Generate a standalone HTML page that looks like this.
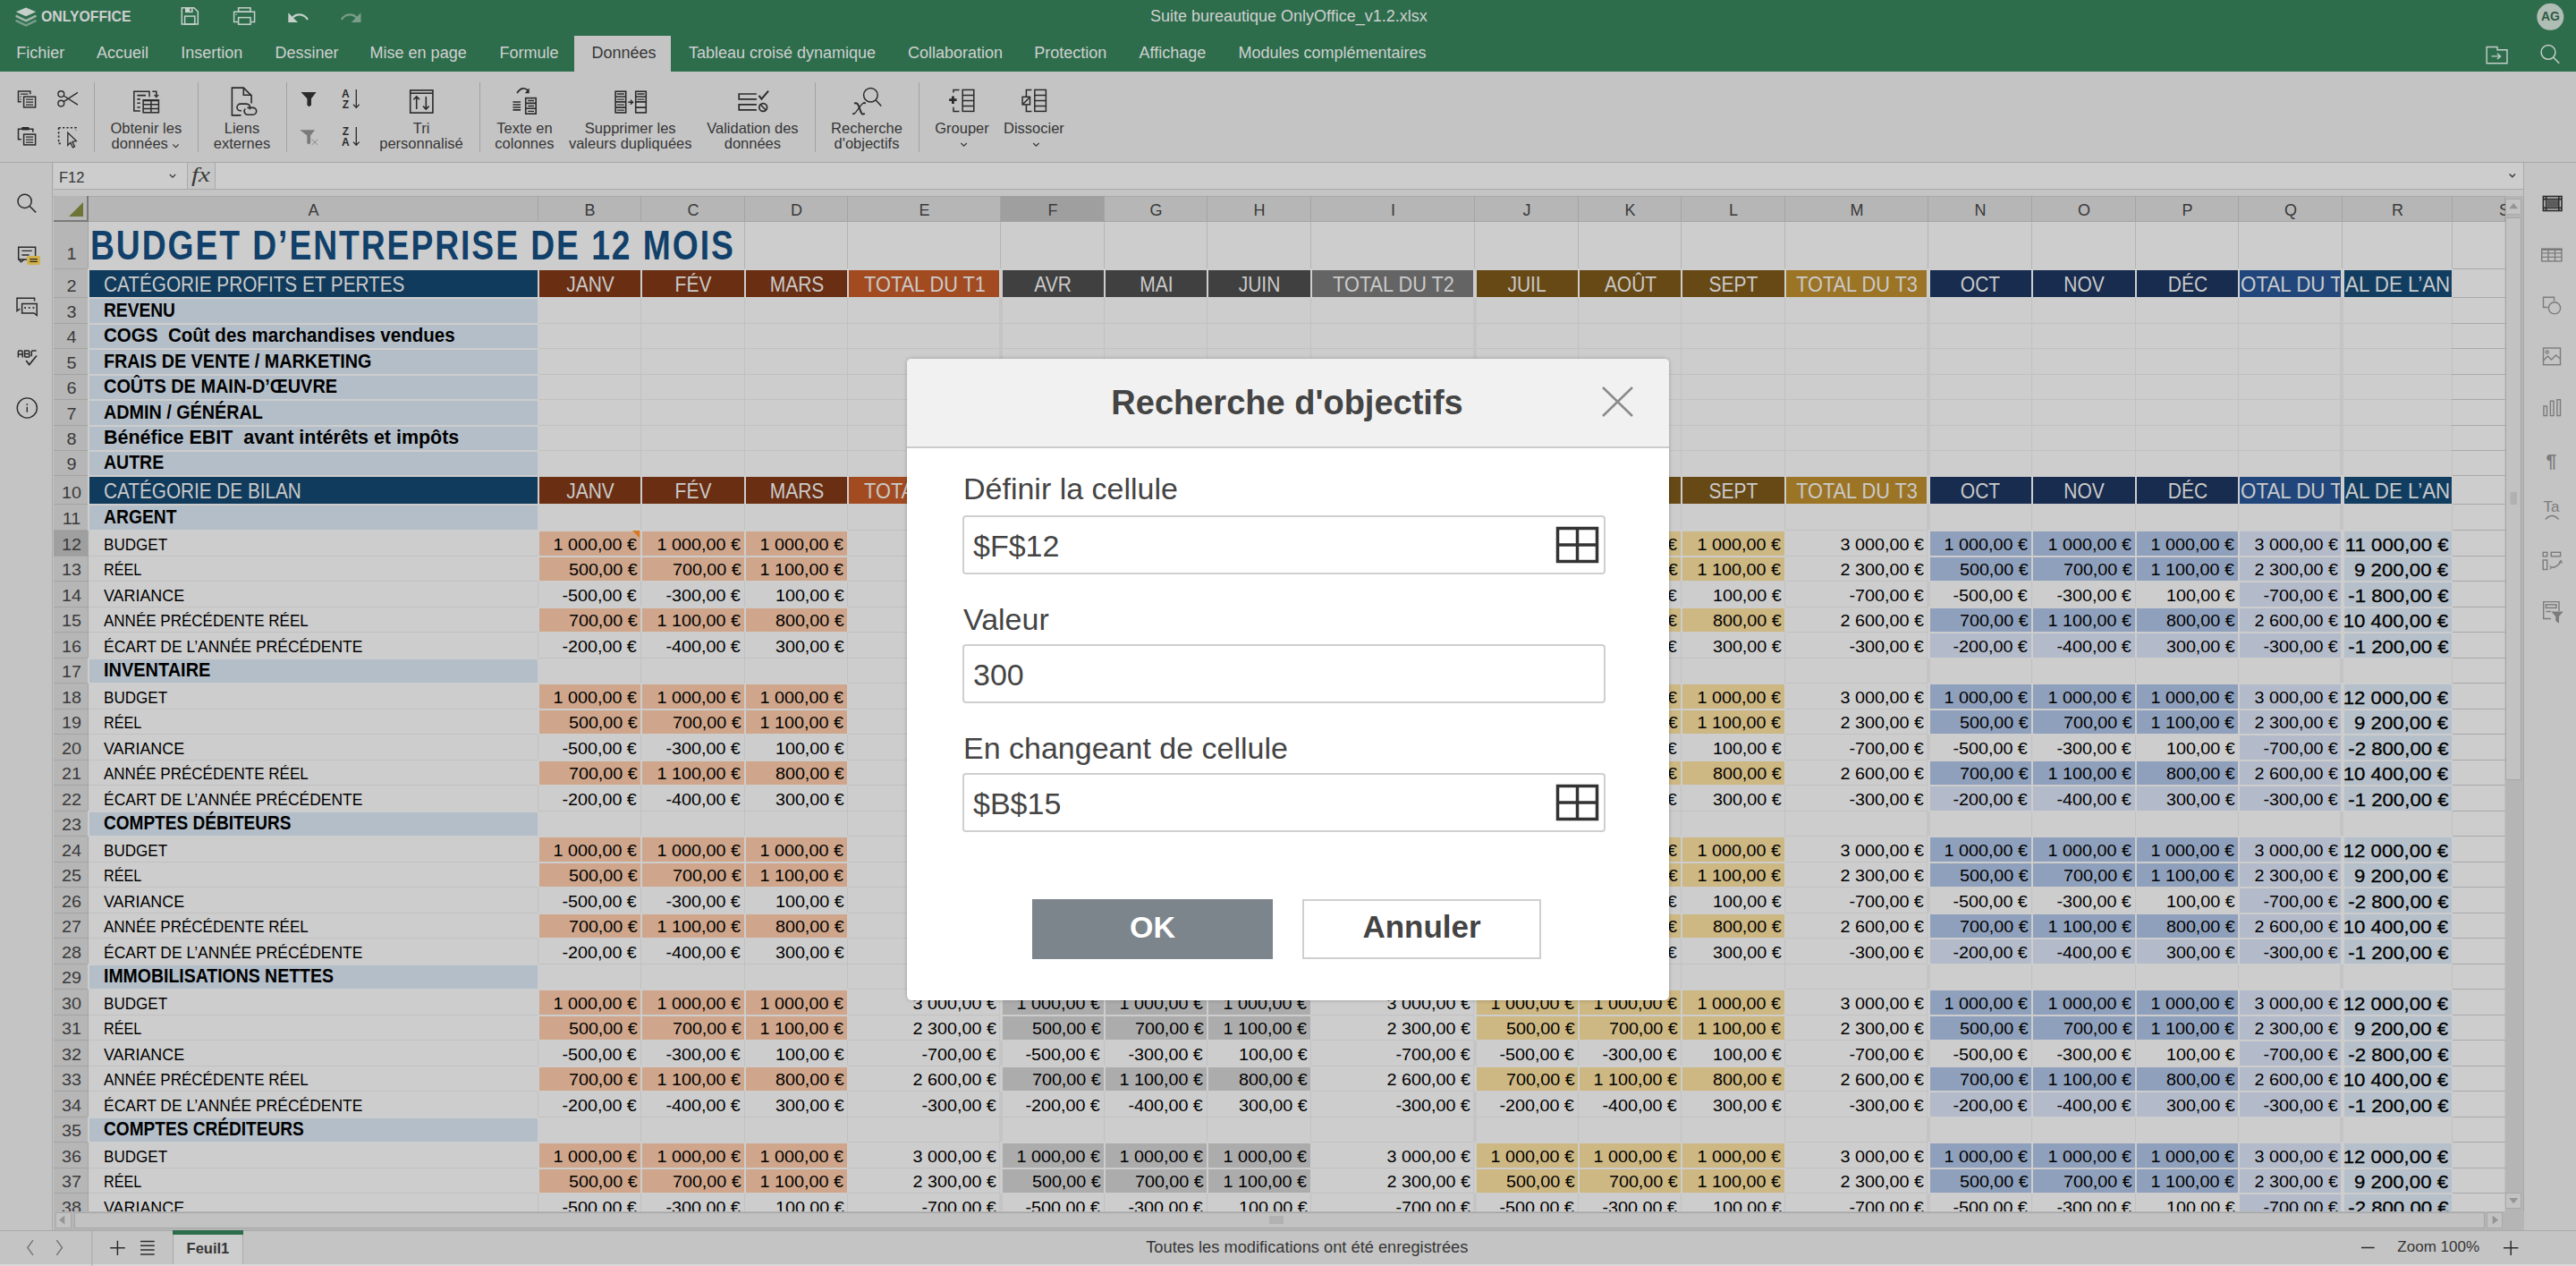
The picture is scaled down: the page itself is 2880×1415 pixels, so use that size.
<!DOCTYPE html><html><head><meta charset="utf-8"><style>
html,body{margin:0;padding:0;}
body{width:2880px;height:1415px;overflow:hidden;position:relative;background:#c4c4c4;font-family:'Liberation Sans', sans-serif;}
.t{position:absolute;line-height:0;white-space:pre;}
.r{position:absolute;}
svg{position:absolute;overflow:visible;}
</style></head><body>
<div class="r" style="left:0px;top:0px;width:2880px;height:80px;background:#2d6d4c;"></div>
<div class="t" style="left:46px;top:19.25px;font-size:17px;font-weight:700;color:#d0d0d0;transform:scaleX(0.93);transform-origin:0 0;">ONLYOFFICE</div>
<div class="t" style="left:1286px;top:18.10px;font-size:18px;font-weight:400;color:#d0d0d0;">Suite bureautique OnlyOffice_v1.2.xlsx</div>
<div class="r" style="left:642px;top:40px;width:108px;height:40px;background:#c4c4c4;"></div>
<div class="t" style="left:18.3px;top:58.60px;font-size:18px;font-weight:400;color:#d0d0d0;">Fichier</div>
<div class="t" style="left:108px;top:58.60px;font-size:18px;font-weight:400;color:#d0d0d0;">Accueil</div>
<div class="t" style="left:202.2px;top:58.60px;font-size:18px;font-weight:400;color:#d0d0d0;">Insertion</div>
<div class="t" style="left:307.4px;top:58.60px;font-size:18px;font-weight:400;color:#d0d0d0;">Dessiner</div>
<div class="t" style="left:413.6px;top:58.60px;font-size:18px;font-weight:400;color:#d0d0d0;">Mise en page</div>
<div class="t" style="left:558.4px;top:58.60px;font-size:18px;font-weight:400;color:#d0d0d0;">Formule</div>
<div class="t" style="left:661.5px;top:58.60px;font-size:18px;font-weight:400;color:#363636;">Données</div>
<div class="t" style="left:770px;top:58.60px;font-size:18px;font-weight:400;color:#d0d0d0;">Tableau croisé dynamique</div>
<div class="t" style="left:1015px;top:58.60px;font-size:18px;font-weight:400;color:#d0d0d0;">Collaboration</div>
<div class="t" style="left:1156.2px;top:58.60px;font-size:18px;font-weight:400;color:#d0d0d0;">Protection</div>
<div class="t" style="left:1273.6px;top:58.60px;font-size:18px;font-weight:400;color:#d0d0d0;">Affichage</div>
<div class="t" style="left:1384.5px;top:58.60px;font-size:18px;font-weight:400;color:#d0d0d0;">Modules complémentaires</div>
<div class="r" style="left:0px;top:181px;width:2880px;height:1px;background:#a9a9a9;"></div>
<div class="t" style="left:163.3px;top:142.53px;font-size:16.5px;font-weight:400;color:#363636;transform:translateX(-50%);">Obtenir les</div>
<div class="t" style="left:163.3px;top:159.72px;font-size:16.5px;font-weight:400;color:#363636;transform:translateX(-50%);"></div>
<div class="t" style="left:270.5px;top:142.53px;font-size:16.5px;font-weight:400;color:#363636;transform:translateX(-50%);">Liens</div>
<div class="t" style="left:270.5px;top:159.72px;font-size:16.5px;font-weight:400;color:#363636;transform:translateX(-50%);">externes</div>
<div class="t" style="left:471px;top:142.53px;font-size:16.5px;font-weight:400;color:#363636;transform:translateX(-50%);">Tri</div>
<div class="t" style="left:471px;top:159.72px;font-size:16.5px;font-weight:400;color:#363636;transform:translateX(-50%);">personnalisé</div>
<div class="t" style="left:586.4px;top:142.53px;font-size:16.5px;font-weight:400;color:#363636;transform:translateX(-50%);">Texte en</div>
<div class="t" style="left:586.4px;top:159.72px;font-size:16.5px;font-weight:400;color:#363636;transform:translateX(-50%);">colonnes</div>
<div class="t" style="left:704.7px;top:142.53px;font-size:16.5px;font-weight:400;color:#363636;transform:translateX(-50%);">Supprimer les</div>
<div class="t" style="left:704.7px;top:159.72px;font-size:16.5px;font-weight:400;color:#363636;transform:translateX(-50%);">valeurs dupliquées</div>
<div class="t" style="left:841.4px;top:142.53px;font-size:16.5px;font-weight:400;color:#363636;transform:translateX(-50%);">Validation des</div>
<div class="t" style="left:841.4px;top:159.72px;font-size:16.5px;font-weight:400;color:#363636;transform:translateX(-50%);">données</div>
<div class="t" style="left:969px;top:142.53px;font-size:16.5px;font-weight:400;color:#363636;transform:translateX(-50%);">Recherche</div>
<div class="t" style="left:969px;top:159.72px;font-size:16.5px;font-weight:400;color:#363636;transform:translateX(-50%);">d'objectifs</div>
<div class="t" style="left:1075.5px;top:142.53px;font-size:16.5px;font-weight:400;color:#363636;transform:translateX(-50%);">Grouper</div>
<div class="t" style="left:1155.9px;top:142.53px;font-size:16.5px;font-weight:400;color:#363636;transform:translateX(-50%);">Dissocier</div>
<div class="t" style="left:156.2px;top:159.72px;font-size:16.5px;font-weight:400;color:#363636;transform:translateX(-50%);">données</div>
<div class="r" style="left:105px;top:92px;width:1px;height:78px;background:#a2a2a2;"></div>
<div class="r" style="left:221px;top:92px;width:1px;height:78px;background:#a2a2a2;"></div>
<div class="r" style="left:320px;top:92px;width:1px;height:78px;background:#a2a2a2;"></div>
<div class="r" style="left:536px;top:92px;width:1px;height:78px;background:#a2a2a2;"></div>
<div class="r" style="left:911px;top:92px;width:1px;height:78px;background:#a2a2a2;"></div>
<div class="r" style="left:1027px;top:92px;width:1px;height:78px;background:#a2a2a2;"></div>
<div class="r" style="left:60px;top:182px;width:2762px;height:29px;background:#cdcdcd;"></div>
<div class="r" style="left:209px;top:182px;width:1px;height:29px;background:#a9a9a9;"></div>
<div class="r" style="left:210px;top:182px;width:31px;height:29px;background:#c6c6c6;"></div>
<div class="r" style="left:240px;top:182px;width:1px;height:29px;background:#a9a9a9;"></div>
<div class="r" style="left:60px;top:211px;width:2762px;height:1px;background:#a9a9a9;"></div>
<div class="r" style="left:59px;top:218.5px;width:2763px;height:1.0px;background:#a9a9a9;"></div>
<div class="t" style="left:66px;top:198.22px;font-size:16.5px;font-weight:400;color:#363636;">F12</div>
<div class="t" style="left:2763px;top:-0.35px;font-size:1px;font-weight:400;color:#000;"></div>
<div class="r" style="left:58px;top:182px;width:1px;height:1193px;background:#a9a9a9;"></div>
<div class="r" style="left:2821px;top:182px;width:1px;height:1193px;background:#a9a9a9;"></div>
<div class="r" style="left:99px;top:248px;width:2702px;height:1106px;background:#cdcdcd;"></div>
<div class="r" style="left:601px;top:248px;width:1px;height:1106px;background:#c1c1c1;"></div>
<div class="r" style="left:716px;top:248px;width:1px;height:1106px;background:#c1c1c1;"></div>
<div class="r" style="left:832px;top:248px;width:1px;height:1106px;background:#c1c1c1;"></div>
<div class="r" style="left:947px;top:248px;width:1px;height:1106px;background:#c1c1c1;"></div>
<div class="r" style="left:1118px;top:248px;width:1px;height:1106px;background:#c1c1c1;"></div>
<div class="r" style="left:1234px;top:248px;width:1px;height:1106px;background:#c1c1c1;"></div>
<div class="r" style="left:1349px;top:248px;width:1px;height:1106px;background:#c1c1c1;"></div>
<div class="r" style="left:1465px;top:248px;width:1px;height:1106px;background:#c1c1c1;"></div>
<div class="r" style="left:1648px;top:248px;width:1px;height:1106px;background:#c1c1c1;"></div>
<div class="r" style="left:1764px;top:248px;width:1px;height:1106px;background:#c1c1c1;"></div>
<div class="r" style="left:1879px;top:248px;width:1px;height:1106px;background:#c1c1c1;"></div>
<div class="r" style="left:1995px;top:248px;width:1px;height:1106px;background:#c1c1c1;"></div>
<div class="r" style="left:2155px;top:248px;width:1px;height:1106px;background:#c1c1c1;"></div>
<div class="r" style="left:2271px;top:248px;width:1px;height:1106px;background:#c1c1c1;"></div>
<div class="r" style="left:2387px;top:248px;width:1px;height:1106px;background:#c1c1c1;"></div>
<div class="r" style="left:2502px;top:248px;width:1px;height:1106px;background:#c1c1c1;"></div>
<div class="r" style="left:2618px;top:248px;width:1px;height:1106px;background:#c1c1c1;"></div>
<div class="r" style="left:2741px;top:248px;width:1px;height:1106px;background:#c1c1c1;"></div>
<div class="r" style="left:2800px;top:248px;width:1px;height:1106px;background:#c1c1c1;"></div>
<div class="r" style="left:99px;top:300px;width:2702px;height:1px;background:#c1c1c1;"></div>
<div class="r" style="left:99px;top:332px;width:2702px;height:1px;background:#c1c1c1;"></div>
<div class="r" style="left:99px;top:361px;width:2702px;height:1px;background:#c1c1c1;"></div>
<div class="r" style="left:99px;top:389px;width:2702px;height:1px;background:#c1c1c1;"></div>
<div class="r" style="left:99px;top:418px;width:2702px;height:1px;background:#c1c1c1;"></div>
<div class="r" style="left:99px;top:446px;width:2702px;height:1px;background:#c1c1c1;"></div>
<div class="r" style="left:99px;top:475px;width:2702px;height:1px;background:#c1c1c1;"></div>
<div class="r" style="left:99px;top:503px;width:2702px;height:1px;background:#c1c1c1;"></div>
<div class="r" style="left:99px;top:531px;width:2702px;height:1px;background:#c1c1c1;"></div>
<div class="r" style="left:99px;top:563px;width:2702px;height:1px;background:#c1c1c1;"></div>
<div class="r" style="left:99px;top:592px;width:2702px;height:1px;background:#c1c1c1;"></div>
<div class="r" style="left:99px;top:621px;width:2702px;height:1px;background:#c1c1c1;"></div>
<div class="r" style="left:99px;top:649px;width:2702px;height:1px;background:#c1c1c1;"></div>
<div class="r" style="left:99px;top:678px;width:2702px;height:1px;background:#c1c1c1;"></div>
<div class="r" style="left:99px;top:706px;width:2702px;height:1px;background:#c1c1c1;"></div>
<div class="r" style="left:99px;top:735px;width:2702px;height:1px;background:#c1c1c1;"></div>
<div class="r" style="left:99px;top:763px;width:2702px;height:1px;background:#c1c1c1;"></div>
<div class="r" style="left:99px;top:792px;width:2702px;height:1px;background:#c1c1c1;"></div>
<div class="r" style="left:99px;top:820px;width:2702px;height:1px;background:#c1c1c1;"></div>
<div class="r" style="left:99px;top:849px;width:2702px;height:1px;background:#c1c1c1;"></div>
<div class="r" style="left:99px;top:877px;width:2702px;height:1px;background:#c1c1c1;"></div>
<div class="r" style="left:99px;top:906px;width:2702px;height:1px;background:#c1c1c1;"></div>
<div class="r" style="left:99px;top:934px;width:2702px;height:1px;background:#c1c1c1;"></div>
<div class="r" style="left:99px;top:963px;width:2702px;height:1px;background:#c1c1c1;"></div>
<div class="r" style="left:99px;top:991px;width:2702px;height:1px;background:#c1c1c1;"></div>
<div class="r" style="left:99px;top:1020px;width:2702px;height:1px;background:#c1c1c1;"></div>
<div class="r" style="left:99px;top:1048px;width:2702px;height:1px;background:#c1c1c1;"></div>
<div class="r" style="left:99px;top:1077px;width:2702px;height:1px;background:#c1c1c1;"></div>
<div class="r" style="left:99px;top:1105px;width:2702px;height:1px;background:#c1c1c1;"></div>
<div class="r" style="left:99px;top:1134px;width:2702px;height:1px;background:#c1c1c1;"></div>
<div class="r" style="left:99px;top:1162px;width:2702px;height:1px;background:#c1c1c1;"></div>
<div class="r" style="left:99px;top:1191px;width:2702px;height:1px;background:#c1c1c1;"></div>
<div class="r" style="left:99px;top:1219px;width:2702px;height:1px;background:#c1c1c1;"></div>
<div class="r" style="left:99px;top:1248px;width:2702px;height:1px;background:#c1c1c1;"></div>
<div class="r" style="left:99px;top:1276px;width:2702px;height:1px;background:#c1c1c1;"></div>
<div class="r" style="left:99px;top:1305px;width:2702px;height:1px;background:#c1c1c1;"></div>
<div class="r" style="left:99px;top:1333px;width:2702px;height:1px;background:#c1c1c1;"></div>
<div class="r" style="left:99px;top:1362px;width:2702px;height:1px;background:#c1c1c1;"></div>
<div class="r" style="left:601px;top:248px;width:1px;height:53px;background:#b4b4b4;"></div>
<div class="r" style="left:716px;top:248px;width:1px;height:53px;background:#b4b4b4;"></div>
<div class="r" style="left:832px;top:248px;width:1px;height:53px;background:#b4b4b4;"></div>
<div class="r" style="left:947px;top:248px;width:1px;height:53px;background:#b4b4b4;"></div>
<div class="r" style="left:1118px;top:248px;width:1px;height:53px;background:#b4b4b4;"></div>
<div class="r" style="left:1234px;top:248px;width:1px;height:53px;background:#b4b4b4;"></div>
<div class="r" style="left:1349px;top:248px;width:1px;height:53px;background:#b4b4b4;"></div>
<div class="r" style="left:1465px;top:248px;width:1px;height:53px;background:#b4b4b4;"></div>
<div class="r" style="left:1648px;top:248px;width:1px;height:53px;background:#b4b4b4;"></div>
<div class="r" style="left:1764px;top:248px;width:1px;height:53px;background:#b4b4b4;"></div>
<div class="r" style="left:1879px;top:248px;width:1px;height:53px;background:#b4b4b4;"></div>
<div class="r" style="left:1995px;top:248px;width:1px;height:53px;background:#b4b4b4;"></div>
<div class="r" style="left:2155px;top:248px;width:1px;height:53px;background:#b4b4b4;"></div>
<div class="r" style="left:2271px;top:248px;width:1px;height:53px;background:#b4b4b4;"></div>
<div class="r" style="left:2387px;top:248px;width:1px;height:53px;background:#b4b4b4;"></div>
<div class="r" style="left:2502px;top:248px;width:1px;height:53px;background:#b4b4b4;"></div>
<div class="r" style="left:2618px;top:248px;width:1px;height:53px;background:#b4b4b4;"></div>
<div class="r" style="left:2741px;top:248px;width:1px;height:53px;background:#b4b4b4;"></div>
<div class="r" style="left:1117px;top:301px;width:4px;height:1053px;background:#c4c4c4;"></div>
<div class="r" style="left:1647px;top:301px;width:4px;height:1053px;background:#c4c4c4;"></div>
<div class="r" style="left:2154px;top:301px;width:4px;height:1053px;background:#c4c4c4;"></div>
<div class="r" style="left:2616px;top:301px;width:4px;height:1053px;background:#c4c4c4;"></div>
<div class="r" style="left:2741px;top:300px;width:60px;height:1px;background:#a9a9a9;"></div>
<div class="r" style="left:2741px;top:332px;width:60px;height:1px;background:#a9a9a9;"></div>
<div class="r" style="left:2741px;top:361px;width:60px;height:1px;background:#a9a9a9;"></div>
<div class="r" style="left:2741px;top:389px;width:60px;height:1px;background:#a9a9a9;"></div>
<div class="r" style="left:2741px;top:418px;width:60px;height:1px;background:#a9a9a9;"></div>
<div class="r" style="left:2741px;top:446px;width:60px;height:1px;background:#a9a9a9;"></div>
<div class="r" style="left:2741px;top:475px;width:60px;height:1px;background:#a9a9a9;"></div>
<div class="r" style="left:2741px;top:503px;width:60px;height:1px;background:#a9a9a9;"></div>
<div class="r" style="left:2741px;top:531px;width:60px;height:1px;background:#a9a9a9;"></div>
<div class="r" style="left:2741px;top:563px;width:60px;height:1px;background:#a9a9a9;"></div>
<div class="r" style="left:2741px;top:592px;width:60px;height:1px;background:#a9a9a9;"></div>
<div class="r" style="left:2741px;top:621px;width:60px;height:1px;background:#a9a9a9;"></div>
<div class="r" style="left:2741px;top:649px;width:60px;height:1px;background:#a9a9a9;"></div>
<div class="r" style="left:2741px;top:678px;width:60px;height:1px;background:#a9a9a9;"></div>
<div class="r" style="left:2741px;top:706px;width:60px;height:1px;background:#a9a9a9;"></div>
<div class="r" style="left:2741px;top:735px;width:60px;height:1px;background:#a9a9a9;"></div>
<div class="r" style="left:2741px;top:763px;width:60px;height:1px;background:#a9a9a9;"></div>
<div class="r" style="left:2741px;top:792px;width:60px;height:1px;background:#a9a9a9;"></div>
<div class="r" style="left:2741px;top:820px;width:60px;height:1px;background:#a9a9a9;"></div>
<div class="r" style="left:2741px;top:849px;width:60px;height:1px;background:#a9a9a9;"></div>
<div class="r" style="left:2741px;top:877px;width:60px;height:1px;background:#a9a9a9;"></div>
<div class="r" style="left:2741px;top:906px;width:60px;height:1px;background:#a9a9a9;"></div>
<div class="r" style="left:2741px;top:934px;width:60px;height:1px;background:#a9a9a9;"></div>
<div class="r" style="left:2741px;top:963px;width:60px;height:1px;background:#a9a9a9;"></div>
<div class="r" style="left:2741px;top:991px;width:60px;height:1px;background:#a9a9a9;"></div>
<div class="r" style="left:2741px;top:1020px;width:60px;height:1px;background:#a9a9a9;"></div>
<div class="r" style="left:2741px;top:1048px;width:60px;height:1px;background:#a9a9a9;"></div>
<div class="r" style="left:2741px;top:1077px;width:60px;height:1px;background:#a9a9a9;"></div>
<div class="r" style="left:2741px;top:1105px;width:60px;height:1px;background:#a9a9a9;"></div>
<div class="r" style="left:2741px;top:1134px;width:60px;height:1px;background:#a9a9a9;"></div>
<div class="r" style="left:2741px;top:1162px;width:60px;height:1px;background:#a9a9a9;"></div>
<div class="r" style="left:2741px;top:1191px;width:60px;height:1px;background:#a9a9a9;"></div>
<div class="r" style="left:2741px;top:1219px;width:60px;height:1px;background:#a9a9a9;"></div>
<div class="r" style="left:2741px;top:1248px;width:60px;height:1px;background:#a9a9a9;"></div>
<div class="r" style="left:2741px;top:1276px;width:60px;height:1px;background:#a9a9a9;"></div>
<div class="r" style="left:2741px;top:1305px;width:60px;height:1px;background:#a9a9a9;"></div>
<div class="r" style="left:2741px;top:1333px;width:60px;height:1px;background:#a9a9a9;"></div>
<div class="r" style="left:2741px;top:1362px;width:60px;height:1px;background:#a9a9a9;"></div>
<div class="r" style="left:60px;top:219.5px;width:2741px;height:28.5px;background:#b6b6b6;"></div>
<div class="r" style="left:60px;top:247px;width:2741px;height:1px;background:#a4a4a4;"></div>
<div class="r" style="left:601px;top:219px;width:1px;height:28px;background:#a4a4a4;"></div>
<div class="t" style="left:350.5px;top:235.20px;font-size:18px;font-weight:400;color:#3a3a3a;transform:translateX(-50%);">A</div>
<div class="r" style="left:716px;top:219px;width:1px;height:28px;background:#a4a4a4;"></div>
<div class="t" style="left:659.5px;top:235.20px;font-size:18px;font-weight:400;color:#3a3a3a;transform:translateX(-50%);">B</div>
<div class="r" style="left:832px;top:219px;width:1px;height:28px;background:#a4a4a4;"></div>
<div class="t" style="left:775.0px;top:235.20px;font-size:18px;font-weight:400;color:#3a3a3a;transform:translateX(-50%);">C</div>
<div class="r" style="left:947px;top:219px;width:1px;height:28px;background:#a4a4a4;"></div>
<div class="t" style="left:890.5px;top:235.20px;font-size:18px;font-weight:400;color:#3a3a3a;transform:translateX(-50%);">D</div>
<div class="r" style="left:1118px;top:219px;width:1px;height:28px;background:#a4a4a4;"></div>
<div class="t" style="left:1033.5px;top:235.20px;font-size:18px;font-weight:400;color:#3a3a3a;transform:translateX(-50%);">E</div>
<div class="r" style="left:1119px;top:219px;width:116px;height:29px;background:#9f9f9f;"></div>
<div class="r" style="left:1234px;top:219px;width:1px;height:28px;background:#a4a4a4;"></div>
<div class="t" style="left:1177.0px;top:235.20px;font-size:18px;font-weight:400;color:#3a3a3a;transform:translateX(-50%);">F</div>
<div class="r" style="left:1349px;top:219px;width:1px;height:28px;background:#a4a4a4;"></div>
<div class="t" style="left:1292.5px;top:235.20px;font-size:18px;font-weight:400;color:#3a3a3a;transform:translateX(-50%);">G</div>
<div class="r" style="left:1465px;top:219px;width:1px;height:28px;background:#a4a4a4;"></div>
<div class="t" style="left:1408.0px;top:235.20px;font-size:18px;font-weight:400;color:#3a3a3a;transform:translateX(-50%);">H</div>
<div class="r" style="left:1648px;top:219px;width:1px;height:28px;background:#a4a4a4;"></div>
<div class="t" style="left:1557.5px;top:235.20px;font-size:18px;font-weight:400;color:#3a3a3a;transform:translateX(-50%);">I</div>
<div class="r" style="left:1764px;top:219px;width:1px;height:28px;background:#a4a4a4;"></div>
<div class="t" style="left:1707.0px;top:235.20px;font-size:18px;font-weight:400;color:#3a3a3a;transform:translateX(-50%);">J</div>
<div class="r" style="left:1879px;top:219px;width:1px;height:28px;background:#a4a4a4;"></div>
<div class="t" style="left:1822.5px;top:235.20px;font-size:18px;font-weight:400;color:#3a3a3a;transform:translateX(-50%);">K</div>
<div class="r" style="left:1995px;top:219px;width:1px;height:28px;background:#a4a4a4;"></div>
<div class="t" style="left:1938.0px;top:235.20px;font-size:18px;font-weight:400;color:#3a3a3a;transform:translateX(-50%);">L</div>
<div class="r" style="left:2155px;top:219px;width:1px;height:28px;background:#a4a4a4;"></div>
<div class="t" style="left:2076.0px;top:235.20px;font-size:18px;font-weight:400;color:#3a3a3a;transform:translateX(-50%);">M</div>
<div class="r" style="left:2271px;top:219px;width:1px;height:28px;background:#a4a4a4;"></div>
<div class="t" style="left:2214.0px;top:235.20px;font-size:18px;font-weight:400;color:#3a3a3a;transform:translateX(-50%);">N</div>
<div class="r" style="left:2387px;top:219px;width:1px;height:28px;background:#a4a4a4;"></div>
<div class="t" style="left:2330.0px;top:235.20px;font-size:18px;font-weight:400;color:#3a3a3a;transform:translateX(-50%);">O</div>
<div class="r" style="left:2502px;top:219px;width:1px;height:28px;background:#a4a4a4;"></div>
<div class="t" style="left:2445.5px;top:235.20px;font-size:18px;font-weight:400;color:#3a3a3a;transform:translateX(-50%);">P</div>
<div class="r" style="left:2618px;top:219px;width:1px;height:28px;background:#a4a4a4;"></div>
<div class="t" style="left:2561.0px;top:235.20px;font-size:18px;font-weight:400;color:#3a3a3a;transform:translateX(-50%);">Q</div>
<div class="r" style="left:2741px;top:219px;width:1px;height:28px;background:#a4a4a4;"></div>
<div class="t" style="left:2680.5px;top:235.20px;font-size:18px;font-weight:400;color:#3a3a3a;transform:translateX(-50%);">R</div>
<div class="r" style="left:2800px;top:219px;width:1px;height:28px;background:#a4a4a4;"></div>
<div class="t" style="left:2800px;top:235.20px;font-size:18px;font-weight:400;color:#3a3a3a;transform:translateX(-50%);">S</div>
<div class="r" style="left:60px;top:248px;width:39px;height:1106px;background:#b6b6b6;"></div>
<div class="r" style="left:98px;top:248px;width:1px;height:1106px;background:#a4a4a4;"></div>
<div class="r" style="left:60px;top:300px;width:38px;height:1px;background:#a4a4a4;"></div>
<div class="t" style="left:79.5px;top:284.30px;font-size:18px;font-weight:400;color:#3a3a3a;transform:translateX(-50%) scaleX(1.1);">1</div>
<div class="r" style="left:60px;top:332px;width:38px;height:1px;background:#a4a4a4;"></div>
<div class="t" style="left:79.5px;top:319.70px;font-size:18px;font-weight:400;color:#3a3a3a;transform:translateX(-50%) scaleX(1.1);">2</div>
<div class="r" style="left:60px;top:361px;width:38px;height:1px;background:#a4a4a4;"></div>
<div class="t" style="left:79.5px;top:348.70px;font-size:18px;font-weight:400;color:#3a3a3a;transform:translateX(-50%) scaleX(1.1);">3</div>
<div class="r" style="left:60px;top:389px;width:38px;height:1px;background:#a4a4a4;"></div>
<div class="t" style="left:79.5px;top:376.70px;font-size:18px;font-weight:400;color:#3a3a3a;transform:translateX(-50%) scaleX(1.1);">4</div>
<div class="r" style="left:60px;top:418px;width:38px;height:1px;background:#a4a4a4;"></div>
<div class="t" style="left:79.5px;top:405.70px;font-size:18px;font-weight:400;color:#3a3a3a;transform:translateX(-50%) scaleX(1.1);">5</div>
<div class="r" style="left:60px;top:446px;width:38px;height:1px;background:#a4a4a4;"></div>
<div class="t" style="left:79.5px;top:433.70px;font-size:18px;font-weight:400;color:#3a3a3a;transform:translateX(-50%) scaleX(1.1);">6</div>
<div class="r" style="left:60px;top:475px;width:38px;height:1px;background:#a4a4a4;"></div>
<div class="t" style="left:79.5px;top:462.70px;font-size:18px;font-weight:400;color:#3a3a3a;transform:translateX(-50%) scaleX(1.1);">7</div>
<div class="r" style="left:60px;top:503px;width:38px;height:1px;background:#a4a4a4;"></div>
<div class="t" style="left:79.5px;top:490.70px;font-size:18px;font-weight:400;color:#3a3a3a;transform:translateX(-50%) scaleX(1.1);">8</div>
<div class="r" style="left:60px;top:531px;width:38px;height:1px;background:#a4a4a4;"></div>
<div class="t" style="left:79.5px;top:518.70px;font-size:18px;font-weight:400;color:#3a3a3a;transform:translateX(-50%) scaleX(1.1);">9</div>
<div class="r" style="left:60px;top:563px;width:38px;height:1px;background:#a4a4a4;"></div>
<div class="t" style="left:79.5px;top:550.70px;font-size:18px;font-weight:400;color:#3a3a3a;transform:translateX(-50%) scaleX(1.1);">10</div>
<div class="r" style="left:60px;top:592px;width:38px;height:1px;background:#a4a4a4;"></div>
<div class="t" style="left:79.5px;top:579.70px;font-size:18px;font-weight:400;color:#3a3a3a;transform:translateX(-50%) scaleX(1.1);">11</div>
<div class="r" style="left:60px;top:593px;width:38px;height:28px;background:#9f9f9f;"></div>
<div class="r" style="left:60px;top:621px;width:38px;height:1px;background:#a4a4a4;"></div>
<div class="t" style="left:79.5px;top:608.70px;font-size:18px;font-weight:400;color:#3a3a3a;transform:translateX(-50%) scaleX(1.1);">12</div>
<div class="r" style="left:60px;top:649px;width:38px;height:1px;background:#a4a4a4;"></div>
<div class="t" style="left:79.5px;top:636.70px;font-size:18px;font-weight:400;color:#3a3a3a;transform:translateX(-50%) scaleX(1.1);">13</div>
<div class="r" style="left:60px;top:678px;width:38px;height:1px;background:#a4a4a4;"></div>
<div class="t" style="left:79.5px;top:665.70px;font-size:18px;font-weight:400;color:#3a3a3a;transform:translateX(-50%) scaleX(1.1);">14</div>
<div class="r" style="left:60px;top:706px;width:38px;height:1px;background:#a4a4a4;"></div>
<div class="t" style="left:79.5px;top:693.70px;font-size:18px;font-weight:400;color:#3a3a3a;transform:translateX(-50%) scaleX(1.1);">15</div>
<div class="r" style="left:60px;top:735px;width:38px;height:1px;background:#a4a4a4;"></div>
<div class="t" style="left:79.5px;top:722.70px;font-size:18px;font-weight:400;color:#3a3a3a;transform:translateX(-50%) scaleX(1.1);">16</div>
<div class="r" style="left:60px;top:763px;width:38px;height:1px;background:#a4a4a4;"></div>
<div class="t" style="left:79.5px;top:750.70px;font-size:18px;font-weight:400;color:#3a3a3a;transform:translateX(-50%) scaleX(1.1);">17</div>
<div class="r" style="left:60px;top:792px;width:38px;height:1px;background:#a4a4a4;"></div>
<div class="t" style="left:79.5px;top:779.70px;font-size:18px;font-weight:400;color:#3a3a3a;transform:translateX(-50%) scaleX(1.1);">18</div>
<div class="r" style="left:60px;top:820px;width:38px;height:1px;background:#a4a4a4;"></div>
<div class="t" style="left:79.5px;top:807.70px;font-size:18px;font-weight:400;color:#3a3a3a;transform:translateX(-50%) scaleX(1.1);">19</div>
<div class="r" style="left:60px;top:849px;width:38px;height:1px;background:#a4a4a4;"></div>
<div class="t" style="left:79.5px;top:836.70px;font-size:18px;font-weight:400;color:#3a3a3a;transform:translateX(-50%) scaleX(1.1);">20</div>
<div class="r" style="left:60px;top:877px;width:38px;height:1px;background:#a4a4a4;"></div>
<div class="t" style="left:79.5px;top:864.70px;font-size:18px;font-weight:400;color:#3a3a3a;transform:translateX(-50%) scaleX(1.1);">21</div>
<div class="r" style="left:60px;top:906px;width:38px;height:1px;background:#a4a4a4;"></div>
<div class="t" style="left:79.5px;top:893.70px;font-size:18px;font-weight:400;color:#3a3a3a;transform:translateX(-50%) scaleX(1.1);">22</div>
<div class="r" style="left:60px;top:934px;width:38px;height:1px;background:#a4a4a4;"></div>
<div class="t" style="left:79.5px;top:921.70px;font-size:18px;font-weight:400;color:#3a3a3a;transform:translateX(-50%) scaleX(1.1);">23</div>
<div class="r" style="left:60px;top:963px;width:38px;height:1px;background:#a4a4a4;"></div>
<div class="t" style="left:79.5px;top:950.70px;font-size:18px;font-weight:400;color:#3a3a3a;transform:translateX(-50%) scaleX(1.1);">24</div>
<div class="r" style="left:60px;top:991px;width:38px;height:1px;background:#a4a4a4;"></div>
<div class="t" style="left:79.5px;top:978.70px;font-size:18px;font-weight:400;color:#3a3a3a;transform:translateX(-50%) scaleX(1.1);">25</div>
<div class="r" style="left:60px;top:1020px;width:38px;height:1px;background:#a4a4a4;"></div>
<div class="t" style="left:79.5px;top:1007.70px;font-size:18px;font-weight:400;color:#3a3a3a;transform:translateX(-50%) scaleX(1.1);">26</div>
<div class="r" style="left:60px;top:1048px;width:38px;height:1px;background:#a4a4a4;"></div>
<div class="t" style="left:79.5px;top:1035.70px;font-size:18px;font-weight:400;color:#3a3a3a;transform:translateX(-50%) scaleX(1.1);">27</div>
<div class="r" style="left:60px;top:1077px;width:38px;height:1px;background:#a4a4a4;"></div>
<div class="t" style="left:79.5px;top:1064.70px;font-size:18px;font-weight:400;color:#3a3a3a;transform:translateX(-50%) scaleX(1.1);">28</div>
<div class="r" style="left:60px;top:1105px;width:38px;height:1px;background:#a4a4a4;"></div>
<div class="t" style="left:79.5px;top:1092.70px;font-size:18px;font-weight:400;color:#3a3a3a;transform:translateX(-50%) scaleX(1.1);">29</div>
<div class="r" style="left:60px;top:1134px;width:38px;height:1px;background:#a4a4a4;"></div>
<div class="t" style="left:79.5px;top:1121.70px;font-size:18px;font-weight:400;color:#3a3a3a;transform:translateX(-50%) scaleX(1.1);">30</div>
<div class="r" style="left:60px;top:1162px;width:38px;height:1px;background:#a4a4a4;"></div>
<div class="t" style="left:79.5px;top:1149.70px;font-size:18px;font-weight:400;color:#3a3a3a;transform:translateX(-50%) scaleX(1.1);">31</div>
<div class="r" style="left:60px;top:1191px;width:38px;height:1px;background:#a4a4a4;"></div>
<div class="t" style="left:79.5px;top:1178.70px;font-size:18px;font-weight:400;color:#3a3a3a;transform:translateX(-50%) scaleX(1.1);">32</div>
<div class="r" style="left:60px;top:1219px;width:38px;height:1px;background:#a4a4a4;"></div>
<div class="t" style="left:79.5px;top:1206.70px;font-size:18px;font-weight:400;color:#3a3a3a;transform:translateX(-50%) scaleX(1.1);">33</div>
<div class="r" style="left:60px;top:1248px;width:38px;height:1px;background:#a4a4a4;"></div>
<div class="t" style="left:79.5px;top:1235.70px;font-size:18px;font-weight:400;color:#3a3a3a;transform:translateX(-50%) scaleX(1.1);">34</div>
<div class="r" style="left:60px;top:1276px;width:38px;height:1px;background:#a4a4a4;"></div>
<div class="t" style="left:79.5px;top:1263.70px;font-size:18px;font-weight:400;color:#3a3a3a;transform:translateX(-50%) scaleX(1.1);">35</div>
<div class="r" style="left:60px;top:1305px;width:38px;height:1px;background:#a4a4a4;"></div>
<div class="t" style="left:79.5px;top:1292.70px;font-size:18px;font-weight:400;color:#3a3a3a;transform:translateX(-50%) scaleX(1.1);">36</div>
<div class="r" style="left:60px;top:1333px;width:38px;height:1px;background:#a4a4a4;"></div>
<div class="t" style="left:79.5px;top:1320.70px;font-size:18px;font-weight:400;color:#3a3a3a;transform:translateX(-50%) scaleX(1.1);">37</div>
<div class="r" style="left:60px;top:1362px;width:38px;height:1px;background:#a4a4a4;"></div>
<div class="t" style="left:79.5px;top:1349.70px;font-size:18px;font-weight:400;color:#3a3a3a;transform:translateX(-50%) scaleX(1.1);">38</div>
<div class="r" style="left:60px;top:219px;width:39px;height:29px;background:#b6b6b6;"></div>
<div class="r" style="left:97px;top:219px;width:2px;height:29px;background:#7a7a7a;"></div>
<div class="r" style="left:60px;top:246px;width:39px;height:2px;background:#7a7a7a;"></div>
<svg style="left:0;top:0" width="1" height="1"><polygon points="77,242 93,242 93,226" fill="#6e7435"/></svg>
<div class="r" style="left:601px;top:248px;width:1px;height:52px;background:#cdcdcd;"></div>
<div class="r" style="left:716px;top:248px;width:1px;height:52px;background:#cdcdcd;"></div>
<div class="t" style="left:100.9px;top:274.61px;font-size:45.4px;font-weight:700;color:#11406a;transform:scaleX(0.82);transform-origin:0 0;letter-spacing:2.4px;">BUDGET D’ENTREPRISE DE 12 MOIS</div>
<div class="r" style="left:98px;top:300px;width:504px;height:33px;background:#cdcdcd;"></div>
<div class="r" style="left:100px;top:302px;width:501px;height:30px;background:#113b5c;"></div>
<div class="r" style="left:601px;top:300px;width:116px;height:33px;background:#cdcdcd;"></div>
<div class="r" style="left:603px;top:302px;width:113px;height:30px;background:#6a2e12;"></div>
<div class="r" style="left:716px;top:300px;width:117px;height:33px;background:#cdcdcd;"></div>
<div class="r" style="left:718px;top:302px;width:114px;height:30px;background:#6a2e12;"></div>
<div class="r" style="left:832px;top:300px;width:116px;height:33px;background:#cdcdcd;"></div>
<div class="r" style="left:834px;top:302px;width:113px;height:30px;background:#6a2e12;"></div>
<div class="r" style="left:947px;top:300px;width:172px;height:33px;background:#cdcdcd;"></div>
<div class="r" style="left:949px;top:302px;width:168px;height:30px;background:#a34b20;"></div>
<div class="r" style="left:1118px;top:300px;width:117px;height:33px;background:#cdcdcd;"></div>
<div class="r" style="left:1121px;top:302px;width:113px;height:30px;background:#404040;"></div>
<div class="r" style="left:1234px;top:300px;width:116px;height:33px;background:#cdcdcd;"></div>
<div class="r" style="left:1236px;top:302px;width:113px;height:30px;background:#404040;"></div>
<div class="r" style="left:1349px;top:300px;width:117px;height:33px;background:#cdcdcd;"></div>
<div class="r" style="left:1351px;top:302px;width:114px;height:30px;background:#404040;"></div>
<div class="r" style="left:1465px;top:300px;width:184px;height:33px;background:#cdcdcd;"></div>
<div class="r" style="left:1467px;top:302px;width:180px;height:30px;background:#646464;"></div>
<div class="r" style="left:1648px;top:300px;width:117px;height:33px;background:#cdcdcd;"></div>
<div class="r" style="left:1651px;top:302px;width:113px;height:30px;background:#674915;"></div>
<div class="r" style="left:1764px;top:300px;width:116px;height:33px;background:#cdcdcd;"></div>
<div class="r" style="left:1766px;top:302px;width:113px;height:30px;background:#674915;"></div>
<div class="r" style="left:1879px;top:300px;width:117px;height:33px;background:#cdcdcd;"></div>
<div class="r" style="left:1881px;top:302px;width:114px;height:30px;background:#674915;"></div>
<div class="r" style="left:1995px;top:300px;width:161px;height:33px;background:#cdcdcd;"></div>
<div class="r" style="left:1997px;top:302px;width:157px;height:30px;background:#9c7426;"></div>
<div class="r" style="left:2155px;top:300px;width:117px;height:33px;background:#cdcdcd;"></div>
<div class="r" style="left:2158px;top:302px;width:113px;height:30px;background:#172c4e;"></div>
<div class="r" style="left:2271px;top:300px;width:117px;height:33px;background:#cdcdcd;"></div>
<div class="r" style="left:2273px;top:302px;width:114px;height:30px;background:#172c4e;"></div>
<div class="r" style="left:2387px;top:300px;width:116px;height:33px;background:#cdcdcd;"></div>
<div class="r" style="left:2389px;top:302px;width:113px;height:30px;background:#172c4e;"></div>
<div class="r" style="left:2502px;top:300px;width:117px;height:33px;background:#cdcdcd;"></div>
<div class="r" style="left:2504px;top:302px;width:113px;height:30px;background:#21467b;"></div>
<div class="r" style="left:2618px;top:300px;width:124px;height:33px;background:#cdcdcd;"></div>
<div class="r" style="left:2621px;top:302px;width:120px;height:30px;background:#113d60;"></div>
<div class="t" style="left:116px;top:318.25px;font-size:23.3px;font-weight:400;color:#cacaca;transform:scaleX(0.89);transform-origin:0 0;">CATÉGORIE PROFITS ET PERTES</div>
<div class="r" style="left:602px;top:301px;width:115px;height:32px;overflow:hidden"><div class="t" style="left:57.5px;top:17.24px;font-size:23.3px;font-weight:400;color:#cacaca;transform:translateX(-50%) scaleX(0.9);">JANV</div></div>
<div class="r" style="left:717px;top:301px;width:116px;height:32px;overflow:hidden"><div class="t" style="left:58.0px;top:17.24px;font-size:23.3px;font-weight:400;color:#cacaca;transform:translateX(-50%) scaleX(0.9);">FÉV</div></div>
<div class="r" style="left:833px;top:301px;width:115px;height:32px;overflow:hidden"><div class="t" style="left:57.5px;top:17.24px;font-size:23.3px;font-weight:400;color:#cacaca;transform:translateX(-50%) scaleX(0.9);">MARS</div></div>
<div class="r" style="left:948px;top:301px;width:171px;height:32px;overflow:hidden"><div class="t" style="left:85.5px;top:17.24px;font-size:23.3px;font-weight:400;color:#cacaca;transform:translateX(-50%) scaleX(0.934);">TOTAL DU T1</div></div>
<div class="r" style="left:1119px;top:301px;width:116px;height:32px;overflow:hidden"><div class="t" style="left:58.0px;top:17.24px;font-size:23.3px;font-weight:400;color:#cacaca;transform:translateX(-50%) scaleX(0.9);">AVR</div></div>
<div class="r" style="left:1235px;top:301px;width:115px;height:32px;overflow:hidden"><div class="t" style="left:57.5px;top:17.24px;font-size:23.3px;font-weight:400;color:#cacaca;transform:translateX(-50%) scaleX(0.9);">MAI</div></div>
<div class="r" style="left:1350px;top:301px;width:116px;height:32px;overflow:hidden"><div class="t" style="left:58.0px;top:17.24px;font-size:23.3px;font-weight:400;color:#cacaca;transform:translateX(-50%) scaleX(0.9);">JUIN</div></div>
<div class="r" style="left:1466px;top:301px;width:183px;height:32px;overflow:hidden"><div class="t" style="left:91.5px;top:17.24px;font-size:23.3px;font-weight:400;color:#cacaca;transform:translateX(-50%) scaleX(0.934);">TOTAL DU T2</div></div>
<div class="r" style="left:1649px;top:301px;width:116px;height:32px;overflow:hidden"><div class="t" style="left:58.0px;top:17.24px;font-size:23.3px;font-weight:400;color:#cacaca;transform:translateX(-50%) scaleX(0.9);">JUIL</div></div>
<div class="r" style="left:1765px;top:301px;width:115px;height:32px;overflow:hidden"><div class="t" style="left:57.5px;top:17.24px;font-size:23.3px;font-weight:400;color:#cacaca;transform:translateX(-50%) scaleX(0.9);">AOÛT</div></div>
<div class="r" style="left:1880px;top:301px;width:116px;height:32px;overflow:hidden"><div class="t" style="left:58.0px;top:17.24px;font-size:23.3px;font-weight:400;color:#cacaca;transform:translateX(-50%) scaleX(0.9);">SEPT</div></div>
<div class="r" style="left:1996px;top:301px;width:160px;height:32px;overflow:hidden"><div class="t" style="left:80.0px;top:17.24px;font-size:23.3px;font-weight:400;color:#cacaca;transform:translateX(-50%) scaleX(0.934);">TOTAL DU T3</div></div>
<div class="r" style="left:2156px;top:301px;width:116px;height:32px;overflow:hidden"><div class="t" style="left:58.0px;top:17.24px;font-size:23.3px;font-weight:400;color:#cacaca;transform:translateX(-50%) scaleX(0.9);">OCT</div></div>
<div class="r" style="left:2272px;top:301px;width:116px;height:32px;overflow:hidden"><div class="t" style="left:58.0px;top:17.24px;font-size:23.3px;font-weight:400;color:#cacaca;transform:translateX(-50%) scaleX(0.9);">NOV</div></div>
<div class="r" style="left:2388px;top:301px;width:115px;height:32px;overflow:hidden"><div class="t" style="left:57.5px;top:17.24px;font-size:23.3px;font-weight:400;color:#cacaca;transform:translateX(-50%) scaleX(0.9);">DÉC</div></div>
<div class="r" style="left:2503px;top:301px;width:113px;height:32px;overflow:hidden"><div class="t" style="left:2.199999999999818px;top:17.24px;font-size:23.3px;font-weight:400;color:#cacaca;transform:scaleX(0.96);transform-origin:0 0;">OTAL DU T4</div></div>
<div class="r" style="left:2619px;top:301px;width:121.5px;height:32px;overflow:hidden"><div class="t" style="left:2.699999999999818px;top:17.24px;font-size:23.3px;font-weight:400;color:#cacaca;transform:scaleX(0.96);transform-origin:0 0;">AL DE L’ANNÉE</div></div>
<div class="r" style="left:98px;top:531px;width:504px;height:33px;background:#cdcdcd;"></div>
<div class="r" style="left:100px;top:533px;width:501px;height:30px;background:#113b5c;"></div>
<div class="r" style="left:601px;top:531px;width:116px;height:33px;background:#cdcdcd;"></div>
<div class="r" style="left:603px;top:533px;width:113px;height:30px;background:#6a2e12;"></div>
<div class="r" style="left:716px;top:531px;width:117px;height:33px;background:#cdcdcd;"></div>
<div class="r" style="left:718px;top:533px;width:114px;height:30px;background:#6a2e12;"></div>
<div class="r" style="left:832px;top:531px;width:116px;height:33px;background:#cdcdcd;"></div>
<div class="r" style="left:834px;top:533px;width:113px;height:30px;background:#6a2e12;"></div>
<div class="r" style="left:947px;top:531px;width:172px;height:33px;background:#cdcdcd;"></div>
<div class="r" style="left:949px;top:533px;width:168px;height:30px;background:#a34b20;"></div>
<div class="r" style="left:1118px;top:531px;width:117px;height:33px;background:#cdcdcd;"></div>
<div class="r" style="left:1121px;top:533px;width:113px;height:30px;background:#404040;"></div>
<div class="r" style="left:1234px;top:531px;width:116px;height:33px;background:#cdcdcd;"></div>
<div class="r" style="left:1236px;top:533px;width:113px;height:30px;background:#404040;"></div>
<div class="r" style="left:1349px;top:531px;width:117px;height:33px;background:#cdcdcd;"></div>
<div class="r" style="left:1351px;top:533px;width:114px;height:30px;background:#404040;"></div>
<div class="r" style="left:1465px;top:531px;width:184px;height:33px;background:#cdcdcd;"></div>
<div class="r" style="left:1467px;top:533px;width:180px;height:30px;background:#646464;"></div>
<div class="r" style="left:1648px;top:531px;width:117px;height:33px;background:#cdcdcd;"></div>
<div class="r" style="left:1651px;top:533px;width:113px;height:30px;background:#674915;"></div>
<div class="r" style="left:1764px;top:531px;width:116px;height:33px;background:#cdcdcd;"></div>
<div class="r" style="left:1766px;top:533px;width:113px;height:30px;background:#674915;"></div>
<div class="r" style="left:1879px;top:531px;width:117px;height:33px;background:#cdcdcd;"></div>
<div class="r" style="left:1881px;top:533px;width:114px;height:30px;background:#674915;"></div>
<div class="r" style="left:1995px;top:531px;width:161px;height:33px;background:#cdcdcd;"></div>
<div class="r" style="left:1997px;top:533px;width:157px;height:30px;background:#9c7426;"></div>
<div class="r" style="left:2155px;top:531px;width:117px;height:33px;background:#cdcdcd;"></div>
<div class="r" style="left:2158px;top:533px;width:113px;height:30px;background:#172c4e;"></div>
<div class="r" style="left:2271px;top:531px;width:117px;height:33px;background:#cdcdcd;"></div>
<div class="r" style="left:2273px;top:533px;width:114px;height:30px;background:#172c4e;"></div>
<div class="r" style="left:2387px;top:531px;width:116px;height:33px;background:#cdcdcd;"></div>
<div class="r" style="left:2389px;top:533px;width:113px;height:30px;background:#172c4e;"></div>
<div class="r" style="left:2502px;top:531px;width:117px;height:33px;background:#cdcdcd;"></div>
<div class="r" style="left:2504px;top:533px;width:113px;height:30px;background:#21467b;"></div>
<div class="r" style="left:2618px;top:531px;width:124px;height:33px;background:#cdcdcd;"></div>
<div class="r" style="left:2621px;top:533px;width:120px;height:30px;background:#113d60;"></div>
<div class="t" style="left:116px;top:549.25px;font-size:23.3px;font-weight:400;color:#cacaca;transform:scaleX(0.89);transform-origin:0 0;">CATÉGORIE DE BILAN</div>
<div class="r" style="left:602px;top:532px;width:115px;height:32px;overflow:hidden"><div class="t" style="left:57.5px;top:17.24px;font-size:23.3px;font-weight:400;color:#cacaca;transform:translateX(-50%) scaleX(0.9);">JANV</div></div>
<div class="r" style="left:717px;top:532px;width:116px;height:32px;overflow:hidden"><div class="t" style="left:58.0px;top:17.24px;font-size:23.3px;font-weight:400;color:#cacaca;transform:translateX(-50%) scaleX(0.9);">FÉV</div></div>
<div class="r" style="left:833px;top:532px;width:115px;height:32px;overflow:hidden"><div class="t" style="left:57.5px;top:17.24px;font-size:23.3px;font-weight:400;color:#cacaca;transform:translateX(-50%) scaleX(0.9);">MARS</div></div>
<div class="r" style="left:948px;top:532px;width:171px;height:32px;overflow:hidden"><div class="t" style="left:85.5px;top:17.24px;font-size:23.3px;font-weight:400;color:#cacaca;transform:translateX(-50%) scaleX(0.934);">TOTAL DU T1</div></div>
<div class="r" style="left:1119px;top:532px;width:116px;height:32px;overflow:hidden"><div class="t" style="left:58.0px;top:17.24px;font-size:23.3px;font-weight:400;color:#cacaca;transform:translateX(-50%) scaleX(0.9);">AVR</div></div>
<div class="r" style="left:1235px;top:532px;width:115px;height:32px;overflow:hidden"><div class="t" style="left:57.5px;top:17.24px;font-size:23.3px;font-weight:400;color:#cacaca;transform:translateX(-50%) scaleX(0.9);">MAI</div></div>
<div class="r" style="left:1350px;top:532px;width:116px;height:32px;overflow:hidden"><div class="t" style="left:58.0px;top:17.24px;font-size:23.3px;font-weight:400;color:#cacaca;transform:translateX(-50%) scaleX(0.9);">JUIN</div></div>
<div class="r" style="left:1466px;top:532px;width:183px;height:32px;overflow:hidden"><div class="t" style="left:91.5px;top:17.24px;font-size:23.3px;font-weight:400;color:#cacaca;transform:translateX(-50%) scaleX(0.934);">TOTAL DU T2</div></div>
<div class="r" style="left:1649px;top:532px;width:116px;height:32px;overflow:hidden"><div class="t" style="left:58.0px;top:17.24px;font-size:23.3px;font-weight:400;color:#cacaca;transform:translateX(-50%) scaleX(0.9);">JUIL</div></div>
<div class="r" style="left:1765px;top:532px;width:115px;height:32px;overflow:hidden"><div class="t" style="left:57.5px;top:17.24px;font-size:23.3px;font-weight:400;color:#cacaca;transform:translateX(-50%) scaleX(0.9);">AOÛT</div></div>
<div class="r" style="left:1880px;top:532px;width:116px;height:32px;overflow:hidden"><div class="t" style="left:58.0px;top:17.24px;font-size:23.3px;font-weight:400;color:#cacaca;transform:translateX(-50%) scaleX(0.9);">SEPT</div></div>
<div class="r" style="left:1996px;top:532px;width:160px;height:32px;overflow:hidden"><div class="t" style="left:80.0px;top:17.24px;font-size:23.3px;font-weight:400;color:#cacaca;transform:translateX(-50%) scaleX(0.934);">TOTAL DU T3</div></div>
<div class="r" style="left:2156px;top:532px;width:116px;height:32px;overflow:hidden"><div class="t" style="left:58.0px;top:17.24px;font-size:23.3px;font-weight:400;color:#cacaca;transform:translateX(-50%) scaleX(0.9);">OCT</div></div>
<div class="r" style="left:2272px;top:532px;width:116px;height:32px;overflow:hidden"><div class="t" style="left:58.0px;top:17.24px;font-size:23.3px;font-weight:400;color:#cacaca;transform:translateX(-50%) scaleX(0.9);">NOV</div></div>
<div class="r" style="left:2388px;top:532px;width:115px;height:32px;overflow:hidden"><div class="t" style="left:57.5px;top:17.24px;font-size:23.3px;font-weight:400;color:#cacaca;transform:translateX(-50%) scaleX(0.9);">DÉC</div></div>
<div class="r" style="left:2503px;top:532px;width:113px;height:32px;overflow:hidden"><div class="t" style="left:2.199999999999818px;top:17.24px;font-size:23.3px;font-weight:400;color:#cacaca;transform:scaleX(0.96);transform-origin:0 0;">OTAL DU T4</div></div>
<div class="r" style="left:2619px;top:532px;width:121.5px;height:32px;overflow:hidden"><div class="t" style="left:2.699999999999818px;top:17.24px;font-size:23.3px;font-weight:400;color:#cacaca;transform:scaleX(0.96);transform-origin:0 0;">AL DE L’ANNÉE</div></div>
<div class="r" style="left:98px;top:332px;width:504px;height:30px;background:#cdcdcd;"></div>
<div class="r" style="left:100px;top:334px;width:501px;height:27px;background:#b4bec8;"></div>
<div class="t" style="left:116px;top:347.40px;font-size:21.7px;font-weight:700;color:#000;transform:scaleX(0.884);transform-origin:0 0;">REVENU</div>
<div class="r" style="left:98px;top:361px;width:504px;height:29px;background:#cdcdcd;"></div>
<div class="r" style="left:100px;top:363px;width:501px;height:26px;background:#b4bec8;"></div>
<div class="t" style="left:116px;top:375.40px;font-size:21.7px;font-weight:700;color:#000;transform:scaleX(0.947);transform-origin:0 0;">COGS  Coût des marchandises vendues</div>
<div class="r" style="left:98px;top:389px;width:504px;height:30px;background:#cdcdcd;"></div>
<div class="r" style="left:100px;top:391px;width:501px;height:27px;background:#b4bec8;"></div>
<div class="t" style="left:116px;top:404.40px;font-size:21.7px;font-weight:700;color:#000;transform:scaleX(0.91);transform-origin:0 0;">FRAIS DE VENTE / MARKETING</div>
<div class="r" style="left:98px;top:418px;width:504px;height:29px;background:#cdcdcd;"></div>
<div class="r" style="left:100px;top:420px;width:501px;height:26px;background:#b4bec8;"></div>
<div class="t" style="left:116px;top:432.40px;font-size:21.7px;font-weight:700;color:#000;transform:scaleX(0.918);transform-origin:0 0;">COÛTS DE MAIN-D’ŒUVRE</div>
<div class="r" style="left:98px;top:446px;width:504px;height:30px;background:#cdcdcd;"></div>
<div class="r" style="left:100px;top:448px;width:501px;height:27px;background:#b4bec8;"></div>
<div class="t" style="left:116px;top:461.40px;font-size:21.7px;font-weight:700;color:#000;transform:scaleX(0.911);transform-origin:0 0;">ADMIN / GÉNÉRAL</div>
<div class="r" style="left:98px;top:475px;width:504px;height:29px;background:#cdcdcd;"></div>
<div class="r" style="left:100px;top:477px;width:501px;height:26px;background:#b4bec8;"></div>
<div class="t" style="left:116px;top:489.40px;font-size:21.7px;font-weight:700;color:#000;transform:scaleX(0.99);transform-origin:0 0;">Bénéfice EBIT  avant intérêts et impôts</div>
<div class="r" style="left:98px;top:503px;width:504px;height:29px;background:#cdcdcd;"></div>
<div class="r" style="left:100px;top:505px;width:501px;height:26px;background:#b4bec8;"></div>
<div class="t" style="left:116px;top:517.40px;font-size:21.7px;font-weight:700;color:#000;transform:scaleX(0.9);transform-origin:0 0;">AUTRE</div>
<div class="r" style="left:98px;top:563px;width:504px;height:30px;background:#cdcdcd;"></div>
<div class="r" style="left:100px;top:565px;width:501px;height:27px;background:#b4bec8;"></div>
<div class="t" style="left:116px;top:578.40px;font-size:21.7px;font-weight:700;color:#000;transform:scaleX(0.89);transform-origin:0 0;">ARGENT</div>
<div class="t" style="left:116px;top:608.96px;font-size:18.7px;font-weight:400;color:#000;transform:scaleX(0.913);transform-origin:0 0;">BUDGET</div>
<div class="r" style="left:601px;top:592px;width:116px;height:30px;background:#cdcdcd;"></div>
<div class="r" style="left:603px;top:594px;width:113px;height:27px;background:#cfa68b;"></div>
<div class="t" style="right:2167.7px;top:608.63px;font-size:18.2px;font-weight:400;color:#000;transform:scaleX(1.086);transform-origin:100% 0;">1 000,00 €</div>
<div class="r" style="left:716px;top:592px;width:117px;height:30px;background:#cdcdcd;"></div>
<div class="r" style="left:718px;top:594px;width:114px;height:27px;background:#cfa68b;"></div>
<div class="t" style="right:2051.7px;top:608.63px;font-size:18.2px;font-weight:400;color:#000;transform:scaleX(1.086);transform-origin:100% 0;">1 000,00 €</div>
<div class="r" style="left:832px;top:592px;width:116px;height:30px;background:#cdcdcd;"></div>
<div class="r" style="left:834px;top:594px;width:113px;height:27px;background:#cfa68b;"></div>
<div class="t" style="right:1936.7px;top:608.63px;font-size:18.2px;font-weight:400;color:#000;transform:scaleX(1.086);transform-origin:100% 0;">1 000,00 €</div>
<div class="t" style="right:1765.7px;top:608.63px;font-size:18.2px;font-weight:400;color:#000;transform:scaleX(1.086);transform-origin:100% 0;">3 000,00 €</div>
<div class="r" style="left:1118px;top:592px;width:117px;height:30px;background:#cdcdcd;"></div>
<div class="r" style="left:1121px;top:594px;width:113px;height:27px;background:#acacac;"></div>
<div class="t" style="right:1649.7px;top:608.63px;font-size:18.2px;font-weight:400;color:#000;transform:scaleX(1.086);transform-origin:100% 0;">1 000,00 €</div>
<div class="r" style="left:1234px;top:592px;width:116px;height:30px;background:#cdcdcd;"></div>
<div class="r" style="left:1236px;top:594px;width:113px;height:27px;background:#acacac;"></div>
<div class="t" style="right:1534.7px;top:608.63px;font-size:18.2px;font-weight:400;color:#000;transform:scaleX(1.086);transform-origin:100% 0;">1 000,00 €</div>
<div class="r" style="left:1349px;top:592px;width:117px;height:30px;background:#cdcdcd;"></div>
<div class="r" style="left:1351px;top:594px;width:114px;height:27px;background:#acacac;"></div>
<div class="t" style="right:1418.7px;top:608.63px;font-size:18.2px;font-weight:400;color:#000;transform:scaleX(1.086);transform-origin:100% 0;">1 000,00 €</div>
<div class="t" style="right:1235.7px;top:608.63px;font-size:18.2px;font-weight:400;color:#000;transform:scaleX(1.086);transform-origin:100% 0;">3 000,00 €</div>
<div class="r" style="left:1648px;top:592px;width:117px;height:30px;background:#cdcdcd;"></div>
<div class="r" style="left:1651px;top:594px;width:113px;height:27px;background:#cdb782;"></div>
<div class="t" style="right:1119.7px;top:608.63px;font-size:18.2px;font-weight:400;color:#000;transform:scaleX(1.086);transform-origin:100% 0;">1 000,00 €</div>
<div class="r" style="left:1764px;top:592px;width:116px;height:30px;background:#cdcdcd;"></div>
<div class="r" style="left:1766px;top:594px;width:113px;height:27px;background:#cdb782;"></div>
<div class="t" style="right:1004.7px;top:608.63px;font-size:18.2px;font-weight:400;color:#000;transform:scaleX(1.086);transform-origin:100% 0;">1 000,00 €</div>
<div class="r" style="left:1879px;top:592px;width:117px;height:30px;background:#cdcdcd;"></div>
<div class="r" style="left:1881px;top:594px;width:114px;height:27px;background:#cdb782;"></div>
<div class="t" style="right:888.7px;top:608.63px;font-size:18.2px;font-weight:400;color:#000;transform:scaleX(1.086);transform-origin:100% 0;">1 000,00 €</div>
<div class="t" style="right:728.6999999999998px;top:608.63px;font-size:18.2px;font-weight:400;color:#000;transform:scaleX(1.086);transform-origin:100% 0;">3 000,00 €</div>
<div class="r" style="left:2155px;top:592px;width:117px;height:30px;background:#cdcdcd;"></div>
<div class="r" style="left:2158px;top:594px;width:113px;height:27px;background:#8fa0bc;"></div>
<div class="t" style="right:612.6999999999998px;top:608.63px;font-size:18.2px;font-weight:400;color:#000;transform:scaleX(1.086);transform-origin:100% 0;">1 000,00 €</div>
<div class="r" style="left:2271px;top:592px;width:117px;height:30px;background:#cdcdcd;"></div>
<div class="r" style="left:2273px;top:594px;width:114px;height:27px;background:#8fa0bc;"></div>
<div class="t" style="right:496.6999999999998px;top:608.63px;font-size:18.2px;font-weight:400;color:#000;transform:scaleX(1.086);transform-origin:100% 0;">1 000,00 €</div>
<div class="r" style="left:2387px;top:592px;width:116px;height:30px;background:#cdcdcd;"></div>
<div class="r" style="left:2389px;top:594px;width:113px;height:27px;background:#8fa0bc;"></div>
<div class="t" style="right:381.6999999999998px;top:608.63px;font-size:18.2px;font-weight:400;color:#000;transform:scaleX(1.086);transform-origin:100% 0;">1 000,00 €</div>
<div class="t" style="right:265.6999999999998px;top:608.63px;font-size:18.2px;font-weight:400;color:#000;transform:scaleX(1.086);transform-origin:100% 0;">3 000,00 €</div>
<div class="r" style="left:2502px;top:592px;width:117px;height:30px;background:#cdcdcd;"></div>
<div class="r" style="left:2504px;top:594px;width:113px;height:27px;background:#b3bac9;"></div>
<div class="t" style="right:265.6999999999998px;top:608.63px;font-size:18.2px;font-weight:400;color:#000;transform:scaleX(1.086);transform-origin:100% 0;">3 000,00 €</div>
<div class="r" style="left:2618px;top:592px;width:124px;height:30px;background:#cdcdcd;"></div>
<div class="r" style="left:2621px;top:594px;width:120px;height:27px;background:#b6c0ca;"></div>
<div class="t" style="right:142.69999999999982px;top:608.61px;font-size:19.7px;font-weight:400;color:#000;transform:scaleX(1.128);transform-origin:100% 0;-webkit-text-stroke:0.3px #000;">11 000,00 €</div>
<div class="t" style="left:116px;top:636.96px;font-size:18.7px;font-weight:400;color:#000;transform:scaleX(0.867);transform-origin:0 0;">RÉEL</div>
<div class="r" style="left:601px;top:621px;width:116px;height:29px;background:#cdcdcd;"></div>
<div class="r" style="left:603px;top:623px;width:113px;height:26px;background:#cfa68b;"></div>
<div class="t" style="right:2167.7px;top:636.63px;font-size:18.2px;font-weight:400;color:#000;transform:scaleX(1.086);transform-origin:100% 0;">500,00 €</div>
<div class="r" style="left:716px;top:621px;width:117px;height:29px;background:#cdcdcd;"></div>
<div class="r" style="left:718px;top:623px;width:114px;height:26px;background:#cfa68b;"></div>
<div class="t" style="right:2051.7px;top:636.63px;font-size:18.2px;font-weight:400;color:#000;transform:scaleX(1.086);transform-origin:100% 0;">700,00 €</div>
<div class="r" style="left:832px;top:621px;width:116px;height:29px;background:#cdcdcd;"></div>
<div class="r" style="left:834px;top:623px;width:113px;height:26px;background:#cfa68b;"></div>
<div class="t" style="right:1936.7px;top:636.63px;font-size:18.2px;font-weight:400;color:#000;transform:scaleX(1.086);transform-origin:100% 0;">1 100,00 €</div>
<div class="t" style="right:1765.7px;top:636.63px;font-size:18.2px;font-weight:400;color:#000;transform:scaleX(1.086);transform-origin:100% 0;">2 300,00 €</div>
<div class="r" style="left:1118px;top:621px;width:117px;height:29px;background:#cdcdcd;"></div>
<div class="r" style="left:1121px;top:623px;width:113px;height:26px;background:#acacac;"></div>
<div class="t" style="right:1649.7px;top:636.63px;font-size:18.2px;font-weight:400;color:#000;transform:scaleX(1.086);transform-origin:100% 0;">500,00 €</div>
<div class="r" style="left:1234px;top:621px;width:116px;height:29px;background:#cdcdcd;"></div>
<div class="r" style="left:1236px;top:623px;width:113px;height:26px;background:#acacac;"></div>
<div class="t" style="right:1534.7px;top:636.63px;font-size:18.2px;font-weight:400;color:#000;transform:scaleX(1.086);transform-origin:100% 0;">700,00 €</div>
<div class="r" style="left:1349px;top:621px;width:117px;height:29px;background:#cdcdcd;"></div>
<div class="r" style="left:1351px;top:623px;width:114px;height:26px;background:#acacac;"></div>
<div class="t" style="right:1418.7px;top:636.63px;font-size:18.2px;font-weight:400;color:#000;transform:scaleX(1.086);transform-origin:100% 0;">1 100,00 €</div>
<div class="t" style="right:1235.7px;top:636.63px;font-size:18.2px;font-weight:400;color:#000;transform:scaleX(1.086);transform-origin:100% 0;">2 300,00 €</div>
<div class="r" style="left:1648px;top:621px;width:117px;height:29px;background:#cdcdcd;"></div>
<div class="r" style="left:1651px;top:623px;width:113px;height:26px;background:#cdb782;"></div>
<div class="t" style="right:1119.7px;top:636.63px;font-size:18.2px;font-weight:400;color:#000;transform:scaleX(1.086);transform-origin:100% 0;">500,00 €</div>
<div class="r" style="left:1764px;top:621px;width:116px;height:29px;background:#cdcdcd;"></div>
<div class="r" style="left:1766px;top:623px;width:113px;height:26px;background:#cdb782;"></div>
<div class="t" style="right:1004.7px;top:636.63px;font-size:18.2px;font-weight:400;color:#000;transform:scaleX(1.086);transform-origin:100% 0;">700,00 €</div>
<div class="r" style="left:1879px;top:621px;width:117px;height:29px;background:#cdcdcd;"></div>
<div class="r" style="left:1881px;top:623px;width:114px;height:26px;background:#cdb782;"></div>
<div class="t" style="right:888.7px;top:636.63px;font-size:18.2px;font-weight:400;color:#000;transform:scaleX(1.086);transform-origin:100% 0;">1 100,00 €</div>
<div class="t" style="right:728.6999999999998px;top:636.63px;font-size:18.2px;font-weight:400;color:#000;transform:scaleX(1.086);transform-origin:100% 0;">2 300,00 €</div>
<div class="r" style="left:2155px;top:621px;width:117px;height:29px;background:#cdcdcd;"></div>
<div class="r" style="left:2158px;top:623px;width:113px;height:26px;background:#8fa0bc;"></div>
<div class="t" style="right:612.6999999999998px;top:636.63px;font-size:18.2px;font-weight:400;color:#000;transform:scaleX(1.086);transform-origin:100% 0;">500,00 €</div>
<div class="r" style="left:2271px;top:621px;width:117px;height:29px;background:#cdcdcd;"></div>
<div class="r" style="left:2273px;top:623px;width:114px;height:26px;background:#8fa0bc;"></div>
<div class="t" style="right:496.6999999999998px;top:636.63px;font-size:18.2px;font-weight:400;color:#000;transform:scaleX(1.086);transform-origin:100% 0;">700,00 €</div>
<div class="r" style="left:2387px;top:621px;width:116px;height:29px;background:#cdcdcd;"></div>
<div class="r" style="left:2389px;top:623px;width:113px;height:26px;background:#8fa0bc;"></div>
<div class="t" style="right:381.6999999999998px;top:636.63px;font-size:18.2px;font-weight:400;color:#000;transform:scaleX(1.086);transform-origin:100% 0;">1 100,00 €</div>
<div class="t" style="right:265.6999999999998px;top:636.63px;font-size:18.2px;font-weight:400;color:#000;transform:scaleX(1.086);transform-origin:100% 0;">2 300,00 €</div>
<div class="r" style="left:2502px;top:621px;width:117px;height:29px;background:#cdcdcd;"></div>
<div class="r" style="left:2504px;top:623px;width:113px;height:26px;background:#b3bac9;"></div>
<div class="t" style="right:265.6999999999998px;top:636.63px;font-size:18.2px;font-weight:400;color:#000;transform:scaleX(1.086);transform-origin:100% 0;">2 300,00 €</div>
<div class="r" style="left:2618px;top:621px;width:124px;height:29px;background:#cdcdcd;"></div>
<div class="r" style="left:2621px;top:623px;width:120px;height:26px;background:#b6c0ca;"></div>
<div class="t" style="right:142.69999999999982px;top:636.61px;font-size:19.7px;font-weight:400;color:#000;transform:scaleX(1.128);transform-origin:100% 0;-webkit-text-stroke:0.3px #000;">9 200,00 €</div>
<div class="t" style="left:116px;top:665.96px;font-size:18.7px;font-weight:400;color:#000;transform:scaleX(0.957);transform-origin:0 0;">VARIANCE</div>
<div class="t" style="right:2167.7px;top:665.63px;font-size:18.2px;font-weight:400;color:#000;transform:scaleX(1.086);transform-origin:100% 0;">-500,00 €</div>
<div class="t" style="right:2051.7px;top:665.63px;font-size:18.2px;font-weight:400;color:#000;transform:scaleX(1.086);transform-origin:100% 0;">-300,00 €</div>
<div class="t" style="right:1936.7px;top:665.63px;font-size:18.2px;font-weight:400;color:#000;transform:scaleX(1.086);transform-origin:100% 0;">100,00 €</div>
<div class="t" style="right:1765.7px;top:665.63px;font-size:18.2px;font-weight:400;color:#000;transform:scaleX(1.086);transform-origin:100% 0;">-700,00 €</div>
<div class="t" style="right:1649.7px;top:665.63px;font-size:18.2px;font-weight:400;color:#000;transform:scaleX(1.086);transform-origin:100% 0;">-500,00 €</div>
<div class="t" style="right:1534.7px;top:665.63px;font-size:18.2px;font-weight:400;color:#000;transform:scaleX(1.086);transform-origin:100% 0;">-300,00 €</div>
<div class="t" style="right:1418.7px;top:665.63px;font-size:18.2px;font-weight:400;color:#000;transform:scaleX(1.086);transform-origin:100% 0;">100,00 €</div>
<div class="t" style="right:1235.7px;top:665.63px;font-size:18.2px;font-weight:400;color:#000;transform:scaleX(1.086);transform-origin:100% 0;">-700,00 €</div>
<div class="t" style="right:1119.7px;top:665.63px;font-size:18.2px;font-weight:400;color:#000;transform:scaleX(1.086);transform-origin:100% 0;">-500,00 €</div>
<div class="t" style="right:1004.7px;top:665.63px;font-size:18.2px;font-weight:400;color:#000;transform:scaleX(1.086);transform-origin:100% 0;">-300,00 €</div>
<div class="t" style="right:888.7px;top:665.63px;font-size:18.2px;font-weight:400;color:#000;transform:scaleX(1.086);transform-origin:100% 0;">100,00 €</div>
<div class="t" style="right:728.6999999999998px;top:665.63px;font-size:18.2px;font-weight:400;color:#000;transform:scaleX(1.086);transform-origin:100% 0;">-700,00 €</div>
<div class="t" style="right:612.6999999999998px;top:665.63px;font-size:18.2px;font-weight:400;color:#000;transform:scaleX(1.086);transform-origin:100% 0;">-500,00 €</div>
<div class="t" style="right:496.6999999999998px;top:665.63px;font-size:18.2px;font-weight:400;color:#000;transform:scaleX(1.086);transform-origin:100% 0;">-300,00 €</div>
<div class="t" style="right:381.6999999999998px;top:665.63px;font-size:18.2px;font-weight:400;color:#000;transform:scaleX(1.086);transform-origin:100% 0;">100,00 €</div>
<div class="t" style="right:265.6999999999998px;top:665.63px;font-size:18.2px;font-weight:400;color:#000;transform:scaleX(1.086);transform-origin:100% 0;">-700,00 €</div>
<div class="r" style="left:2502px;top:649px;width:117px;height:30px;background:#cdcdcd;"></div>
<div class="r" style="left:2504px;top:651px;width:113px;height:27px;background:#b3bac9;"></div>
<div class="t" style="right:265.6999999999998px;top:665.63px;font-size:18.2px;font-weight:400;color:#000;transform:scaleX(1.086);transform-origin:100% 0;">-700,00 €</div>
<div class="r" style="left:2618px;top:649px;width:124px;height:30px;background:#cdcdcd;"></div>
<div class="r" style="left:2621px;top:651px;width:120px;height:27px;background:#b6c0ca;"></div>
<div class="t" style="right:142.69999999999982px;top:665.61px;font-size:19.7px;font-weight:400;color:#000;transform:scaleX(1.128);transform-origin:100% 0;-webkit-text-stroke:0.3px #000;">-1 800,00 €</div>
<div class="t" style="left:116px;top:693.96px;font-size:18.7px;font-weight:400;color:#000;transform:scaleX(0.91);transform-origin:0 0;">ANNÉE PRÉCÉDENTE RÉEL</div>
<div class="r" style="left:601px;top:678px;width:116px;height:29px;background:#cdcdcd;"></div>
<div class="r" style="left:603px;top:680px;width:113px;height:26px;background:#cfa68b;"></div>
<div class="t" style="right:2167.7px;top:693.63px;font-size:18.2px;font-weight:400;color:#000;transform:scaleX(1.086);transform-origin:100% 0;">700,00 €</div>
<div class="r" style="left:716px;top:678px;width:117px;height:29px;background:#cdcdcd;"></div>
<div class="r" style="left:718px;top:680px;width:114px;height:26px;background:#cfa68b;"></div>
<div class="t" style="right:2051.7px;top:693.63px;font-size:18.2px;font-weight:400;color:#000;transform:scaleX(1.086);transform-origin:100% 0;">1 100,00 €</div>
<div class="r" style="left:832px;top:678px;width:116px;height:29px;background:#cdcdcd;"></div>
<div class="r" style="left:834px;top:680px;width:113px;height:26px;background:#cfa68b;"></div>
<div class="t" style="right:1936.7px;top:693.63px;font-size:18.2px;font-weight:400;color:#000;transform:scaleX(1.086);transform-origin:100% 0;">800,00 €</div>
<div class="t" style="right:1765.7px;top:693.63px;font-size:18.2px;font-weight:400;color:#000;transform:scaleX(1.086);transform-origin:100% 0;">2 600,00 €</div>
<div class="r" style="left:1118px;top:678px;width:117px;height:29px;background:#cdcdcd;"></div>
<div class="r" style="left:1121px;top:680px;width:113px;height:26px;background:#acacac;"></div>
<div class="t" style="right:1649.7px;top:693.63px;font-size:18.2px;font-weight:400;color:#000;transform:scaleX(1.086);transform-origin:100% 0;">700,00 €</div>
<div class="r" style="left:1234px;top:678px;width:116px;height:29px;background:#cdcdcd;"></div>
<div class="r" style="left:1236px;top:680px;width:113px;height:26px;background:#acacac;"></div>
<div class="t" style="right:1534.7px;top:693.63px;font-size:18.2px;font-weight:400;color:#000;transform:scaleX(1.086);transform-origin:100% 0;">1 100,00 €</div>
<div class="r" style="left:1349px;top:678px;width:117px;height:29px;background:#cdcdcd;"></div>
<div class="r" style="left:1351px;top:680px;width:114px;height:26px;background:#acacac;"></div>
<div class="t" style="right:1418.7px;top:693.63px;font-size:18.2px;font-weight:400;color:#000;transform:scaleX(1.086);transform-origin:100% 0;">800,00 €</div>
<div class="t" style="right:1235.7px;top:693.63px;font-size:18.2px;font-weight:400;color:#000;transform:scaleX(1.086);transform-origin:100% 0;">2 600,00 €</div>
<div class="r" style="left:1648px;top:678px;width:117px;height:29px;background:#cdcdcd;"></div>
<div class="r" style="left:1651px;top:680px;width:113px;height:26px;background:#cdb782;"></div>
<div class="t" style="right:1119.7px;top:693.63px;font-size:18.2px;font-weight:400;color:#000;transform:scaleX(1.086);transform-origin:100% 0;">700,00 €</div>
<div class="r" style="left:1764px;top:678px;width:116px;height:29px;background:#cdcdcd;"></div>
<div class="r" style="left:1766px;top:680px;width:113px;height:26px;background:#cdb782;"></div>
<div class="t" style="right:1004.7px;top:693.63px;font-size:18.2px;font-weight:400;color:#000;transform:scaleX(1.086);transform-origin:100% 0;">1 100,00 €</div>
<div class="r" style="left:1879px;top:678px;width:117px;height:29px;background:#cdcdcd;"></div>
<div class="r" style="left:1881px;top:680px;width:114px;height:26px;background:#cdb782;"></div>
<div class="t" style="right:888.7px;top:693.63px;font-size:18.2px;font-weight:400;color:#000;transform:scaleX(1.086);transform-origin:100% 0;">800,00 €</div>
<div class="t" style="right:728.6999999999998px;top:693.63px;font-size:18.2px;font-weight:400;color:#000;transform:scaleX(1.086);transform-origin:100% 0;">2 600,00 €</div>
<div class="r" style="left:2155px;top:678px;width:117px;height:29px;background:#cdcdcd;"></div>
<div class="r" style="left:2158px;top:680px;width:113px;height:26px;background:#8fa0bc;"></div>
<div class="t" style="right:612.6999999999998px;top:693.63px;font-size:18.2px;font-weight:400;color:#000;transform:scaleX(1.086);transform-origin:100% 0;">700,00 €</div>
<div class="r" style="left:2271px;top:678px;width:117px;height:29px;background:#cdcdcd;"></div>
<div class="r" style="left:2273px;top:680px;width:114px;height:26px;background:#8fa0bc;"></div>
<div class="t" style="right:496.6999999999998px;top:693.63px;font-size:18.2px;font-weight:400;color:#000;transform:scaleX(1.086);transform-origin:100% 0;">1 100,00 €</div>
<div class="r" style="left:2387px;top:678px;width:116px;height:29px;background:#cdcdcd;"></div>
<div class="r" style="left:2389px;top:680px;width:113px;height:26px;background:#8fa0bc;"></div>
<div class="t" style="right:381.6999999999998px;top:693.63px;font-size:18.2px;font-weight:400;color:#000;transform:scaleX(1.086);transform-origin:100% 0;">800,00 €</div>
<div class="t" style="right:265.6999999999998px;top:693.63px;font-size:18.2px;font-weight:400;color:#000;transform:scaleX(1.086);transform-origin:100% 0;">2 600,00 €</div>
<div class="r" style="left:2502px;top:678px;width:117px;height:29px;background:#cdcdcd;"></div>
<div class="r" style="left:2504px;top:680px;width:113px;height:26px;background:#b3bac9;"></div>
<div class="t" style="right:265.6999999999998px;top:693.63px;font-size:18.2px;font-weight:400;color:#000;transform:scaleX(1.086);transform-origin:100% 0;">2 600,00 €</div>
<div class="r" style="left:2618px;top:678px;width:124px;height:29px;background:#cdcdcd;"></div>
<div class="r" style="left:2621px;top:680px;width:120px;height:26px;background:#b6c0ca;"></div>
<div class="t" style="right:142.69999999999982px;top:693.61px;font-size:19.7px;font-weight:400;color:#000;transform:scaleX(1.128);transform-origin:100% 0;-webkit-text-stroke:0.3px #000;">10 400,00 €</div>
<div class="t" style="left:116px;top:722.96px;font-size:18.7px;font-weight:400;color:#000;transform:scaleX(0.934);transform-origin:0 0;">ÉCART DE L’ANNÉE PRÉCÉDENTE</div>
<div class="t" style="right:2167.7px;top:722.63px;font-size:18.2px;font-weight:400;color:#000;transform:scaleX(1.086);transform-origin:100% 0;">-200,00 €</div>
<div class="t" style="right:2051.7px;top:722.63px;font-size:18.2px;font-weight:400;color:#000;transform:scaleX(1.086);transform-origin:100% 0;">-400,00 €</div>
<div class="t" style="right:1936.7px;top:722.63px;font-size:18.2px;font-weight:400;color:#000;transform:scaleX(1.086);transform-origin:100% 0;">300,00 €</div>
<div class="t" style="right:1765.7px;top:722.63px;font-size:18.2px;font-weight:400;color:#000;transform:scaleX(1.086);transform-origin:100% 0;">-300,00 €</div>
<div class="t" style="right:1649.7px;top:722.63px;font-size:18.2px;font-weight:400;color:#000;transform:scaleX(1.086);transform-origin:100% 0;">-200,00 €</div>
<div class="t" style="right:1534.7px;top:722.63px;font-size:18.2px;font-weight:400;color:#000;transform:scaleX(1.086);transform-origin:100% 0;">-400,00 €</div>
<div class="t" style="right:1418.7px;top:722.63px;font-size:18.2px;font-weight:400;color:#000;transform:scaleX(1.086);transform-origin:100% 0;">300,00 €</div>
<div class="t" style="right:1235.7px;top:722.63px;font-size:18.2px;font-weight:400;color:#000;transform:scaleX(1.086);transform-origin:100% 0;">-300,00 €</div>
<div class="t" style="right:1119.7px;top:722.63px;font-size:18.2px;font-weight:400;color:#000;transform:scaleX(1.086);transform-origin:100% 0;">-200,00 €</div>
<div class="t" style="right:1004.7px;top:722.63px;font-size:18.2px;font-weight:400;color:#000;transform:scaleX(1.086);transform-origin:100% 0;">-400,00 €</div>
<div class="t" style="right:888.7px;top:722.63px;font-size:18.2px;font-weight:400;color:#000;transform:scaleX(1.086);transform-origin:100% 0;">300,00 €</div>
<div class="t" style="right:728.6999999999998px;top:722.63px;font-size:18.2px;font-weight:400;color:#000;transform:scaleX(1.086);transform-origin:100% 0;">-300,00 €</div>
<div class="r" style="left:2155px;top:706px;width:117px;height:30px;background:#cdcdcd;"></div>
<div class="r" style="left:2158px;top:708px;width:113px;height:27px;background:#b3bac9;"></div>
<div class="t" style="right:612.6999999999998px;top:722.63px;font-size:18.2px;font-weight:400;color:#000;transform:scaleX(1.086);transform-origin:100% 0;">-200,00 €</div>
<div class="r" style="left:2271px;top:706px;width:117px;height:30px;background:#cdcdcd;"></div>
<div class="r" style="left:2273px;top:708px;width:114px;height:27px;background:#b3bac9;"></div>
<div class="t" style="right:496.6999999999998px;top:722.63px;font-size:18.2px;font-weight:400;color:#000;transform:scaleX(1.086);transform-origin:100% 0;">-400,00 €</div>
<div class="r" style="left:2387px;top:706px;width:116px;height:30px;background:#cdcdcd;"></div>
<div class="r" style="left:2389px;top:708px;width:113px;height:27px;background:#b3bac9;"></div>
<div class="t" style="right:381.6999999999998px;top:722.63px;font-size:18.2px;font-weight:400;color:#000;transform:scaleX(1.086);transform-origin:100% 0;">300,00 €</div>
<div class="t" style="right:265.6999999999998px;top:722.63px;font-size:18.2px;font-weight:400;color:#000;transform:scaleX(1.086);transform-origin:100% 0;">-300,00 €</div>
<div class="r" style="left:2502px;top:706px;width:117px;height:30px;background:#cdcdcd;"></div>
<div class="r" style="left:2504px;top:708px;width:113px;height:27px;background:#b3bac9;"></div>
<div class="t" style="right:265.6999999999998px;top:722.63px;font-size:18.2px;font-weight:400;color:#000;transform:scaleX(1.086);transform-origin:100% 0;">-300,00 €</div>
<div class="r" style="left:2618px;top:706px;width:124px;height:30px;background:#cdcdcd;"></div>
<div class="r" style="left:2621px;top:708px;width:120px;height:27px;background:#b6c0ca;"></div>
<div class="t" style="right:142.69999999999982px;top:722.61px;font-size:19.7px;font-weight:400;color:#000;transform:scaleX(1.128);transform-origin:100% 0;-webkit-text-stroke:0.3px #000;">-1 200,00 €</div>
<div class="r" style="left:98px;top:735px;width:504px;height:29px;background:#cdcdcd;"></div>
<div class="r" style="left:100px;top:737px;width:501px;height:26px;background:#b4bec8;"></div>
<div class="t" style="left:116px;top:749.40px;font-size:21.7px;font-weight:700;color:#000;transform:scaleX(0.92);transform-origin:0 0;">INVENTAIRE</div>
<div class="t" style="left:116px;top:779.96px;font-size:18.7px;font-weight:400;color:#000;transform:scaleX(0.913);transform-origin:0 0;">BUDGET</div>
<div class="r" style="left:601px;top:763px;width:116px;height:30px;background:#cdcdcd;"></div>
<div class="r" style="left:603px;top:765px;width:113px;height:27px;background:#cfa68b;"></div>
<div class="t" style="right:2167.7px;top:779.63px;font-size:18.2px;font-weight:400;color:#000;transform:scaleX(1.086);transform-origin:100% 0;">1 000,00 €</div>
<div class="r" style="left:716px;top:763px;width:117px;height:30px;background:#cdcdcd;"></div>
<div class="r" style="left:718px;top:765px;width:114px;height:27px;background:#cfa68b;"></div>
<div class="t" style="right:2051.7px;top:779.63px;font-size:18.2px;font-weight:400;color:#000;transform:scaleX(1.086);transform-origin:100% 0;">1 000,00 €</div>
<div class="r" style="left:832px;top:763px;width:116px;height:30px;background:#cdcdcd;"></div>
<div class="r" style="left:834px;top:765px;width:113px;height:27px;background:#cfa68b;"></div>
<div class="t" style="right:1936.7px;top:779.63px;font-size:18.2px;font-weight:400;color:#000;transform:scaleX(1.086);transform-origin:100% 0;">1 000,00 €</div>
<div class="t" style="right:1765.7px;top:779.63px;font-size:18.2px;font-weight:400;color:#000;transform:scaleX(1.086);transform-origin:100% 0;">3 000,00 €</div>
<div class="r" style="left:1118px;top:763px;width:117px;height:30px;background:#cdcdcd;"></div>
<div class="r" style="left:1121px;top:765px;width:113px;height:27px;background:#acacac;"></div>
<div class="t" style="right:1649.7px;top:779.63px;font-size:18.2px;font-weight:400;color:#000;transform:scaleX(1.086);transform-origin:100% 0;">1 000,00 €</div>
<div class="r" style="left:1234px;top:763px;width:116px;height:30px;background:#cdcdcd;"></div>
<div class="r" style="left:1236px;top:765px;width:113px;height:27px;background:#acacac;"></div>
<div class="t" style="right:1534.7px;top:779.63px;font-size:18.2px;font-weight:400;color:#000;transform:scaleX(1.086);transform-origin:100% 0;">1 000,00 €</div>
<div class="r" style="left:1349px;top:763px;width:117px;height:30px;background:#cdcdcd;"></div>
<div class="r" style="left:1351px;top:765px;width:114px;height:27px;background:#acacac;"></div>
<div class="t" style="right:1418.7px;top:779.63px;font-size:18.2px;font-weight:400;color:#000;transform:scaleX(1.086);transform-origin:100% 0;">1 000,00 €</div>
<div class="t" style="right:1235.7px;top:779.63px;font-size:18.2px;font-weight:400;color:#000;transform:scaleX(1.086);transform-origin:100% 0;">3 000,00 €</div>
<div class="r" style="left:1648px;top:763px;width:117px;height:30px;background:#cdcdcd;"></div>
<div class="r" style="left:1651px;top:765px;width:113px;height:27px;background:#cdb782;"></div>
<div class="t" style="right:1119.7px;top:779.63px;font-size:18.2px;font-weight:400;color:#000;transform:scaleX(1.086);transform-origin:100% 0;">1 000,00 €</div>
<div class="r" style="left:1764px;top:763px;width:116px;height:30px;background:#cdcdcd;"></div>
<div class="r" style="left:1766px;top:765px;width:113px;height:27px;background:#cdb782;"></div>
<div class="t" style="right:1004.7px;top:779.63px;font-size:18.2px;font-weight:400;color:#000;transform:scaleX(1.086);transform-origin:100% 0;">1 000,00 €</div>
<div class="r" style="left:1879px;top:763px;width:117px;height:30px;background:#cdcdcd;"></div>
<div class="r" style="left:1881px;top:765px;width:114px;height:27px;background:#cdb782;"></div>
<div class="t" style="right:888.7px;top:779.63px;font-size:18.2px;font-weight:400;color:#000;transform:scaleX(1.086);transform-origin:100% 0;">1 000,00 €</div>
<div class="t" style="right:728.6999999999998px;top:779.63px;font-size:18.2px;font-weight:400;color:#000;transform:scaleX(1.086);transform-origin:100% 0;">3 000,00 €</div>
<div class="r" style="left:2155px;top:763px;width:117px;height:30px;background:#cdcdcd;"></div>
<div class="r" style="left:2158px;top:765px;width:113px;height:27px;background:#8fa0bc;"></div>
<div class="t" style="right:612.6999999999998px;top:779.63px;font-size:18.2px;font-weight:400;color:#000;transform:scaleX(1.086);transform-origin:100% 0;">1 000,00 €</div>
<div class="r" style="left:2271px;top:763px;width:117px;height:30px;background:#cdcdcd;"></div>
<div class="r" style="left:2273px;top:765px;width:114px;height:27px;background:#8fa0bc;"></div>
<div class="t" style="right:496.6999999999998px;top:779.63px;font-size:18.2px;font-weight:400;color:#000;transform:scaleX(1.086);transform-origin:100% 0;">1 000,00 €</div>
<div class="r" style="left:2387px;top:763px;width:116px;height:30px;background:#cdcdcd;"></div>
<div class="r" style="left:2389px;top:765px;width:113px;height:27px;background:#8fa0bc;"></div>
<div class="t" style="right:381.6999999999998px;top:779.63px;font-size:18.2px;font-weight:400;color:#000;transform:scaleX(1.086);transform-origin:100% 0;">1 000,00 €</div>
<div class="t" style="right:265.6999999999998px;top:779.63px;font-size:18.2px;font-weight:400;color:#000;transform:scaleX(1.086);transform-origin:100% 0;">3 000,00 €</div>
<div class="r" style="left:2502px;top:763px;width:117px;height:30px;background:#cdcdcd;"></div>
<div class="r" style="left:2504px;top:765px;width:113px;height:27px;background:#b3bac9;"></div>
<div class="t" style="right:265.6999999999998px;top:779.63px;font-size:18.2px;font-weight:400;color:#000;transform:scaleX(1.086);transform-origin:100% 0;">3 000,00 €</div>
<div class="r" style="left:2618px;top:763px;width:124px;height:30px;background:#cdcdcd;"></div>
<div class="r" style="left:2621px;top:765px;width:120px;height:27px;background:#b6c0ca;"></div>
<div class="t" style="right:142.69999999999982px;top:779.61px;font-size:19.7px;font-weight:400;color:#000;transform:scaleX(1.128);transform-origin:100% 0;-webkit-text-stroke:0.3px #000;">12 000,00 €</div>
<div class="t" style="left:116px;top:807.96px;font-size:18.7px;font-weight:400;color:#000;transform:scaleX(0.867);transform-origin:0 0;">RÉEL</div>
<div class="r" style="left:601px;top:792px;width:116px;height:29px;background:#cdcdcd;"></div>
<div class="r" style="left:603px;top:794px;width:113px;height:26px;background:#cfa68b;"></div>
<div class="t" style="right:2167.7px;top:807.63px;font-size:18.2px;font-weight:400;color:#000;transform:scaleX(1.086);transform-origin:100% 0;">500,00 €</div>
<div class="r" style="left:716px;top:792px;width:117px;height:29px;background:#cdcdcd;"></div>
<div class="r" style="left:718px;top:794px;width:114px;height:26px;background:#cfa68b;"></div>
<div class="t" style="right:2051.7px;top:807.63px;font-size:18.2px;font-weight:400;color:#000;transform:scaleX(1.086);transform-origin:100% 0;">700,00 €</div>
<div class="r" style="left:832px;top:792px;width:116px;height:29px;background:#cdcdcd;"></div>
<div class="r" style="left:834px;top:794px;width:113px;height:26px;background:#cfa68b;"></div>
<div class="t" style="right:1936.7px;top:807.63px;font-size:18.2px;font-weight:400;color:#000;transform:scaleX(1.086);transform-origin:100% 0;">1 100,00 €</div>
<div class="t" style="right:1765.7px;top:807.63px;font-size:18.2px;font-weight:400;color:#000;transform:scaleX(1.086);transform-origin:100% 0;">2 300,00 €</div>
<div class="r" style="left:1118px;top:792px;width:117px;height:29px;background:#cdcdcd;"></div>
<div class="r" style="left:1121px;top:794px;width:113px;height:26px;background:#acacac;"></div>
<div class="t" style="right:1649.7px;top:807.63px;font-size:18.2px;font-weight:400;color:#000;transform:scaleX(1.086);transform-origin:100% 0;">500,00 €</div>
<div class="r" style="left:1234px;top:792px;width:116px;height:29px;background:#cdcdcd;"></div>
<div class="r" style="left:1236px;top:794px;width:113px;height:26px;background:#acacac;"></div>
<div class="t" style="right:1534.7px;top:807.63px;font-size:18.2px;font-weight:400;color:#000;transform:scaleX(1.086);transform-origin:100% 0;">700,00 €</div>
<div class="r" style="left:1349px;top:792px;width:117px;height:29px;background:#cdcdcd;"></div>
<div class="r" style="left:1351px;top:794px;width:114px;height:26px;background:#acacac;"></div>
<div class="t" style="right:1418.7px;top:807.63px;font-size:18.2px;font-weight:400;color:#000;transform:scaleX(1.086);transform-origin:100% 0;">1 100,00 €</div>
<div class="t" style="right:1235.7px;top:807.63px;font-size:18.2px;font-weight:400;color:#000;transform:scaleX(1.086);transform-origin:100% 0;">2 300,00 €</div>
<div class="r" style="left:1648px;top:792px;width:117px;height:29px;background:#cdcdcd;"></div>
<div class="r" style="left:1651px;top:794px;width:113px;height:26px;background:#cdb782;"></div>
<div class="t" style="right:1119.7px;top:807.63px;font-size:18.2px;font-weight:400;color:#000;transform:scaleX(1.086);transform-origin:100% 0;">500,00 €</div>
<div class="r" style="left:1764px;top:792px;width:116px;height:29px;background:#cdcdcd;"></div>
<div class="r" style="left:1766px;top:794px;width:113px;height:26px;background:#cdb782;"></div>
<div class="t" style="right:1004.7px;top:807.63px;font-size:18.2px;font-weight:400;color:#000;transform:scaleX(1.086);transform-origin:100% 0;">700,00 €</div>
<div class="r" style="left:1879px;top:792px;width:117px;height:29px;background:#cdcdcd;"></div>
<div class="r" style="left:1881px;top:794px;width:114px;height:26px;background:#cdb782;"></div>
<div class="t" style="right:888.7px;top:807.63px;font-size:18.2px;font-weight:400;color:#000;transform:scaleX(1.086);transform-origin:100% 0;">1 100,00 €</div>
<div class="t" style="right:728.6999999999998px;top:807.63px;font-size:18.2px;font-weight:400;color:#000;transform:scaleX(1.086);transform-origin:100% 0;">2 300,00 €</div>
<div class="r" style="left:2155px;top:792px;width:117px;height:29px;background:#cdcdcd;"></div>
<div class="r" style="left:2158px;top:794px;width:113px;height:26px;background:#8fa0bc;"></div>
<div class="t" style="right:612.6999999999998px;top:807.63px;font-size:18.2px;font-weight:400;color:#000;transform:scaleX(1.086);transform-origin:100% 0;">500,00 €</div>
<div class="r" style="left:2271px;top:792px;width:117px;height:29px;background:#cdcdcd;"></div>
<div class="r" style="left:2273px;top:794px;width:114px;height:26px;background:#8fa0bc;"></div>
<div class="t" style="right:496.6999999999998px;top:807.63px;font-size:18.2px;font-weight:400;color:#000;transform:scaleX(1.086);transform-origin:100% 0;">700,00 €</div>
<div class="r" style="left:2387px;top:792px;width:116px;height:29px;background:#cdcdcd;"></div>
<div class="r" style="left:2389px;top:794px;width:113px;height:26px;background:#8fa0bc;"></div>
<div class="t" style="right:381.6999999999998px;top:807.63px;font-size:18.2px;font-weight:400;color:#000;transform:scaleX(1.086);transform-origin:100% 0;">1 100,00 €</div>
<div class="t" style="right:265.6999999999998px;top:807.63px;font-size:18.2px;font-weight:400;color:#000;transform:scaleX(1.086);transform-origin:100% 0;">2 300,00 €</div>
<div class="r" style="left:2502px;top:792px;width:117px;height:29px;background:#cdcdcd;"></div>
<div class="r" style="left:2504px;top:794px;width:113px;height:26px;background:#b3bac9;"></div>
<div class="t" style="right:265.6999999999998px;top:807.63px;font-size:18.2px;font-weight:400;color:#000;transform:scaleX(1.086);transform-origin:100% 0;">2 300,00 €</div>
<div class="r" style="left:2618px;top:792px;width:124px;height:29px;background:#cdcdcd;"></div>
<div class="r" style="left:2621px;top:794px;width:120px;height:26px;background:#b6c0ca;"></div>
<div class="t" style="right:142.69999999999982px;top:807.61px;font-size:19.7px;font-weight:400;color:#000;transform:scaleX(1.128);transform-origin:100% 0;-webkit-text-stroke:0.3px #000;">9 200,00 €</div>
<div class="t" style="left:116px;top:836.96px;font-size:18.7px;font-weight:400;color:#000;transform:scaleX(0.957);transform-origin:0 0;">VARIANCE</div>
<div class="t" style="right:2167.7px;top:836.63px;font-size:18.2px;font-weight:400;color:#000;transform:scaleX(1.086);transform-origin:100% 0;">-500,00 €</div>
<div class="t" style="right:2051.7px;top:836.63px;font-size:18.2px;font-weight:400;color:#000;transform:scaleX(1.086);transform-origin:100% 0;">-300,00 €</div>
<div class="t" style="right:1936.7px;top:836.63px;font-size:18.2px;font-weight:400;color:#000;transform:scaleX(1.086);transform-origin:100% 0;">100,00 €</div>
<div class="t" style="right:1765.7px;top:836.63px;font-size:18.2px;font-weight:400;color:#000;transform:scaleX(1.086);transform-origin:100% 0;">-700,00 €</div>
<div class="t" style="right:1649.7px;top:836.63px;font-size:18.2px;font-weight:400;color:#000;transform:scaleX(1.086);transform-origin:100% 0;">-500,00 €</div>
<div class="t" style="right:1534.7px;top:836.63px;font-size:18.2px;font-weight:400;color:#000;transform:scaleX(1.086);transform-origin:100% 0;">-300,00 €</div>
<div class="t" style="right:1418.7px;top:836.63px;font-size:18.2px;font-weight:400;color:#000;transform:scaleX(1.086);transform-origin:100% 0;">100,00 €</div>
<div class="t" style="right:1235.7px;top:836.63px;font-size:18.2px;font-weight:400;color:#000;transform:scaleX(1.086);transform-origin:100% 0;">-700,00 €</div>
<div class="t" style="right:1119.7px;top:836.63px;font-size:18.2px;font-weight:400;color:#000;transform:scaleX(1.086);transform-origin:100% 0;">-500,00 €</div>
<div class="t" style="right:1004.7px;top:836.63px;font-size:18.2px;font-weight:400;color:#000;transform:scaleX(1.086);transform-origin:100% 0;">-300,00 €</div>
<div class="t" style="right:888.7px;top:836.63px;font-size:18.2px;font-weight:400;color:#000;transform:scaleX(1.086);transform-origin:100% 0;">100,00 €</div>
<div class="t" style="right:728.6999999999998px;top:836.63px;font-size:18.2px;font-weight:400;color:#000;transform:scaleX(1.086);transform-origin:100% 0;">-700,00 €</div>
<div class="t" style="right:612.6999999999998px;top:836.63px;font-size:18.2px;font-weight:400;color:#000;transform:scaleX(1.086);transform-origin:100% 0;">-500,00 €</div>
<div class="t" style="right:496.6999999999998px;top:836.63px;font-size:18.2px;font-weight:400;color:#000;transform:scaleX(1.086);transform-origin:100% 0;">-300,00 €</div>
<div class="t" style="right:381.6999999999998px;top:836.63px;font-size:18.2px;font-weight:400;color:#000;transform:scaleX(1.086);transform-origin:100% 0;">100,00 €</div>
<div class="t" style="right:265.6999999999998px;top:836.63px;font-size:18.2px;font-weight:400;color:#000;transform:scaleX(1.086);transform-origin:100% 0;">-700,00 €</div>
<div class="r" style="left:2502px;top:820px;width:117px;height:30px;background:#cdcdcd;"></div>
<div class="r" style="left:2504px;top:822px;width:113px;height:27px;background:#b3bac9;"></div>
<div class="t" style="right:265.6999999999998px;top:836.63px;font-size:18.2px;font-weight:400;color:#000;transform:scaleX(1.086);transform-origin:100% 0;">-700,00 €</div>
<div class="r" style="left:2618px;top:820px;width:124px;height:30px;background:#cdcdcd;"></div>
<div class="r" style="left:2621px;top:822px;width:120px;height:27px;background:#b6c0ca;"></div>
<div class="t" style="right:142.69999999999982px;top:836.61px;font-size:19.7px;font-weight:400;color:#000;transform:scaleX(1.128);transform-origin:100% 0;-webkit-text-stroke:0.3px #000;">-2 800,00 €</div>
<div class="t" style="left:116px;top:864.96px;font-size:18.7px;font-weight:400;color:#000;transform:scaleX(0.91);transform-origin:0 0;">ANNÉE PRÉCÉDENTE RÉEL</div>
<div class="r" style="left:601px;top:849px;width:116px;height:29px;background:#cdcdcd;"></div>
<div class="r" style="left:603px;top:851px;width:113px;height:26px;background:#cfa68b;"></div>
<div class="t" style="right:2167.7px;top:864.63px;font-size:18.2px;font-weight:400;color:#000;transform:scaleX(1.086);transform-origin:100% 0;">700,00 €</div>
<div class="r" style="left:716px;top:849px;width:117px;height:29px;background:#cdcdcd;"></div>
<div class="r" style="left:718px;top:851px;width:114px;height:26px;background:#cfa68b;"></div>
<div class="t" style="right:2051.7px;top:864.63px;font-size:18.2px;font-weight:400;color:#000;transform:scaleX(1.086);transform-origin:100% 0;">1 100,00 €</div>
<div class="r" style="left:832px;top:849px;width:116px;height:29px;background:#cdcdcd;"></div>
<div class="r" style="left:834px;top:851px;width:113px;height:26px;background:#cfa68b;"></div>
<div class="t" style="right:1936.7px;top:864.63px;font-size:18.2px;font-weight:400;color:#000;transform:scaleX(1.086);transform-origin:100% 0;">800,00 €</div>
<div class="t" style="right:1765.7px;top:864.63px;font-size:18.2px;font-weight:400;color:#000;transform:scaleX(1.086);transform-origin:100% 0;">2 600,00 €</div>
<div class="r" style="left:1118px;top:849px;width:117px;height:29px;background:#cdcdcd;"></div>
<div class="r" style="left:1121px;top:851px;width:113px;height:26px;background:#acacac;"></div>
<div class="t" style="right:1649.7px;top:864.63px;font-size:18.2px;font-weight:400;color:#000;transform:scaleX(1.086);transform-origin:100% 0;">700,00 €</div>
<div class="r" style="left:1234px;top:849px;width:116px;height:29px;background:#cdcdcd;"></div>
<div class="r" style="left:1236px;top:851px;width:113px;height:26px;background:#acacac;"></div>
<div class="t" style="right:1534.7px;top:864.63px;font-size:18.2px;font-weight:400;color:#000;transform:scaleX(1.086);transform-origin:100% 0;">1 100,00 €</div>
<div class="r" style="left:1349px;top:849px;width:117px;height:29px;background:#cdcdcd;"></div>
<div class="r" style="left:1351px;top:851px;width:114px;height:26px;background:#acacac;"></div>
<div class="t" style="right:1418.7px;top:864.63px;font-size:18.2px;font-weight:400;color:#000;transform:scaleX(1.086);transform-origin:100% 0;">800,00 €</div>
<div class="t" style="right:1235.7px;top:864.63px;font-size:18.2px;font-weight:400;color:#000;transform:scaleX(1.086);transform-origin:100% 0;">2 600,00 €</div>
<div class="r" style="left:1648px;top:849px;width:117px;height:29px;background:#cdcdcd;"></div>
<div class="r" style="left:1651px;top:851px;width:113px;height:26px;background:#cdb782;"></div>
<div class="t" style="right:1119.7px;top:864.63px;font-size:18.2px;font-weight:400;color:#000;transform:scaleX(1.086);transform-origin:100% 0;">700,00 €</div>
<div class="r" style="left:1764px;top:849px;width:116px;height:29px;background:#cdcdcd;"></div>
<div class="r" style="left:1766px;top:851px;width:113px;height:26px;background:#cdb782;"></div>
<div class="t" style="right:1004.7px;top:864.63px;font-size:18.2px;font-weight:400;color:#000;transform:scaleX(1.086);transform-origin:100% 0;">1 100,00 €</div>
<div class="r" style="left:1879px;top:849px;width:117px;height:29px;background:#cdcdcd;"></div>
<div class="r" style="left:1881px;top:851px;width:114px;height:26px;background:#cdb782;"></div>
<div class="t" style="right:888.7px;top:864.63px;font-size:18.2px;font-weight:400;color:#000;transform:scaleX(1.086);transform-origin:100% 0;">800,00 €</div>
<div class="t" style="right:728.6999999999998px;top:864.63px;font-size:18.2px;font-weight:400;color:#000;transform:scaleX(1.086);transform-origin:100% 0;">2 600,00 €</div>
<div class="r" style="left:2155px;top:849px;width:117px;height:29px;background:#cdcdcd;"></div>
<div class="r" style="left:2158px;top:851px;width:113px;height:26px;background:#8fa0bc;"></div>
<div class="t" style="right:612.6999999999998px;top:864.63px;font-size:18.2px;font-weight:400;color:#000;transform:scaleX(1.086);transform-origin:100% 0;">700,00 €</div>
<div class="r" style="left:2271px;top:849px;width:117px;height:29px;background:#cdcdcd;"></div>
<div class="r" style="left:2273px;top:851px;width:114px;height:26px;background:#8fa0bc;"></div>
<div class="t" style="right:496.6999999999998px;top:864.63px;font-size:18.2px;font-weight:400;color:#000;transform:scaleX(1.086);transform-origin:100% 0;">1 100,00 €</div>
<div class="r" style="left:2387px;top:849px;width:116px;height:29px;background:#cdcdcd;"></div>
<div class="r" style="left:2389px;top:851px;width:113px;height:26px;background:#8fa0bc;"></div>
<div class="t" style="right:381.6999999999998px;top:864.63px;font-size:18.2px;font-weight:400;color:#000;transform:scaleX(1.086);transform-origin:100% 0;">800,00 €</div>
<div class="t" style="right:265.6999999999998px;top:864.63px;font-size:18.2px;font-weight:400;color:#000;transform:scaleX(1.086);transform-origin:100% 0;">2 600,00 €</div>
<div class="r" style="left:2502px;top:849px;width:117px;height:29px;background:#cdcdcd;"></div>
<div class="r" style="left:2504px;top:851px;width:113px;height:26px;background:#b3bac9;"></div>
<div class="t" style="right:265.6999999999998px;top:864.63px;font-size:18.2px;font-weight:400;color:#000;transform:scaleX(1.086);transform-origin:100% 0;">2 600,00 €</div>
<div class="r" style="left:2618px;top:849px;width:124px;height:29px;background:#cdcdcd;"></div>
<div class="r" style="left:2621px;top:851px;width:120px;height:26px;background:#b6c0ca;"></div>
<div class="t" style="right:142.69999999999982px;top:864.61px;font-size:19.7px;font-weight:400;color:#000;transform:scaleX(1.128);transform-origin:100% 0;-webkit-text-stroke:0.3px #000;">10 400,00 €</div>
<div class="t" style="left:116px;top:893.96px;font-size:18.7px;font-weight:400;color:#000;transform:scaleX(0.934);transform-origin:0 0;">ÉCART DE L’ANNÉE PRÉCÉDENTE</div>
<div class="t" style="right:2167.7px;top:893.63px;font-size:18.2px;font-weight:400;color:#000;transform:scaleX(1.086);transform-origin:100% 0;">-200,00 €</div>
<div class="t" style="right:2051.7px;top:893.63px;font-size:18.2px;font-weight:400;color:#000;transform:scaleX(1.086);transform-origin:100% 0;">-400,00 €</div>
<div class="t" style="right:1936.7px;top:893.63px;font-size:18.2px;font-weight:400;color:#000;transform:scaleX(1.086);transform-origin:100% 0;">300,00 €</div>
<div class="t" style="right:1765.7px;top:893.63px;font-size:18.2px;font-weight:400;color:#000;transform:scaleX(1.086);transform-origin:100% 0;">-300,00 €</div>
<div class="t" style="right:1649.7px;top:893.63px;font-size:18.2px;font-weight:400;color:#000;transform:scaleX(1.086);transform-origin:100% 0;">-200,00 €</div>
<div class="t" style="right:1534.7px;top:893.63px;font-size:18.2px;font-weight:400;color:#000;transform:scaleX(1.086);transform-origin:100% 0;">-400,00 €</div>
<div class="t" style="right:1418.7px;top:893.63px;font-size:18.2px;font-weight:400;color:#000;transform:scaleX(1.086);transform-origin:100% 0;">300,00 €</div>
<div class="t" style="right:1235.7px;top:893.63px;font-size:18.2px;font-weight:400;color:#000;transform:scaleX(1.086);transform-origin:100% 0;">-300,00 €</div>
<div class="t" style="right:1119.7px;top:893.63px;font-size:18.2px;font-weight:400;color:#000;transform:scaleX(1.086);transform-origin:100% 0;">-200,00 €</div>
<div class="t" style="right:1004.7px;top:893.63px;font-size:18.2px;font-weight:400;color:#000;transform:scaleX(1.086);transform-origin:100% 0;">-400,00 €</div>
<div class="t" style="right:888.7px;top:893.63px;font-size:18.2px;font-weight:400;color:#000;transform:scaleX(1.086);transform-origin:100% 0;">300,00 €</div>
<div class="t" style="right:728.6999999999998px;top:893.63px;font-size:18.2px;font-weight:400;color:#000;transform:scaleX(1.086);transform-origin:100% 0;">-300,00 €</div>
<div class="r" style="left:2155px;top:877px;width:117px;height:30px;background:#cdcdcd;"></div>
<div class="r" style="left:2158px;top:879px;width:113px;height:27px;background:#b3bac9;"></div>
<div class="t" style="right:612.6999999999998px;top:893.63px;font-size:18.2px;font-weight:400;color:#000;transform:scaleX(1.086);transform-origin:100% 0;">-200,00 €</div>
<div class="r" style="left:2271px;top:877px;width:117px;height:30px;background:#cdcdcd;"></div>
<div class="r" style="left:2273px;top:879px;width:114px;height:27px;background:#b3bac9;"></div>
<div class="t" style="right:496.6999999999998px;top:893.63px;font-size:18.2px;font-weight:400;color:#000;transform:scaleX(1.086);transform-origin:100% 0;">-400,00 €</div>
<div class="r" style="left:2387px;top:877px;width:116px;height:30px;background:#cdcdcd;"></div>
<div class="r" style="left:2389px;top:879px;width:113px;height:27px;background:#b3bac9;"></div>
<div class="t" style="right:381.6999999999998px;top:893.63px;font-size:18.2px;font-weight:400;color:#000;transform:scaleX(1.086);transform-origin:100% 0;">300,00 €</div>
<div class="t" style="right:265.6999999999998px;top:893.63px;font-size:18.2px;font-weight:400;color:#000;transform:scaleX(1.086);transform-origin:100% 0;">-300,00 €</div>
<div class="r" style="left:2502px;top:877px;width:117px;height:30px;background:#cdcdcd;"></div>
<div class="r" style="left:2504px;top:879px;width:113px;height:27px;background:#b3bac9;"></div>
<div class="t" style="right:265.6999999999998px;top:893.63px;font-size:18.2px;font-weight:400;color:#000;transform:scaleX(1.086);transform-origin:100% 0;">-300,00 €</div>
<div class="r" style="left:2618px;top:877px;width:124px;height:30px;background:#cdcdcd;"></div>
<div class="r" style="left:2621px;top:879px;width:120px;height:27px;background:#b6c0ca;"></div>
<div class="t" style="right:142.69999999999982px;top:893.61px;font-size:19.7px;font-weight:400;color:#000;transform:scaleX(1.128);transform-origin:100% 0;-webkit-text-stroke:0.3px #000;">-1 200,00 €</div>
<div class="r" style="left:98px;top:906px;width:504px;height:29px;background:#cdcdcd;"></div>
<div class="r" style="left:100px;top:908px;width:501px;height:26px;background:#b4bec8;"></div>
<div class="t" style="left:116px;top:920.40px;font-size:21.7px;font-weight:700;color:#000;transform:scaleX(0.878);transform-origin:0 0;">COMPTES DÉBITEURS</div>
<div class="t" style="left:116px;top:950.96px;font-size:18.7px;font-weight:400;color:#000;transform:scaleX(0.913);transform-origin:0 0;">BUDGET</div>
<div class="r" style="left:601px;top:934px;width:116px;height:30px;background:#cdcdcd;"></div>
<div class="r" style="left:603px;top:936px;width:113px;height:27px;background:#cfa68b;"></div>
<div class="t" style="right:2167.7px;top:950.63px;font-size:18.2px;font-weight:400;color:#000;transform:scaleX(1.086);transform-origin:100% 0;">1 000,00 €</div>
<div class="r" style="left:716px;top:934px;width:117px;height:30px;background:#cdcdcd;"></div>
<div class="r" style="left:718px;top:936px;width:114px;height:27px;background:#cfa68b;"></div>
<div class="t" style="right:2051.7px;top:950.63px;font-size:18.2px;font-weight:400;color:#000;transform:scaleX(1.086);transform-origin:100% 0;">1 000,00 €</div>
<div class="r" style="left:832px;top:934px;width:116px;height:30px;background:#cdcdcd;"></div>
<div class="r" style="left:834px;top:936px;width:113px;height:27px;background:#cfa68b;"></div>
<div class="t" style="right:1936.7px;top:950.63px;font-size:18.2px;font-weight:400;color:#000;transform:scaleX(1.086);transform-origin:100% 0;">1 000,00 €</div>
<div class="t" style="right:1765.7px;top:950.63px;font-size:18.2px;font-weight:400;color:#000;transform:scaleX(1.086);transform-origin:100% 0;">3 000,00 €</div>
<div class="r" style="left:1118px;top:934px;width:117px;height:30px;background:#cdcdcd;"></div>
<div class="r" style="left:1121px;top:936px;width:113px;height:27px;background:#acacac;"></div>
<div class="t" style="right:1649.7px;top:950.63px;font-size:18.2px;font-weight:400;color:#000;transform:scaleX(1.086);transform-origin:100% 0;">1 000,00 €</div>
<div class="r" style="left:1234px;top:934px;width:116px;height:30px;background:#cdcdcd;"></div>
<div class="r" style="left:1236px;top:936px;width:113px;height:27px;background:#acacac;"></div>
<div class="t" style="right:1534.7px;top:950.63px;font-size:18.2px;font-weight:400;color:#000;transform:scaleX(1.086);transform-origin:100% 0;">1 000,00 €</div>
<div class="r" style="left:1349px;top:934px;width:117px;height:30px;background:#cdcdcd;"></div>
<div class="r" style="left:1351px;top:936px;width:114px;height:27px;background:#acacac;"></div>
<div class="t" style="right:1418.7px;top:950.63px;font-size:18.2px;font-weight:400;color:#000;transform:scaleX(1.086);transform-origin:100% 0;">1 000,00 €</div>
<div class="t" style="right:1235.7px;top:950.63px;font-size:18.2px;font-weight:400;color:#000;transform:scaleX(1.086);transform-origin:100% 0;">3 000,00 €</div>
<div class="r" style="left:1648px;top:934px;width:117px;height:30px;background:#cdcdcd;"></div>
<div class="r" style="left:1651px;top:936px;width:113px;height:27px;background:#cdb782;"></div>
<div class="t" style="right:1119.7px;top:950.63px;font-size:18.2px;font-weight:400;color:#000;transform:scaleX(1.086);transform-origin:100% 0;">1 000,00 €</div>
<div class="r" style="left:1764px;top:934px;width:116px;height:30px;background:#cdcdcd;"></div>
<div class="r" style="left:1766px;top:936px;width:113px;height:27px;background:#cdb782;"></div>
<div class="t" style="right:1004.7px;top:950.63px;font-size:18.2px;font-weight:400;color:#000;transform:scaleX(1.086);transform-origin:100% 0;">1 000,00 €</div>
<div class="r" style="left:1879px;top:934px;width:117px;height:30px;background:#cdcdcd;"></div>
<div class="r" style="left:1881px;top:936px;width:114px;height:27px;background:#cdb782;"></div>
<div class="t" style="right:888.7px;top:950.63px;font-size:18.2px;font-weight:400;color:#000;transform:scaleX(1.086);transform-origin:100% 0;">1 000,00 €</div>
<div class="t" style="right:728.6999999999998px;top:950.63px;font-size:18.2px;font-weight:400;color:#000;transform:scaleX(1.086);transform-origin:100% 0;">3 000,00 €</div>
<div class="r" style="left:2155px;top:934px;width:117px;height:30px;background:#cdcdcd;"></div>
<div class="r" style="left:2158px;top:936px;width:113px;height:27px;background:#8fa0bc;"></div>
<div class="t" style="right:612.6999999999998px;top:950.63px;font-size:18.2px;font-weight:400;color:#000;transform:scaleX(1.086);transform-origin:100% 0;">1 000,00 €</div>
<div class="r" style="left:2271px;top:934px;width:117px;height:30px;background:#cdcdcd;"></div>
<div class="r" style="left:2273px;top:936px;width:114px;height:27px;background:#8fa0bc;"></div>
<div class="t" style="right:496.6999999999998px;top:950.63px;font-size:18.2px;font-weight:400;color:#000;transform:scaleX(1.086);transform-origin:100% 0;">1 000,00 €</div>
<div class="r" style="left:2387px;top:934px;width:116px;height:30px;background:#cdcdcd;"></div>
<div class="r" style="left:2389px;top:936px;width:113px;height:27px;background:#8fa0bc;"></div>
<div class="t" style="right:381.6999999999998px;top:950.63px;font-size:18.2px;font-weight:400;color:#000;transform:scaleX(1.086);transform-origin:100% 0;">1 000,00 €</div>
<div class="t" style="right:265.6999999999998px;top:950.63px;font-size:18.2px;font-weight:400;color:#000;transform:scaleX(1.086);transform-origin:100% 0;">3 000,00 €</div>
<div class="r" style="left:2502px;top:934px;width:117px;height:30px;background:#cdcdcd;"></div>
<div class="r" style="left:2504px;top:936px;width:113px;height:27px;background:#b3bac9;"></div>
<div class="t" style="right:265.6999999999998px;top:950.63px;font-size:18.2px;font-weight:400;color:#000;transform:scaleX(1.086);transform-origin:100% 0;">3 000,00 €</div>
<div class="r" style="left:2618px;top:934px;width:124px;height:30px;background:#cdcdcd;"></div>
<div class="r" style="left:2621px;top:936px;width:120px;height:27px;background:#b6c0ca;"></div>
<div class="t" style="right:142.69999999999982px;top:950.61px;font-size:19.7px;font-weight:400;color:#000;transform:scaleX(1.128);transform-origin:100% 0;-webkit-text-stroke:0.3px #000;">12 000,00 €</div>
<div class="t" style="left:116px;top:978.96px;font-size:18.7px;font-weight:400;color:#000;transform:scaleX(0.867);transform-origin:0 0;">RÉEL</div>
<div class="r" style="left:601px;top:963px;width:116px;height:29px;background:#cdcdcd;"></div>
<div class="r" style="left:603px;top:965px;width:113px;height:26px;background:#cfa68b;"></div>
<div class="t" style="right:2167.7px;top:978.63px;font-size:18.2px;font-weight:400;color:#000;transform:scaleX(1.086);transform-origin:100% 0;">500,00 €</div>
<div class="r" style="left:716px;top:963px;width:117px;height:29px;background:#cdcdcd;"></div>
<div class="r" style="left:718px;top:965px;width:114px;height:26px;background:#cfa68b;"></div>
<div class="t" style="right:2051.7px;top:978.63px;font-size:18.2px;font-weight:400;color:#000;transform:scaleX(1.086);transform-origin:100% 0;">700,00 €</div>
<div class="r" style="left:832px;top:963px;width:116px;height:29px;background:#cdcdcd;"></div>
<div class="r" style="left:834px;top:965px;width:113px;height:26px;background:#cfa68b;"></div>
<div class="t" style="right:1936.7px;top:978.63px;font-size:18.2px;font-weight:400;color:#000;transform:scaleX(1.086);transform-origin:100% 0;">1 100,00 €</div>
<div class="t" style="right:1765.7px;top:978.63px;font-size:18.2px;font-weight:400;color:#000;transform:scaleX(1.086);transform-origin:100% 0;">2 300,00 €</div>
<div class="r" style="left:1118px;top:963px;width:117px;height:29px;background:#cdcdcd;"></div>
<div class="r" style="left:1121px;top:965px;width:113px;height:26px;background:#acacac;"></div>
<div class="t" style="right:1649.7px;top:978.63px;font-size:18.2px;font-weight:400;color:#000;transform:scaleX(1.086);transform-origin:100% 0;">500,00 €</div>
<div class="r" style="left:1234px;top:963px;width:116px;height:29px;background:#cdcdcd;"></div>
<div class="r" style="left:1236px;top:965px;width:113px;height:26px;background:#acacac;"></div>
<div class="t" style="right:1534.7px;top:978.63px;font-size:18.2px;font-weight:400;color:#000;transform:scaleX(1.086);transform-origin:100% 0;">700,00 €</div>
<div class="r" style="left:1349px;top:963px;width:117px;height:29px;background:#cdcdcd;"></div>
<div class="r" style="left:1351px;top:965px;width:114px;height:26px;background:#acacac;"></div>
<div class="t" style="right:1418.7px;top:978.63px;font-size:18.2px;font-weight:400;color:#000;transform:scaleX(1.086);transform-origin:100% 0;">1 100,00 €</div>
<div class="t" style="right:1235.7px;top:978.63px;font-size:18.2px;font-weight:400;color:#000;transform:scaleX(1.086);transform-origin:100% 0;">2 300,00 €</div>
<div class="r" style="left:1648px;top:963px;width:117px;height:29px;background:#cdcdcd;"></div>
<div class="r" style="left:1651px;top:965px;width:113px;height:26px;background:#cdb782;"></div>
<div class="t" style="right:1119.7px;top:978.63px;font-size:18.2px;font-weight:400;color:#000;transform:scaleX(1.086);transform-origin:100% 0;">500,00 €</div>
<div class="r" style="left:1764px;top:963px;width:116px;height:29px;background:#cdcdcd;"></div>
<div class="r" style="left:1766px;top:965px;width:113px;height:26px;background:#cdb782;"></div>
<div class="t" style="right:1004.7px;top:978.63px;font-size:18.2px;font-weight:400;color:#000;transform:scaleX(1.086);transform-origin:100% 0;">700,00 €</div>
<div class="r" style="left:1879px;top:963px;width:117px;height:29px;background:#cdcdcd;"></div>
<div class="r" style="left:1881px;top:965px;width:114px;height:26px;background:#cdb782;"></div>
<div class="t" style="right:888.7px;top:978.63px;font-size:18.2px;font-weight:400;color:#000;transform:scaleX(1.086);transform-origin:100% 0;">1 100,00 €</div>
<div class="t" style="right:728.6999999999998px;top:978.63px;font-size:18.2px;font-weight:400;color:#000;transform:scaleX(1.086);transform-origin:100% 0;">2 300,00 €</div>
<div class="r" style="left:2155px;top:963px;width:117px;height:29px;background:#cdcdcd;"></div>
<div class="r" style="left:2158px;top:965px;width:113px;height:26px;background:#8fa0bc;"></div>
<div class="t" style="right:612.6999999999998px;top:978.63px;font-size:18.2px;font-weight:400;color:#000;transform:scaleX(1.086);transform-origin:100% 0;">500,00 €</div>
<div class="r" style="left:2271px;top:963px;width:117px;height:29px;background:#cdcdcd;"></div>
<div class="r" style="left:2273px;top:965px;width:114px;height:26px;background:#8fa0bc;"></div>
<div class="t" style="right:496.6999999999998px;top:978.63px;font-size:18.2px;font-weight:400;color:#000;transform:scaleX(1.086);transform-origin:100% 0;">700,00 €</div>
<div class="r" style="left:2387px;top:963px;width:116px;height:29px;background:#cdcdcd;"></div>
<div class="r" style="left:2389px;top:965px;width:113px;height:26px;background:#8fa0bc;"></div>
<div class="t" style="right:381.6999999999998px;top:978.63px;font-size:18.2px;font-weight:400;color:#000;transform:scaleX(1.086);transform-origin:100% 0;">1 100,00 €</div>
<div class="t" style="right:265.6999999999998px;top:978.63px;font-size:18.2px;font-weight:400;color:#000;transform:scaleX(1.086);transform-origin:100% 0;">2 300,00 €</div>
<div class="r" style="left:2502px;top:963px;width:117px;height:29px;background:#cdcdcd;"></div>
<div class="r" style="left:2504px;top:965px;width:113px;height:26px;background:#b3bac9;"></div>
<div class="t" style="right:265.6999999999998px;top:978.63px;font-size:18.2px;font-weight:400;color:#000;transform:scaleX(1.086);transform-origin:100% 0;">2 300,00 €</div>
<div class="r" style="left:2618px;top:963px;width:124px;height:29px;background:#cdcdcd;"></div>
<div class="r" style="left:2621px;top:965px;width:120px;height:26px;background:#b6c0ca;"></div>
<div class="t" style="right:142.69999999999982px;top:978.61px;font-size:19.7px;font-weight:400;color:#000;transform:scaleX(1.128);transform-origin:100% 0;-webkit-text-stroke:0.3px #000;">9 200,00 €</div>
<div class="t" style="left:116px;top:1007.96px;font-size:18.7px;font-weight:400;color:#000;transform:scaleX(0.957);transform-origin:0 0;">VARIANCE</div>
<div class="t" style="right:2167.7px;top:1007.63px;font-size:18.2px;font-weight:400;color:#000;transform:scaleX(1.086);transform-origin:100% 0;">-500,00 €</div>
<div class="t" style="right:2051.7px;top:1007.63px;font-size:18.2px;font-weight:400;color:#000;transform:scaleX(1.086);transform-origin:100% 0;">-300,00 €</div>
<div class="t" style="right:1936.7px;top:1007.63px;font-size:18.2px;font-weight:400;color:#000;transform:scaleX(1.086);transform-origin:100% 0;">100,00 €</div>
<div class="t" style="right:1765.7px;top:1007.63px;font-size:18.2px;font-weight:400;color:#000;transform:scaleX(1.086);transform-origin:100% 0;">-700,00 €</div>
<div class="t" style="right:1649.7px;top:1007.63px;font-size:18.2px;font-weight:400;color:#000;transform:scaleX(1.086);transform-origin:100% 0;">-500,00 €</div>
<div class="t" style="right:1534.7px;top:1007.63px;font-size:18.2px;font-weight:400;color:#000;transform:scaleX(1.086);transform-origin:100% 0;">-300,00 €</div>
<div class="t" style="right:1418.7px;top:1007.63px;font-size:18.2px;font-weight:400;color:#000;transform:scaleX(1.086);transform-origin:100% 0;">100,00 €</div>
<div class="t" style="right:1235.7px;top:1007.63px;font-size:18.2px;font-weight:400;color:#000;transform:scaleX(1.086);transform-origin:100% 0;">-700,00 €</div>
<div class="t" style="right:1119.7px;top:1007.63px;font-size:18.2px;font-weight:400;color:#000;transform:scaleX(1.086);transform-origin:100% 0;">-500,00 €</div>
<div class="t" style="right:1004.7px;top:1007.63px;font-size:18.2px;font-weight:400;color:#000;transform:scaleX(1.086);transform-origin:100% 0;">-300,00 €</div>
<div class="t" style="right:888.7px;top:1007.63px;font-size:18.2px;font-weight:400;color:#000;transform:scaleX(1.086);transform-origin:100% 0;">100,00 €</div>
<div class="t" style="right:728.6999999999998px;top:1007.63px;font-size:18.2px;font-weight:400;color:#000;transform:scaleX(1.086);transform-origin:100% 0;">-700,00 €</div>
<div class="t" style="right:612.6999999999998px;top:1007.63px;font-size:18.2px;font-weight:400;color:#000;transform:scaleX(1.086);transform-origin:100% 0;">-500,00 €</div>
<div class="t" style="right:496.6999999999998px;top:1007.63px;font-size:18.2px;font-weight:400;color:#000;transform:scaleX(1.086);transform-origin:100% 0;">-300,00 €</div>
<div class="t" style="right:381.6999999999998px;top:1007.63px;font-size:18.2px;font-weight:400;color:#000;transform:scaleX(1.086);transform-origin:100% 0;">100,00 €</div>
<div class="t" style="right:265.6999999999998px;top:1007.63px;font-size:18.2px;font-weight:400;color:#000;transform:scaleX(1.086);transform-origin:100% 0;">-700,00 €</div>
<div class="r" style="left:2502px;top:991px;width:117px;height:30px;background:#cdcdcd;"></div>
<div class="r" style="left:2504px;top:993px;width:113px;height:27px;background:#b3bac9;"></div>
<div class="t" style="right:265.6999999999998px;top:1007.63px;font-size:18.2px;font-weight:400;color:#000;transform:scaleX(1.086);transform-origin:100% 0;">-700,00 €</div>
<div class="r" style="left:2618px;top:991px;width:124px;height:30px;background:#cdcdcd;"></div>
<div class="r" style="left:2621px;top:993px;width:120px;height:27px;background:#b6c0ca;"></div>
<div class="t" style="right:142.69999999999982px;top:1007.61px;font-size:19.7px;font-weight:400;color:#000;transform:scaleX(1.128);transform-origin:100% 0;-webkit-text-stroke:0.3px #000;">-2 800,00 €</div>
<div class="t" style="left:116px;top:1035.95px;font-size:18.7px;font-weight:400;color:#000;transform:scaleX(0.91);transform-origin:0 0;">ANNÉE PRÉCÉDENTE RÉEL</div>
<div class="r" style="left:601px;top:1020px;width:116px;height:29px;background:#cdcdcd;"></div>
<div class="r" style="left:603px;top:1022px;width:113px;height:26px;background:#cfa68b;"></div>
<div class="t" style="right:2167.7px;top:1035.63px;font-size:18.2px;font-weight:400;color:#000;transform:scaleX(1.086);transform-origin:100% 0;">700,00 €</div>
<div class="r" style="left:716px;top:1020px;width:117px;height:29px;background:#cdcdcd;"></div>
<div class="r" style="left:718px;top:1022px;width:114px;height:26px;background:#cfa68b;"></div>
<div class="t" style="right:2051.7px;top:1035.63px;font-size:18.2px;font-weight:400;color:#000;transform:scaleX(1.086);transform-origin:100% 0;">1 100,00 €</div>
<div class="r" style="left:832px;top:1020px;width:116px;height:29px;background:#cdcdcd;"></div>
<div class="r" style="left:834px;top:1022px;width:113px;height:26px;background:#cfa68b;"></div>
<div class="t" style="right:1936.7px;top:1035.63px;font-size:18.2px;font-weight:400;color:#000;transform:scaleX(1.086);transform-origin:100% 0;">800,00 €</div>
<div class="t" style="right:1765.7px;top:1035.63px;font-size:18.2px;font-weight:400;color:#000;transform:scaleX(1.086);transform-origin:100% 0;">2 600,00 €</div>
<div class="r" style="left:1118px;top:1020px;width:117px;height:29px;background:#cdcdcd;"></div>
<div class="r" style="left:1121px;top:1022px;width:113px;height:26px;background:#acacac;"></div>
<div class="t" style="right:1649.7px;top:1035.63px;font-size:18.2px;font-weight:400;color:#000;transform:scaleX(1.086);transform-origin:100% 0;">700,00 €</div>
<div class="r" style="left:1234px;top:1020px;width:116px;height:29px;background:#cdcdcd;"></div>
<div class="r" style="left:1236px;top:1022px;width:113px;height:26px;background:#acacac;"></div>
<div class="t" style="right:1534.7px;top:1035.63px;font-size:18.2px;font-weight:400;color:#000;transform:scaleX(1.086);transform-origin:100% 0;">1 100,00 €</div>
<div class="r" style="left:1349px;top:1020px;width:117px;height:29px;background:#cdcdcd;"></div>
<div class="r" style="left:1351px;top:1022px;width:114px;height:26px;background:#acacac;"></div>
<div class="t" style="right:1418.7px;top:1035.63px;font-size:18.2px;font-weight:400;color:#000;transform:scaleX(1.086);transform-origin:100% 0;">800,00 €</div>
<div class="t" style="right:1235.7px;top:1035.63px;font-size:18.2px;font-weight:400;color:#000;transform:scaleX(1.086);transform-origin:100% 0;">2 600,00 €</div>
<div class="r" style="left:1648px;top:1020px;width:117px;height:29px;background:#cdcdcd;"></div>
<div class="r" style="left:1651px;top:1022px;width:113px;height:26px;background:#cdb782;"></div>
<div class="t" style="right:1119.7px;top:1035.63px;font-size:18.2px;font-weight:400;color:#000;transform:scaleX(1.086);transform-origin:100% 0;">700,00 €</div>
<div class="r" style="left:1764px;top:1020px;width:116px;height:29px;background:#cdcdcd;"></div>
<div class="r" style="left:1766px;top:1022px;width:113px;height:26px;background:#cdb782;"></div>
<div class="t" style="right:1004.7px;top:1035.63px;font-size:18.2px;font-weight:400;color:#000;transform:scaleX(1.086);transform-origin:100% 0;">1 100,00 €</div>
<div class="r" style="left:1879px;top:1020px;width:117px;height:29px;background:#cdcdcd;"></div>
<div class="r" style="left:1881px;top:1022px;width:114px;height:26px;background:#cdb782;"></div>
<div class="t" style="right:888.7px;top:1035.63px;font-size:18.2px;font-weight:400;color:#000;transform:scaleX(1.086);transform-origin:100% 0;">800,00 €</div>
<div class="t" style="right:728.6999999999998px;top:1035.63px;font-size:18.2px;font-weight:400;color:#000;transform:scaleX(1.086);transform-origin:100% 0;">2 600,00 €</div>
<div class="r" style="left:2155px;top:1020px;width:117px;height:29px;background:#cdcdcd;"></div>
<div class="r" style="left:2158px;top:1022px;width:113px;height:26px;background:#8fa0bc;"></div>
<div class="t" style="right:612.6999999999998px;top:1035.63px;font-size:18.2px;font-weight:400;color:#000;transform:scaleX(1.086);transform-origin:100% 0;">700,00 €</div>
<div class="r" style="left:2271px;top:1020px;width:117px;height:29px;background:#cdcdcd;"></div>
<div class="r" style="left:2273px;top:1022px;width:114px;height:26px;background:#8fa0bc;"></div>
<div class="t" style="right:496.6999999999998px;top:1035.63px;font-size:18.2px;font-weight:400;color:#000;transform:scaleX(1.086);transform-origin:100% 0;">1 100,00 €</div>
<div class="r" style="left:2387px;top:1020px;width:116px;height:29px;background:#cdcdcd;"></div>
<div class="r" style="left:2389px;top:1022px;width:113px;height:26px;background:#8fa0bc;"></div>
<div class="t" style="right:381.6999999999998px;top:1035.63px;font-size:18.2px;font-weight:400;color:#000;transform:scaleX(1.086);transform-origin:100% 0;">800,00 €</div>
<div class="t" style="right:265.6999999999998px;top:1035.63px;font-size:18.2px;font-weight:400;color:#000;transform:scaleX(1.086);transform-origin:100% 0;">2 600,00 €</div>
<div class="r" style="left:2502px;top:1020px;width:117px;height:29px;background:#cdcdcd;"></div>
<div class="r" style="left:2504px;top:1022px;width:113px;height:26px;background:#b3bac9;"></div>
<div class="t" style="right:265.6999999999998px;top:1035.63px;font-size:18.2px;font-weight:400;color:#000;transform:scaleX(1.086);transform-origin:100% 0;">2 600,00 €</div>
<div class="r" style="left:2618px;top:1020px;width:124px;height:29px;background:#cdcdcd;"></div>
<div class="r" style="left:2621px;top:1022px;width:120px;height:26px;background:#b6c0ca;"></div>
<div class="t" style="right:142.69999999999982px;top:1035.61px;font-size:19.7px;font-weight:400;color:#000;transform:scaleX(1.128);transform-origin:100% 0;-webkit-text-stroke:0.3px #000;">10 400,00 €</div>
<div class="t" style="left:116px;top:1064.95px;font-size:18.7px;font-weight:400;color:#000;transform:scaleX(0.934);transform-origin:0 0;">ÉCART DE L’ANNÉE PRÉCÉDENTE</div>
<div class="t" style="right:2167.7px;top:1064.63px;font-size:18.2px;font-weight:400;color:#000;transform:scaleX(1.086);transform-origin:100% 0;">-200,00 €</div>
<div class="t" style="right:2051.7px;top:1064.63px;font-size:18.2px;font-weight:400;color:#000;transform:scaleX(1.086);transform-origin:100% 0;">-400,00 €</div>
<div class="t" style="right:1936.7px;top:1064.63px;font-size:18.2px;font-weight:400;color:#000;transform:scaleX(1.086);transform-origin:100% 0;">300,00 €</div>
<div class="t" style="right:1765.7px;top:1064.63px;font-size:18.2px;font-weight:400;color:#000;transform:scaleX(1.086);transform-origin:100% 0;">-300,00 €</div>
<div class="t" style="right:1649.7px;top:1064.63px;font-size:18.2px;font-weight:400;color:#000;transform:scaleX(1.086);transform-origin:100% 0;">-200,00 €</div>
<div class="t" style="right:1534.7px;top:1064.63px;font-size:18.2px;font-weight:400;color:#000;transform:scaleX(1.086);transform-origin:100% 0;">-400,00 €</div>
<div class="t" style="right:1418.7px;top:1064.63px;font-size:18.2px;font-weight:400;color:#000;transform:scaleX(1.086);transform-origin:100% 0;">300,00 €</div>
<div class="t" style="right:1235.7px;top:1064.63px;font-size:18.2px;font-weight:400;color:#000;transform:scaleX(1.086);transform-origin:100% 0;">-300,00 €</div>
<div class="t" style="right:1119.7px;top:1064.63px;font-size:18.2px;font-weight:400;color:#000;transform:scaleX(1.086);transform-origin:100% 0;">-200,00 €</div>
<div class="t" style="right:1004.7px;top:1064.63px;font-size:18.2px;font-weight:400;color:#000;transform:scaleX(1.086);transform-origin:100% 0;">-400,00 €</div>
<div class="t" style="right:888.7px;top:1064.63px;font-size:18.2px;font-weight:400;color:#000;transform:scaleX(1.086);transform-origin:100% 0;">300,00 €</div>
<div class="t" style="right:728.6999999999998px;top:1064.63px;font-size:18.2px;font-weight:400;color:#000;transform:scaleX(1.086);transform-origin:100% 0;">-300,00 €</div>
<div class="r" style="left:2155px;top:1048px;width:117px;height:30px;background:#cdcdcd;"></div>
<div class="r" style="left:2158px;top:1050px;width:113px;height:27px;background:#b3bac9;"></div>
<div class="t" style="right:612.6999999999998px;top:1064.63px;font-size:18.2px;font-weight:400;color:#000;transform:scaleX(1.086);transform-origin:100% 0;">-200,00 €</div>
<div class="r" style="left:2271px;top:1048px;width:117px;height:30px;background:#cdcdcd;"></div>
<div class="r" style="left:2273px;top:1050px;width:114px;height:27px;background:#b3bac9;"></div>
<div class="t" style="right:496.6999999999998px;top:1064.63px;font-size:18.2px;font-weight:400;color:#000;transform:scaleX(1.086);transform-origin:100% 0;">-400,00 €</div>
<div class="r" style="left:2387px;top:1048px;width:116px;height:30px;background:#cdcdcd;"></div>
<div class="r" style="left:2389px;top:1050px;width:113px;height:27px;background:#b3bac9;"></div>
<div class="t" style="right:381.6999999999998px;top:1064.63px;font-size:18.2px;font-weight:400;color:#000;transform:scaleX(1.086);transform-origin:100% 0;">300,00 €</div>
<div class="t" style="right:265.6999999999998px;top:1064.63px;font-size:18.2px;font-weight:400;color:#000;transform:scaleX(1.086);transform-origin:100% 0;">-300,00 €</div>
<div class="r" style="left:2502px;top:1048px;width:117px;height:30px;background:#cdcdcd;"></div>
<div class="r" style="left:2504px;top:1050px;width:113px;height:27px;background:#b3bac9;"></div>
<div class="t" style="right:265.6999999999998px;top:1064.63px;font-size:18.2px;font-weight:400;color:#000;transform:scaleX(1.086);transform-origin:100% 0;">-300,00 €</div>
<div class="r" style="left:2618px;top:1048px;width:124px;height:30px;background:#cdcdcd;"></div>
<div class="r" style="left:2621px;top:1050px;width:120px;height:27px;background:#b6c0ca;"></div>
<div class="t" style="right:142.69999999999982px;top:1064.61px;font-size:19.7px;font-weight:400;color:#000;transform:scaleX(1.128);transform-origin:100% 0;-webkit-text-stroke:0.3px #000;">-1 200,00 €</div>
<div class="r" style="left:98px;top:1077px;width:504px;height:29px;background:#cdcdcd;"></div>
<div class="r" style="left:100px;top:1079px;width:501px;height:26px;background:#b4bec8;"></div>
<div class="t" style="left:116px;top:1091.40px;font-size:21.7px;font-weight:700;color:#000;transform:scaleX(0.897);transform-origin:0 0;">IMMOBILISATIONS NETTES</div>
<div class="t" style="left:116px;top:1121.95px;font-size:18.7px;font-weight:400;color:#000;transform:scaleX(0.913);transform-origin:0 0;">BUDGET</div>
<div class="r" style="left:601px;top:1105px;width:116px;height:30px;background:#cdcdcd;"></div>
<div class="r" style="left:603px;top:1107px;width:113px;height:27px;background:#cfa68b;"></div>
<div class="t" style="right:2167.7px;top:1121.63px;font-size:18.2px;font-weight:400;color:#000;transform:scaleX(1.086);transform-origin:100% 0;">1 000,00 €</div>
<div class="r" style="left:716px;top:1105px;width:117px;height:30px;background:#cdcdcd;"></div>
<div class="r" style="left:718px;top:1107px;width:114px;height:27px;background:#cfa68b;"></div>
<div class="t" style="right:2051.7px;top:1121.63px;font-size:18.2px;font-weight:400;color:#000;transform:scaleX(1.086);transform-origin:100% 0;">1 000,00 €</div>
<div class="r" style="left:832px;top:1105px;width:116px;height:30px;background:#cdcdcd;"></div>
<div class="r" style="left:834px;top:1107px;width:113px;height:27px;background:#cfa68b;"></div>
<div class="t" style="right:1936.7px;top:1121.63px;font-size:18.2px;font-weight:400;color:#000;transform:scaleX(1.086);transform-origin:100% 0;">1 000,00 €</div>
<div class="t" style="right:1765.7px;top:1121.63px;font-size:18.2px;font-weight:400;color:#000;transform:scaleX(1.086);transform-origin:100% 0;">3 000,00 €</div>
<div class="r" style="left:1118px;top:1105px;width:117px;height:30px;background:#cdcdcd;"></div>
<div class="r" style="left:1121px;top:1107px;width:113px;height:27px;background:#acacac;"></div>
<div class="t" style="right:1649.7px;top:1121.63px;font-size:18.2px;font-weight:400;color:#000;transform:scaleX(1.086);transform-origin:100% 0;">1 000,00 €</div>
<div class="r" style="left:1234px;top:1105px;width:116px;height:30px;background:#cdcdcd;"></div>
<div class="r" style="left:1236px;top:1107px;width:113px;height:27px;background:#acacac;"></div>
<div class="t" style="right:1534.7px;top:1121.63px;font-size:18.2px;font-weight:400;color:#000;transform:scaleX(1.086);transform-origin:100% 0;">1 000,00 €</div>
<div class="r" style="left:1349px;top:1105px;width:117px;height:30px;background:#cdcdcd;"></div>
<div class="r" style="left:1351px;top:1107px;width:114px;height:27px;background:#acacac;"></div>
<div class="t" style="right:1418.7px;top:1121.63px;font-size:18.2px;font-weight:400;color:#000;transform:scaleX(1.086);transform-origin:100% 0;">1 000,00 €</div>
<div class="t" style="right:1235.7px;top:1121.63px;font-size:18.2px;font-weight:400;color:#000;transform:scaleX(1.086);transform-origin:100% 0;">3 000,00 €</div>
<div class="r" style="left:1648px;top:1105px;width:117px;height:30px;background:#cdcdcd;"></div>
<div class="r" style="left:1651px;top:1107px;width:113px;height:27px;background:#cdb782;"></div>
<div class="t" style="right:1119.7px;top:1121.63px;font-size:18.2px;font-weight:400;color:#000;transform:scaleX(1.086);transform-origin:100% 0;">1 000,00 €</div>
<div class="r" style="left:1764px;top:1105px;width:116px;height:30px;background:#cdcdcd;"></div>
<div class="r" style="left:1766px;top:1107px;width:113px;height:27px;background:#cdb782;"></div>
<div class="t" style="right:1004.7px;top:1121.63px;font-size:18.2px;font-weight:400;color:#000;transform:scaleX(1.086);transform-origin:100% 0;">1 000,00 €</div>
<div class="r" style="left:1879px;top:1105px;width:117px;height:30px;background:#cdcdcd;"></div>
<div class="r" style="left:1881px;top:1107px;width:114px;height:27px;background:#cdb782;"></div>
<div class="t" style="right:888.7px;top:1121.63px;font-size:18.2px;font-weight:400;color:#000;transform:scaleX(1.086);transform-origin:100% 0;">1 000,00 €</div>
<div class="t" style="right:728.6999999999998px;top:1121.63px;font-size:18.2px;font-weight:400;color:#000;transform:scaleX(1.086);transform-origin:100% 0;">3 000,00 €</div>
<div class="r" style="left:2155px;top:1105px;width:117px;height:30px;background:#cdcdcd;"></div>
<div class="r" style="left:2158px;top:1107px;width:113px;height:27px;background:#8fa0bc;"></div>
<div class="t" style="right:612.6999999999998px;top:1121.63px;font-size:18.2px;font-weight:400;color:#000;transform:scaleX(1.086);transform-origin:100% 0;">1 000,00 €</div>
<div class="r" style="left:2271px;top:1105px;width:117px;height:30px;background:#cdcdcd;"></div>
<div class="r" style="left:2273px;top:1107px;width:114px;height:27px;background:#8fa0bc;"></div>
<div class="t" style="right:496.6999999999998px;top:1121.63px;font-size:18.2px;font-weight:400;color:#000;transform:scaleX(1.086);transform-origin:100% 0;">1 000,00 €</div>
<div class="r" style="left:2387px;top:1105px;width:116px;height:30px;background:#cdcdcd;"></div>
<div class="r" style="left:2389px;top:1107px;width:113px;height:27px;background:#8fa0bc;"></div>
<div class="t" style="right:381.6999999999998px;top:1121.63px;font-size:18.2px;font-weight:400;color:#000;transform:scaleX(1.086);transform-origin:100% 0;">1 000,00 €</div>
<div class="t" style="right:265.6999999999998px;top:1121.63px;font-size:18.2px;font-weight:400;color:#000;transform:scaleX(1.086);transform-origin:100% 0;">3 000,00 €</div>
<div class="r" style="left:2502px;top:1105px;width:117px;height:30px;background:#cdcdcd;"></div>
<div class="r" style="left:2504px;top:1107px;width:113px;height:27px;background:#b3bac9;"></div>
<div class="t" style="right:265.6999999999998px;top:1121.63px;font-size:18.2px;font-weight:400;color:#000;transform:scaleX(1.086);transform-origin:100% 0;">3 000,00 €</div>
<div class="r" style="left:2618px;top:1105px;width:124px;height:30px;background:#cdcdcd;"></div>
<div class="r" style="left:2621px;top:1107px;width:120px;height:27px;background:#b6c0ca;"></div>
<div class="t" style="right:142.69999999999982px;top:1121.61px;font-size:19.7px;font-weight:400;color:#000;transform:scaleX(1.128);transform-origin:100% 0;-webkit-text-stroke:0.3px #000;">12 000,00 €</div>
<div class="t" style="left:116px;top:1149.95px;font-size:18.7px;font-weight:400;color:#000;transform:scaleX(0.867);transform-origin:0 0;">RÉEL</div>
<div class="r" style="left:601px;top:1134px;width:116px;height:29px;background:#cdcdcd;"></div>
<div class="r" style="left:603px;top:1136px;width:113px;height:26px;background:#cfa68b;"></div>
<div class="t" style="right:2167.7px;top:1149.63px;font-size:18.2px;font-weight:400;color:#000;transform:scaleX(1.086);transform-origin:100% 0;">500,00 €</div>
<div class="r" style="left:716px;top:1134px;width:117px;height:29px;background:#cdcdcd;"></div>
<div class="r" style="left:718px;top:1136px;width:114px;height:26px;background:#cfa68b;"></div>
<div class="t" style="right:2051.7px;top:1149.63px;font-size:18.2px;font-weight:400;color:#000;transform:scaleX(1.086);transform-origin:100% 0;">700,00 €</div>
<div class="r" style="left:832px;top:1134px;width:116px;height:29px;background:#cdcdcd;"></div>
<div class="r" style="left:834px;top:1136px;width:113px;height:26px;background:#cfa68b;"></div>
<div class="t" style="right:1936.7px;top:1149.63px;font-size:18.2px;font-weight:400;color:#000;transform:scaleX(1.086);transform-origin:100% 0;">1 100,00 €</div>
<div class="t" style="right:1765.7px;top:1149.63px;font-size:18.2px;font-weight:400;color:#000;transform:scaleX(1.086);transform-origin:100% 0;">2 300,00 €</div>
<div class="r" style="left:1118px;top:1134px;width:117px;height:29px;background:#cdcdcd;"></div>
<div class="r" style="left:1121px;top:1136px;width:113px;height:26px;background:#acacac;"></div>
<div class="t" style="right:1649.7px;top:1149.63px;font-size:18.2px;font-weight:400;color:#000;transform:scaleX(1.086);transform-origin:100% 0;">500,00 €</div>
<div class="r" style="left:1234px;top:1134px;width:116px;height:29px;background:#cdcdcd;"></div>
<div class="r" style="left:1236px;top:1136px;width:113px;height:26px;background:#acacac;"></div>
<div class="t" style="right:1534.7px;top:1149.63px;font-size:18.2px;font-weight:400;color:#000;transform:scaleX(1.086);transform-origin:100% 0;">700,00 €</div>
<div class="r" style="left:1349px;top:1134px;width:117px;height:29px;background:#cdcdcd;"></div>
<div class="r" style="left:1351px;top:1136px;width:114px;height:26px;background:#acacac;"></div>
<div class="t" style="right:1418.7px;top:1149.63px;font-size:18.2px;font-weight:400;color:#000;transform:scaleX(1.086);transform-origin:100% 0;">1 100,00 €</div>
<div class="t" style="right:1235.7px;top:1149.63px;font-size:18.2px;font-weight:400;color:#000;transform:scaleX(1.086);transform-origin:100% 0;">2 300,00 €</div>
<div class="r" style="left:1648px;top:1134px;width:117px;height:29px;background:#cdcdcd;"></div>
<div class="r" style="left:1651px;top:1136px;width:113px;height:26px;background:#cdb782;"></div>
<div class="t" style="right:1119.7px;top:1149.63px;font-size:18.2px;font-weight:400;color:#000;transform:scaleX(1.086);transform-origin:100% 0;">500,00 €</div>
<div class="r" style="left:1764px;top:1134px;width:116px;height:29px;background:#cdcdcd;"></div>
<div class="r" style="left:1766px;top:1136px;width:113px;height:26px;background:#cdb782;"></div>
<div class="t" style="right:1004.7px;top:1149.63px;font-size:18.2px;font-weight:400;color:#000;transform:scaleX(1.086);transform-origin:100% 0;">700,00 €</div>
<div class="r" style="left:1879px;top:1134px;width:117px;height:29px;background:#cdcdcd;"></div>
<div class="r" style="left:1881px;top:1136px;width:114px;height:26px;background:#cdb782;"></div>
<div class="t" style="right:888.7px;top:1149.63px;font-size:18.2px;font-weight:400;color:#000;transform:scaleX(1.086);transform-origin:100% 0;">1 100,00 €</div>
<div class="t" style="right:728.6999999999998px;top:1149.63px;font-size:18.2px;font-weight:400;color:#000;transform:scaleX(1.086);transform-origin:100% 0;">2 300,00 €</div>
<div class="r" style="left:2155px;top:1134px;width:117px;height:29px;background:#cdcdcd;"></div>
<div class="r" style="left:2158px;top:1136px;width:113px;height:26px;background:#8fa0bc;"></div>
<div class="t" style="right:612.6999999999998px;top:1149.63px;font-size:18.2px;font-weight:400;color:#000;transform:scaleX(1.086);transform-origin:100% 0;">500,00 €</div>
<div class="r" style="left:2271px;top:1134px;width:117px;height:29px;background:#cdcdcd;"></div>
<div class="r" style="left:2273px;top:1136px;width:114px;height:26px;background:#8fa0bc;"></div>
<div class="t" style="right:496.6999999999998px;top:1149.63px;font-size:18.2px;font-weight:400;color:#000;transform:scaleX(1.086);transform-origin:100% 0;">700,00 €</div>
<div class="r" style="left:2387px;top:1134px;width:116px;height:29px;background:#cdcdcd;"></div>
<div class="r" style="left:2389px;top:1136px;width:113px;height:26px;background:#8fa0bc;"></div>
<div class="t" style="right:381.6999999999998px;top:1149.63px;font-size:18.2px;font-weight:400;color:#000;transform:scaleX(1.086);transform-origin:100% 0;">1 100,00 €</div>
<div class="t" style="right:265.6999999999998px;top:1149.63px;font-size:18.2px;font-weight:400;color:#000;transform:scaleX(1.086);transform-origin:100% 0;">2 300,00 €</div>
<div class="r" style="left:2502px;top:1134px;width:117px;height:29px;background:#cdcdcd;"></div>
<div class="r" style="left:2504px;top:1136px;width:113px;height:26px;background:#b3bac9;"></div>
<div class="t" style="right:265.6999999999998px;top:1149.63px;font-size:18.2px;font-weight:400;color:#000;transform:scaleX(1.086);transform-origin:100% 0;">2 300,00 €</div>
<div class="r" style="left:2618px;top:1134px;width:124px;height:29px;background:#cdcdcd;"></div>
<div class="r" style="left:2621px;top:1136px;width:120px;height:26px;background:#b6c0ca;"></div>
<div class="t" style="right:142.69999999999982px;top:1149.61px;font-size:19.7px;font-weight:400;color:#000;transform:scaleX(1.128);transform-origin:100% 0;-webkit-text-stroke:0.3px #000;">9 200,00 €</div>
<div class="t" style="left:116px;top:1178.95px;font-size:18.7px;font-weight:400;color:#000;transform:scaleX(0.957);transform-origin:0 0;">VARIANCE</div>
<div class="t" style="right:2167.7px;top:1178.63px;font-size:18.2px;font-weight:400;color:#000;transform:scaleX(1.086);transform-origin:100% 0;">-500,00 €</div>
<div class="t" style="right:2051.7px;top:1178.63px;font-size:18.2px;font-weight:400;color:#000;transform:scaleX(1.086);transform-origin:100% 0;">-300,00 €</div>
<div class="t" style="right:1936.7px;top:1178.63px;font-size:18.2px;font-weight:400;color:#000;transform:scaleX(1.086);transform-origin:100% 0;">100,00 €</div>
<div class="t" style="right:1765.7px;top:1178.63px;font-size:18.2px;font-weight:400;color:#000;transform:scaleX(1.086);transform-origin:100% 0;">-700,00 €</div>
<div class="t" style="right:1649.7px;top:1178.63px;font-size:18.2px;font-weight:400;color:#000;transform:scaleX(1.086);transform-origin:100% 0;">-500,00 €</div>
<div class="t" style="right:1534.7px;top:1178.63px;font-size:18.2px;font-weight:400;color:#000;transform:scaleX(1.086);transform-origin:100% 0;">-300,00 €</div>
<div class="t" style="right:1418.7px;top:1178.63px;font-size:18.2px;font-weight:400;color:#000;transform:scaleX(1.086);transform-origin:100% 0;">100,00 €</div>
<div class="t" style="right:1235.7px;top:1178.63px;font-size:18.2px;font-weight:400;color:#000;transform:scaleX(1.086);transform-origin:100% 0;">-700,00 €</div>
<div class="t" style="right:1119.7px;top:1178.63px;font-size:18.2px;font-weight:400;color:#000;transform:scaleX(1.086);transform-origin:100% 0;">-500,00 €</div>
<div class="t" style="right:1004.7px;top:1178.63px;font-size:18.2px;font-weight:400;color:#000;transform:scaleX(1.086);transform-origin:100% 0;">-300,00 €</div>
<div class="t" style="right:888.7px;top:1178.63px;font-size:18.2px;font-weight:400;color:#000;transform:scaleX(1.086);transform-origin:100% 0;">100,00 €</div>
<div class="t" style="right:728.6999999999998px;top:1178.63px;font-size:18.2px;font-weight:400;color:#000;transform:scaleX(1.086);transform-origin:100% 0;">-700,00 €</div>
<div class="t" style="right:612.6999999999998px;top:1178.63px;font-size:18.2px;font-weight:400;color:#000;transform:scaleX(1.086);transform-origin:100% 0;">-500,00 €</div>
<div class="t" style="right:496.6999999999998px;top:1178.63px;font-size:18.2px;font-weight:400;color:#000;transform:scaleX(1.086);transform-origin:100% 0;">-300,00 €</div>
<div class="t" style="right:381.6999999999998px;top:1178.63px;font-size:18.2px;font-weight:400;color:#000;transform:scaleX(1.086);transform-origin:100% 0;">100,00 €</div>
<div class="t" style="right:265.6999999999998px;top:1178.63px;font-size:18.2px;font-weight:400;color:#000;transform:scaleX(1.086);transform-origin:100% 0;">-700,00 €</div>
<div class="r" style="left:2502px;top:1162px;width:117px;height:30px;background:#cdcdcd;"></div>
<div class="r" style="left:2504px;top:1164px;width:113px;height:27px;background:#b3bac9;"></div>
<div class="t" style="right:265.6999999999998px;top:1178.63px;font-size:18.2px;font-weight:400;color:#000;transform:scaleX(1.086);transform-origin:100% 0;">-700,00 €</div>
<div class="r" style="left:2618px;top:1162px;width:124px;height:30px;background:#cdcdcd;"></div>
<div class="r" style="left:2621px;top:1164px;width:120px;height:27px;background:#b6c0ca;"></div>
<div class="t" style="right:142.69999999999982px;top:1178.61px;font-size:19.7px;font-weight:400;color:#000;transform:scaleX(1.128);transform-origin:100% 0;-webkit-text-stroke:0.3px #000;">-2 800,00 €</div>
<div class="t" style="left:116px;top:1206.95px;font-size:18.7px;font-weight:400;color:#000;transform:scaleX(0.91);transform-origin:0 0;">ANNÉE PRÉCÉDENTE RÉEL</div>
<div class="r" style="left:601px;top:1191px;width:116px;height:29px;background:#cdcdcd;"></div>
<div class="r" style="left:603px;top:1193px;width:113px;height:26px;background:#cfa68b;"></div>
<div class="t" style="right:2167.7px;top:1206.63px;font-size:18.2px;font-weight:400;color:#000;transform:scaleX(1.086);transform-origin:100% 0;">700,00 €</div>
<div class="r" style="left:716px;top:1191px;width:117px;height:29px;background:#cdcdcd;"></div>
<div class="r" style="left:718px;top:1193px;width:114px;height:26px;background:#cfa68b;"></div>
<div class="t" style="right:2051.7px;top:1206.63px;font-size:18.2px;font-weight:400;color:#000;transform:scaleX(1.086);transform-origin:100% 0;">1 100,00 €</div>
<div class="r" style="left:832px;top:1191px;width:116px;height:29px;background:#cdcdcd;"></div>
<div class="r" style="left:834px;top:1193px;width:113px;height:26px;background:#cfa68b;"></div>
<div class="t" style="right:1936.7px;top:1206.63px;font-size:18.2px;font-weight:400;color:#000;transform:scaleX(1.086);transform-origin:100% 0;">800,00 €</div>
<div class="t" style="right:1765.7px;top:1206.63px;font-size:18.2px;font-weight:400;color:#000;transform:scaleX(1.086);transform-origin:100% 0;">2 600,00 €</div>
<div class="r" style="left:1118px;top:1191px;width:117px;height:29px;background:#cdcdcd;"></div>
<div class="r" style="left:1121px;top:1193px;width:113px;height:26px;background:#acacac;"></div>
<div class="t" style="right:1649.7px;top:1206.63px;font-size:18.2px;font-weight:400;color:#000;transform:scaleX(1.086);transform-origin:100% 0;">700,00 €</div>
<div class="r" style="left:1234px;top:1191px;width:116px;height:29px;background:#cdcdcd;"></div>
<div class="r" style="left:1236px;top:1193px;width:113px;height:26px;background:#acacac;"></div>
<div class="t" style="right:1534.7px;top:1206.63px;font-size:18.2px;font-weight:400;color:#000;transform:scaleX(1.086);transform-origin:100% 0;">1 100,00 €</div>
<div class="r" style="left:1349px;top:1191px;width:117px;height:29px;background:#cdcdcd;"></div>
<div class="r" style="left:1351px;top:1193px;width:114px;height:26px;background:#acacac;"></div>
<div class="t" style="right:1418.7px;top:1206.63px;font-size:18.2px;font-weight:400;color:#000;transform:scaleX(1.086);transform-origin:100% 0;">800,00 €</div>
<div class="t" style="right:1235.7px;top:1206.63px;font-size:18.2px;font-weight:400;color:#000;transform:scaleX(1.086);transform-origin:100% 0;">2 600,00 €</div>
<div class="r" style="left:1648px;top:1191px;width:117px;height:29px;background:#cdcdcd;"></div>
<div class="r" style="left:1651px;top:1193px;width:113px;height:26px;background:#cdb782;"></div>
<div class="t" style="right:1119.7px;top:1206.63px;font-size:18.2px;font-weight:400;color:#000;transform:scaleX(1.086);transform-origin:100% 0;">700,00 €</div>
<div class="r" style="left:1764px;top:1191px;width:116px;height:29px;background:#cdcdcd;"></div>
<div class="r" style="left:1766px;top:1193px;width:113px;height:26px;background:#cdb782;"></div>
<div class="t" style="right:1004.7px;top:1206.63px;font-size:18.2px;font-weight:400;color:#000;transform:scaleX(1.086);transform-origin:100% 0;">1 100,00 €</div>
<div class="r" style="left:1879px;top:1191px;width:117px;height:29px;background:#cdcdcd;"></div>
<div class="r" style="left:1881px;top:1193px;width:114px;height:26px;background:#cdb782;"></div>
<div class="t" style="right:888.7px;top:1206.63px;font-size:18.2px;font-weight:400;color:#000;transform:scaleX(1.086);transform-origin:100% 0;">800,00 €</div>
<div class="t" style="right:728.6999999999998px;top:1206.63px;font-size:18.2px;font-weight:400;color:#000;transform:scaleX(1.086);transform-origin:100% 0;">2 600,00 €</div>
<div class="r" style="left:2155px;top:1191px;width:117px;height:29px;background:#cdcdcd;"></div>
<div class="r" style="left:2158px;top:1193px;width:113px;height:26px;background:#8fa0bc;"></div>
<div class="t" style="right:612.6999999999998px;top:1206.63px;font-size:18.2px;font-weight:400;color:#000;transform:scaleX(1.086);transform-origin:100% 0;">700,00 €</div>
<div class="r" style="left:2271px;top:1191px;width:117px;height:29px;background:#cdcdcd;"></div>
<div class="r" style="left:2273px;top:1193px;width:114px;height:26px;background:#8fa0bc;"></div>
<div class="t" style="right:496.6999999999998px;top:1206.63px;font-size:18.2px;font-weight:400;color:#000;transform:scaleX(1.086);transform-origin:100% 0;">1 100,00 €</div>
<div class="r" style="left:2387px;top:1191px;width:116px;height:29px;background:#cdcdcd;"></div>
<div class="r" style="left:2389px;top:1193px;width:113px;height:26px;background:#8fa0bc;"></div>
<div class="t" style="right:381.6999999999998px;top:1206.63px;font-size:18.2px;font-weight:400;color:#000;transform:scaleX(1.086);transform-origin:100% 0;">800,00 €</div>
<div class="t" style="right:265.6999999999998px;top:1206.63px;font-size:18.2px;font-weight:400;color:#000;transform:scaleX(1.086);transform-origin:100% 0;">2 600,00 €</div>
<div class="r" style="left:2502px;top:1191px;width:117px;height:29px;background:#cdcdcd;"></div>
<div class="r" style="left:2504px;top:1193px;width:113px;height:26px;background:#b3bac9;"></div>
<div class="t" style="right:265.6999999999998px;top:1206.63px;font-size:18.2px;font-weight:400;color:#000;transform:scaleX(1.086);transform-origin:100% 0;">2 600,00 €</div>
<div class="r" style="left:2618px;top:1191px;width:124px;height:29px;background:#cdcdcd;"></div>
<div class="r" style="left:2621px;top:1193px;width:120px;height:26px;background:#b6c0ca;"></div>
<div class="t" style="right:142.69999999999982px;top:1206.61px;font-size:19.7px;font-weight:400;color:#000;transform:scaleX(1.128);transform-origin:100% 0;-webkit-text-stroke:0.3px #000;">10 400,00 €</div>
<div class="t" style="left:116px;top:1235.95px;font-size:18.7px;font-weight:400;color:#000;transform:scaleX(0.934);transform-origin:0 0;">ÉCART DE L’ANNÉE PRÉCÉDENTE</div>
<div class="t" style="right:2167.7px;top:1235.63px;font-size:18.2px;font-weight:400;color:#000;transform:scaleX(1.086);transform-origin:100% 0;">-200,00 €</div>
<div class="t" style="right:2051.7px;top:1235.63px;font-size:18.2px;font-weight:400;color:#000;transform:scaleX(1.086);transform-origin:100% 0;">-400,00 €</div>
<div class="t" style="right:1936.7px;top:1235.63px;font-size:18.2px;font-weight:400;color:#000;transform:scaleX(1.086);transform-origin:100% 0;">300,00 €</div>
<div class="t" style="right:1765.7px;top:1235.63px;font-size:18.2px;font-weight:400;color:#000;transform:scaleX(1.086);transform-origin:100% 0;">-300,00 €</div>
<div class="t" style="right:1649.7px;top:1235.63px;font-size:18.2px;font-weight:400;color:#000;transform:scaleX(1.086);transform-origin:100% 0;">-200,00 €</div>
<div class="t" style="right:1534.7px;top:1235.63px;font-size:18.2px;font-weight:400;color:#000;transform:scaleX(1.086);transform-origin:100% 0;">-400,00 €</div>
<div class="t" style="right:1418.7px;top:1235.63px;font-size:18.2px;font-weight:400;color:#000;transform:scaleX(1.086);transform-origin:100% 0;">300,00 €</div>
<div class="t" style="right:1235.7px;top:1235.63px;font-size:18.2px;font-weight:400;color:#000;transform:scaleX(1.086);transform-origin:100% 0;">-300,00 €</div>
<div class="t" style="right:1119.7px;top:1235.63px;font-size:18.2px;font-weight:400;color:#000;transform:scaleX(1.086);transform-origin:100% 0;">-200,00 €</div>
<div class="t" style="right:1004.7px;top:1235.63px;font-size:18.2px;font-weight:400;color:#000;transform:scaleX(1.086);transform-origin:100% 0;">-400,00 €</div>
<div class="t" style="right:888.7px;top:1235.63px;font-size:18.2px;font-weight:400;color:#000;transform:scaleX(1.086);transform-origin:100% 0;">300,00 €</div>
<div class="t" style="right:728.6999999999998px;top:1235.63px;font-size:18.2px;font-weight:400;color:#000;transform:scaleX(1.086);transform-origin:100% 0;">-300,00 €</div>
<div class="r" style="left:2155px;top:1219px;width:117px;height:30px;background:#cdcdcd;"></div>
<div class="r" style="left:2158px;top:1221px;width:113px;height:27px;background:#b3bac9;"></div>
<div class="t" style="right:612.6999999999998px;top:1235.63px;font-size:18.2px;font-weight:400;color:#000;transform:scaleX(1.086);transform-origin:100% 0;">-200,00 €</div>
<div class="r" style="left:2271px;top:1219px;width:117px;height:30px;background:#cdcdcd;"></div>
<div class="r" style="left:2273px;top:1221px;width:114px;height:27px;background:#b3bac9;"></div>
<div class="t" style="right:496.6999999999998px;top:1235.63px;font-size:18.2px;font-weight:400;color:#000;transform:scaleX(1.086);transform-origin:100% 0;">-400,00 €</div>
<div class="r" style="left:2387px;top:1219px;width:116px;height:30px;background:#cdcdcd;"></div>
<div class="r" style="left:2389px;top:1221px;width:113px;height:27px;background:#b3bac9;"></div>
<div class="t" style="right:381.6999999999998px;top:1235.63px;font-size:18.2px;font-weight:400;color:#000;transform:scaleX(1.086);transform-origin:100% 0;">300,00 €</div>
<div class="t" style="right:265.6999999999998px;top:1235.63px;font-size:18.2px;font-weight:400;color:#000;transform:scaleX(1.086);transform-origin:100% 0;">-300,00 €</div>
<div class="r" style="left:2502px;top:1219px;width:117px;height:30px;background:#cdcdcd;"></div>
<div class="r" style="left:2504px;top:1221px;width:113px;height:27px;background:#b3bac9;"></div>
<div class="t" style="right:265.6999999999998px;top:1235.63px;font-size:18.2px;font-weight:400;color:#000;transform:scaleX(1.086);transform-origin:100% 0;">-300,00 €</div>
<div class="r" style="left:2618px;top:1219px;width:124px;height:30px;background:#cdcdcd;"></div>
<div class="r" style="left:2621px;top:1221px;width:120px;height:27px;background:#b6c0ca;"></div>
<div class="t" style="right:142.69999999999982px;top:1235.61px;font-size:19.7px;font-weight:400;color:#000;transform:scaleX(1.128);transform-origin:100% 0;-webkit-text-stroke:0.3px #000;">-1 200,00 €</div>
<div class="r" style="left:98px;top:1248px;width:504px;height:29px;background:#cdcdcd;"></div>
<div class="r" style="left:100px;top:1250px;width:501px;height:26px;background:#b4bec8;"></div>
<div class="t" style="left:116px;top:1262.40px;font-size:21.7px;font-weight:700;color:#000;transform:scaleX(0.88);transform-origin:0 0;">COMPTES CRÉDITEURS</div>
<div class="t" style="left:116px;top:1292.95px;font-size:18.7px;font-weight:400;color:#000;transform:scaleX(0.913);transform-origin:0 0;">BUDGET</div>
<div class="r" style="left:601px;top:1276px;width:116px;height:30px;background:#cdcdcd;"></div>
<div class="r" style="left:603px;top:1278px;width:113px;height:27px;background:#cfa68b;"></div>
<div class="t" style="right:2167.7px;top:1292.63px;font-size:18.2px;font-weight:400;color:#000;transform:scaleX(1.086);transform-origin:100% 0;">1 000,00 €</div>
<div class="r" style="left:716px;top:1276px;width:117px;height:30px;background:#cdcdcd;"></div>
<div class="r" style="left:718px;top:1278px;width:114px;height:27px;background:#cfa68b;"></div>
<div class="t" style="right:2051.7px;top:1292.63px;font-size:18.2px;font-weight:400;color:#000;transform:scaleX(1.086);transform-origin:100% 0;">1 000,00 €</div>
<div class="r" style="left:832px;top:1276px;width:116px;height:30px;background:#cdcdcd;"></div>
<div class="r" style="left:834px;top:1278px;width:113px;height:27px;background:#cfa68b;"></div>
<div class="t" style="right:1936.7px;top:1292.63px;font-size:18.2px;font-weight:400;color:#000;transform:scaleX(1.086);transform-origin:100% 0;">1 000,00 €</div>
<div class="t" style="right:1765.7px;top:1292.63px;font-size:18.2px;font-weight:400;color:#000;transform:scaleX(1.086);transform-origin:100% 0;">3 000,00 €</div>
<div class="r" style="left:1118px;top:1276px;width:117px;height:30px;background:#cdcdcd;"></div>
<div class="r" style="left:1121px;top:1278px;width:113px;height:27px;background:#acacac;"></div>
<div class="t" style="right:1649.7px;top:1292.63px;font-size:18.2px;font-weight:400;color:#000;transform:scaleX(1.086);transform-origin:100% 0;">1 000,00 €</div>
<div class="r" style="left:1234px;top:1276px;width:116px;height:30px;background:#cdcdcd;"></div>
<div class="r" style="left:1236px;top:1278px;width:113px;height:27px;background:#acacac;"></div>
<div class="t" style="right:1534.7px;top:1292.63px;font-size:18.2px;font-weight:400;color:#000;transform:scaleX(1.086);transform-origin:100% 0;">1 000,00 €</div>
<div class="r" style="left:1349px;top:1276px;width:117px;height:30px;background:#cdcdcd;"></div>
<div class="r" style="left:1351px;top:1278px;width:114px;height:27px;background:#acacac;"></div>
<div class="t" style="right:1418.7px;top:1292.63px;font-size:18.2px;font-weight:400;color:#000;transform:scaleX(1.086);transform-origin:100% 0;">1 000,00 €</div>
<div class="t" style="right:1235.7px;top:1292.63px;font-size:18.2px;font-weight:400;color:#000;transform:scaleX(1.086);transform-origin:100% 0;">3 000,00 €</div>
<div class="r" style="left:1648px;top:1276px;width:117px;height:30px;background:#cdcdcd;"></div>
<div class="r" style="left:1651px;top:1278px;width:113px;height:27px;background:#cdb782;"></div>
<div class="t" style="right:1119.7px;top:1292.63px;font-size:18.2px;font-weight:400;color:#000;transform:scaleX(1.086);transform-origin:100% 0;">1 000,00 €</div>
<div class="r" style="left:1764px;top:1276px;width:116px;height:30px;background:#cdcdcd;"></div>
<div class="r" style="left:1766px;top:1278px;width:113px;height:27px;background:#cdb782;"></div>
<div class="t" style="right:1004.7px;top:1292.63px;font-size:18.2px;font-weight:400;color:#000;transform:scaleX(1.086);transform-origin:100% 0;">1 000,00 €</div>
<div class="r" style="left:1879px;top:1276px;width:117px;height:30px;background:#cdcdcd;"></div>
<div class="r" style="left:1881px;top:1278px;width:114px;height:27px;background:#cdb782;"></div>
<div class="t" style="right:888.7px;top:1292.63px;font-size:18.2px;font-weight:400;color:#000;transform:scaleX(1.086);transform-origin:100% 0;">1 000,00 €</div>
<div class="t" style="right:728.6999999999998px;top:1292.63px;font-size:18.2px;font-weight:400;color:#000;transform:scaleX(1.086);transform-origin:100% 0;">3 000,00 €</div>
<div class="r" style="left:2155px;top:1276px;width:117px;height:30px;background:#cdcdcd;"></div>
<div class="r" style="left:2158px;top:1278px;width:113px;height:27px;background:#8fa0bc;"></div>
<div class="t" style="right:612.6999999999998px;top:1292.63px;font-size:18.2px;font-weight:400;color:#000;transform:scaleX(1.086);transform-origin:100% 0;">1 000,00 €</div>
<div class="r" style="left:2271px;top:1276px;width:117px;height:30px;background:#cdcdcd;"></div>
<div class="r" style="left:2273px;top:1278px;width:114px;height:27px;background:#8fa0bc;"></div>
<div class="t" style="right:496.6999999999998px;top:1292.63px;font-size:18.2px;font-weight:400;color:#000;transform:scaleX(1.086);transform-origin:100% 0;">1 000,00 €</div>
<div class="r" style="left:2387px;top:1276px;width:116px;height:30px;background:#cdcdcd;"></div>
<div class="r" style="left:2389px;top:1278px;width:113px;height:27px;background:#8fa0bc;"></div>
<div class="t" style="right:381.6999999999998px;top:1292.63px;font-size:18.2px;font-weight:400;color:#000;transform:scaleX(1.086);transform-origin:100% 0;">1 000,00 €</div>
<div class="t" style="right:265.6999999999998px;top:1292.63px;font-size:18.2px;font-weight:400;color:#000;transform:scaleX(1.086);transform-origin:100% 0;">3 000,00 €</div>
<div class="r" style="left:2502px;top:1276px;width:117px;height:30px;background:#cdcdcd;"></div>
<div class="r" style="left:2504px;top:1278px;width:113px;height:27px;background:#b3bac9;"></div>
<div class="t" style="right:265.6999999999998px;top:1292.63px;font-size:18.2px;font-weight:400;color:#000;transform:scaleX(1.086);transform-origin:100% 0;">3 000,00 €</div>
<div class="r" style="left:2618px;top:1276px;width:124px;height:30px;background:#cdcdcd;"></div>
<div class="r" style="left:2621px;top:1278px;width:120px;height:27px;background:#b6c0ca;"></div>
<div class="t" style="right:142.69999999999982px;top:1292.61px;font-size:19.7px;font-weight:400;color:#000;transform:scaleX(1.128);transform-origin:100% 0;-webkit-text-stroke:0.3px #000;">12 000,00 €</div>
<div class="t" style="left:116px;top:1320.95px;font-size:18.7px;font-weight:400;color:#000;transform:scaleX(0.867);transform-origin:0 0;">RÉEL</div>
<div class="r" style="left:601px;top:1305px;width:116px;height:29px;background:#cdcdcd;"></div>
<div class="r" style="left:603px;top:1307px;width:113px;height:26px;background:#cfa68b;"></div>
<div class="t" style="right:2167.7px;top:1320.63px;font-size:18.2px;font-weight:400;color:#000;transform:scaleX(1.086);transform-origin:100% 0;">500,00 €</div>
<div class="r" style="left:716px;top:1305px;width:117px;height:29px;background:#cdcdcd;"></div>
<div class="r" style="left:718px;top:1307px;width:114px;height:26px;background:#cfa68b;"></div>
<div class="t" style="right:2051.7px;top:1320.63px;font-size:18.2px;font-weight:400;color:#000;transform:scaleX(1.086);transform-origin:100% 0;">700,00 €</div>
<div class="r" style="left:832px;top:1305px;width:116px;height:29px;background:#cdcdcd;"></div>
<div class="r" style="left:834px;top:1307px;width:113px;height:26px;background:#cfa68b;"></div>
<div class="t" style="right:1936.7px;top:1320.63px;font-size:18.2px;font-weight:400;color:#000;transform:scaleX(1.086);transform-origin:100% 0;">1 100,00 €</div>
<div class="t" style="right:1765.7px;top:1320.63px;font-size:18.2px;font-weight:400;color:#000;transform:scaleX(1.086);transform-origin:100% 0;">2 300,00 €</div>
<div class="r" style="left:1118px;top:1305px;width:117px;height:29px;background:#cdcdcd;"></div>
<div class="r" style="left:1121px;top:1307px;width:113px;height:26px;background:#acacac;"></div>
<div class="t" style="right:1649.7px;top:1320.63px;font-size:18.2px;font-weight:400;color:#000;transform:scaleX(1.086);transform-origin:100% 0;">500,00 €</div>
<div class="r" style="left:1234px;top:1305px;width:116px;height:29px;background:#cdcdcd;"></div>
<div class="r" style="left:1236px;top:1307px;width:113px;height:26px;background:#acacac;"></div>
<div class="t" style="right:1534.7px;top:1320.63px;font-size:18.2px;font-weight:400;color:#000;transform:scaleX(1.086);transform-origin:100% 0;">700,00 €</div>
<div class="r" style="left:1349px;top:1305px;width:117px;height:29px;background:#cdcdcd;"></div>
<div class="r" style="left:1351px;top:1307px;width:114px;height:26px;background:#acacac;"></div>
<div class="t" style="right:1418.7px;top:1320.63px;font-size:18.2px;font-weight:400;color:#000;transform:scaleX(1.086);transform-origin:100% 0;">1 100,00 €</div>
<div class="t" style="right:1235.7px;top:1320.63px;font-size:18.2px;font-weight:400;color:#000;transform:scaleX(1.086);transform-origin:100% 0;">2 300,00 €</div>
<div class="r" style="left:1648px;top:1305px;width:117px;height:29px;background:#cdcdcd;"></div>
<div class="r" style="left:1651px;top:1307px;width:113px;height:26px;background:#cdb782;"></div>
<div class="t" style="right:1119.7px;top:1320.63px;font-size:18.2px;font-weight:400;color:#000;transform:scaleX(1.086);transform-origin:100% 0;">500,00 €</div>
<div class="r" style="left:1764px;top:1305px;width:116px;height:29px;background:#cdcdcd;"></div>
<div class="r" style="left:1766px;top:1307px;width:113px;height:26px;background:#cdb782;"></div>
<div class="t" style="right:1004.7px;top:1320.63px;font-size:18.2px;font-weight:400;color:#000;transform:scaleX(1.086);transform-origin:100% 0;">700,00 €</div>
<div class="r" style="left:1879px;top:1305px;width:117px;height:29px;background:#cdcdcd;"></div>
<div class="r" style="left:1881px;top:1307px;width:114px;height:26px;background:#cdb782;"></div>
<div class="t" style="right:888.7px;top:1320.63px;font-size:18.2px;font-weight:400;color:#000;transform:scaleX(1.086);transform-origin:100% 0;">1 100,00 €</div>
<div class="t" style="right:728.6999999999998px;top:1320.63px;font-size:18.2px;font-weight:400;color:#000;transform:scaleX(1.086);transform-origin:100% 0;">2 300,00 €</div>
<div class="r" style="left:2155px;top:1305px;width:117px;height:29px;background:#cdcdcd;"></div>
<div class="r" style="left:2158px;top:1307px;width:113px;height:26px;background:#8fa0bc;"></div>
<div class="t" style="right:612.6999999999998px;top:1320.63px;font-size:18.2px;font-weight:400;color:#000;transform:scaleX(1.086);transform-origin:100% 0;">500,00 €</div>
<div class="r" style="left:2271px;top:1305px;width:117px;height:29px;background:#cdcdcd;"></div>
<div class="r" style="left:2273px;top:1307px;width:114px;height:26px;background:#8fa0bc;"></div>
<div class="t" style="right:496.6999999999998px;top:1320.63px;font-size:18.2px;font-weight:400;color:#000;transform:scaleX(1.086);transform-origin:100% 0;">700,00 €</div>
<div class="r" style="left:2387px;top:1305px;width:116px;height:29px;background:#cdcdcd;"></div>
<div class="r" style="left:2389px;top:1307px;width:113px;height:26px;background:#8fa0bc;"></div>
<div class="t" style="right:381.6999999999998px;top:1320.63px;font-size:18.2px;font-weight:400;color:#000;transform:scaleX(1.086);transform-origin:100% 0;">1 100,00 €</div>
<div class="t" style="right:265.6999999999998px;top:1320.63px;font-size:18.2px;font-weight:400;color:#000;transform:scaleX(1.086);transform-origin:100% 0;">2 300,00 €</div>
<div class="r" style="left:2502px;top:1305px;width:117px;height:29px;background:#cdcdcd;"></div>
<div class="r" style="left:2504px;top:1307px;width:113px;height:26px;background:#b3bac9;"></div>
<div class="t" style="right:265.6999999999998px;top:1320.63px;font-size:18.2px;font-weight:400;color:#000;transform:scaleX(1.086);transform-origin:100% 0;">2 300,00 €</div>
<div class="r" style="left:2618px;top:1305px;width:124px;height:29px;background:#cdcdcd;"></div>
<div class="r" style="left:2621px;top:1307px;width:120px;height:26px;background:#b6c0ca;"></div>
<div class="t" style="right:142.69999999999982px;top:1320.61px;font-size:19.7px;font-weight:400;color:#000;transform:scaleX(1.128);transform-origin:100% 0;-webkit-text-stroke:0.3px #000;">9 200,00 €</div>
<div class="t" style="left:116px;top:1349.95px;font-size:18.7px;font-weight:400;color:#000;transform:scaleX(0.957);transform-origin:0 0;">VARIANCE</div>
<div class="t" style="right:2167.7px;top:1349.63px;font-size:18.2px;font-weight:400;color:#000;transform:scaleX(1.086);transform-origin:100% 0;">-500,00 €</div>
<div class="t" style="right:2051.7px;top:1349.63px;font-size:18.2px;font-weight:400;color:#000;transform:scaleX(1.086);transform-origin:100% 0;">-300,00 €</div>
<div class="t" style="right:1936.7px;top:1349.63px;font-size:18.2px;font-weight:400;color:#000;transform:scaleX(1.086);transform-origin:100% 0;">100,00 €</div>
<div class="t" style="right:1765.7px;top:1349.63px;font-size:18.2px;font-weight:400;color:#000;transform:scaleX(1.086);transform-origin:100% 0;">-700,00 €</div>
<div class="t" style="right:1649.7px;top:1349.63px;font-size:18.2px;font-weight:400;color:#000;transform:scaleX(1.086);transform-origin:100% 0;">-500,00 €</div>
<div class="t" style="right:1534.7px;top:1349.63px;font-size:18.2px;font-weight:400;color:#000;transform:scaleX(1.086);transform-origin:100% 0;">-300,00 €</div>
<div class="t" style="right:1418.7px;top:1349.63px;font-size:18.2px;font-weight:400;color:#000;transform:scaleX(1.086);transform-origin:100% 0;">100,00 €</div>
<div class="t" style="right:1235.7px;top:1349.63px;font-size:18.2px;font-weight:400;color:#000;transform:scaleX(1.086);transform-origin:100% 0;">-700,00 €</div>
<div class="t" style="right:1119.7px;top:1349.63px;font-size:18.2px;font-weight:400;color:#000;transform:scaleX(1.086);transform-origin:100% 0;">-500,00 €</div>
<div class="t" style="right:1004.7px;top:1349.63px;font-size:18.2px;font-weight:400;color:#000;transform:scaleX(1.086);transform-origin:100% 0;">-300,00 €</div>
<div class="t" style="right:888.7px;top:1349.63px;font-size:18.2px;font-weight:400;color:#000;transform:scaleX(1.086);transform-origin:100% 0;">100,00 €</div>
<div class="t" style="right:728.6999999999998px;top:1349.63px;font-size:18.2px;font-weight:400;color:#000;transform:scaleX(1.086);transform-origin:100% 0;">-700,00 €</div>
<div class="t" style="right:612.6999999999998px;top:1349.63px;font-size:18.2px;font-weight:400;color:#000;transform:scaleX(1.086);transform-origin:100% 0;">-500,00 €</div>
<div class="t" style="right:496.6999999999998px;top:1349.63px;font-size:18.2px;font-weight:400;color:#000;transform:scaleX(1.086);transform-origin:100% 0;">-300,00 €</div>
<div class="t" style="right:381.6999999999998px;top:1349.63px;font-size:18.2px;font-weight:400;color:#000;transform:scaleX(1.086);transform-origin:100% 0;">100,00 €</div>
<div class="t" style="right:265.6999999999998px;top:1349.63px;font-size:18.2px;font-weight:400;color:#000;transform:scaleX(1.086);transform-origin:100% 0;">-700,00 €</div>
<div class="r" style="left:2502px;top:1333px;width:117px;height:30px;background:#cdcdcd;"></div>
<div class="r" style="left:2504px;top:1335px;width:113px;height:27px;background:#b3bac9;"></div>
<div class="t" style="right:265.6999999999998px;top:1349.63px;font-size:18.2px;font-weight:400;color:#000;transform:scaleX(1.086);transform-origin:100% 0;">-700,00 €</div>
<div class="r" style="left:2618px;top:1333px;width:124px;height:30px;background:#cdcdcd;"></div>
<div class="r" style="left:2621px;top:1335px;width:120px;height:27px;background:#b6c0ca;"></div>
<div class="t" style="right:142.69999999999982px;top:1349.61px;font-size:19.7px;font-weight:400;color:#000;transform:scaleX(1.128);transform-origin:100% 0;-webkit-text-stroke:0.3px #000;">-2 800,00 €</div>
<svg style="left:0;top:0" width="1" height="1"><polygon points="707,593 715,593 715,601" fill="#d8771f"/></svg>
<div class="r" style="left:0px;top:1375px;width:2880px;height:1px;background:#a9a9a9;"></div>
<div class="r" style="left:0px;top:1376px;width:2880px;height:39px;background:#c4c4c4;"></div>
<div class="r" style="left:193px;top:1375px;width:79px;height:38px;background:#cdcdcd;"></div>
<div class="r" style="left:193px;top:1375px;width:79px;height:5px;background:#2d6d4c;"></div>
<div class="t" style="left:232.4px;top:1394.92px;font-size:16.5px;font-weight:700;color:#363636;transform:translateX(-50%);">Feuil1</div>
<div class="r" style="left:193px;top:1380px;width:1px;height:33px;background:#a9a9a9;"></div>
<div class="r" style="left:271px;top:1380px;width:1px;height:33px;background:#a9a9a9;"></div>
<div class="t" style="left:1461.3px;top:1394.01px;font-size:18.25px;font-weight:400;color:#363636;transform:translateX(-50%);">Toutes les modifications ont été enregistrées</div>
<div class="t" style="left:2726.2px;top:1394.05px;font-size:17px;font-weight:400;color:#363636;transform:translateX(-50%);">Zoom 100%</div>
<div class="r" style="left:0px;top:1413px;width:2880px;height:2px;background:#d8d8d8;"></div>
<div class="r" style="left:2801px;top:219px;width:21px;height:1135px;background:#b5b5b5;"></div>
<div class="r" style="left:2820.5px;top:182px;width:1.5px;height:1193px;background:#a9a9a9;"></div>
<div class="r" style="left:2801px;top:222px;width:18px;height:18px;box-sizing:border-box;border:1px solid #a9a9a9;background:#c3c3c3"></div>
<div class="r" style="left:2801px;top:243px;width:18px;height:629px;box-sizing:border-box;border:1px solid #a6a6a6;background:#c2c2c2"></div>
<div class="r" style="left:2801px;top:1333px;width:18px;height:18px;box-sizing:border-box;border:1px solid #a9a9a9;background:#c3c3c3"></div>
<div class="r" style="left:60px;top:1354px;width:2762px;height:21px;background:#b5b5b5;"></div>
<div class="r" style="left:62px;top:1355px;width:18px;height:18px;box-sizing:border-box;border:1px solid #a9a9a9;background:#c3c3c3"></div>
<div class="r" style="left:83px;top:1355px;width:2695px;height:18px;box-sizing:border-box;border:1px solid #a6a6a6;background:#c2c2c2"></div>
<div class="r" style="left:2780px;top:1355px;width:18px;height:18px;box-sizing:border-box;border:1px solid #a9a9a9;background:#c3c3c3"></div>
<svg style="left:0;top:0" width="1" height="1"><polygon points="2805.2,233.3 2815.2,233.3 2810.2,227" fill="#959595"/><polygon points="2805.2,1339 2815.2,1339 2810.2,1345.3" fill="#959595"/><polygon points="66,1363.5 72.3,1358.5 72.3,1368.5" fill="#959595"/><polygon points="2793,1363.5 2786.7,1358.5 2786.7,1368.5" fill="#959595"/><path d="M2806.6,551 H2814 M2806.6,553 H2814 M2806.6,555 H2814 M2806.6,557 H2814 M2806.6,559 H2814 M2806.6,561 H2814 M2806.6,563 H2814" stroke="#a0a0a0" stroke-width="1"/><path d="M1420,1359 V1368 M1422,1359 V1368 M1424,1359 V1368 M1426,1359 V1368 M1428,1359 V1368 M1430,1359 V1368 M1432,1359 V1368 M1434,1359 V1368" stroke="#a0a0a0" stroke-width="1"/></svg>
<svg style="left:0;top:0;position:absolute" width="2880" height="1415" viewBox="0 0 2880 1415"><path d="M29,8.4 L40.2,13.3 L29,18.3 L17.9,13.3 Z" fill="#c6cfca"/><path d="M18.6,18.2 L29,23.2 L39.5,18.2" stroke="#c6cfca" stroke-opacity="0.75" stroke-width="2.6" fill="none" stroke-linecap="round"/><path d="M18.6,23.4 L29,28.4 L39.5,23.4" stroke="#c6cfca" stroke-opacity="0.5" stroke-width="2.6" fill="none" stroke-linecap="round"/><g stroke="#c6cfca" stroke-width="1.5" fill="none"><path d="M203.3,8.8 H216.9 L221.3,13 V27.1 H203.3 Z"/><rect x="206.6" y="18.1" width="11.2" height="9"/></g><rect x="207" y="8.6" width="8.6" height="5.5" fill="#c6cfca"/><rect x="212.3" y="9.6" width="1.6" height="3" fill="#2f6d4b"/><g stroke="#c6cfca" stroke-width="1.5" fill="none"><rect x="266.6" y="8.8" width="13.4" height="4.4"/><path d="M266,24.5 H261.6 V13.2 H284.6 V24.5 H280.6"/><rect x="266.6" y="19.6" width="13.4" height="7.6"/></g><rect x="263.5" y="15.6" width="1.3" height="1.3" fill="#c6cfca"/><path d="M323,25 L323,14.2 L327.8,19 C333,14 340,15 344,21.5" stroke="none" fill="none"/><path d="M326.5,20.5 C331,14.8 339.5,15 344,21.8" stroke="#c6cfca" stroke-width="2.2" fill="none"/><path d="M322.3,14.3 L322.3,25 L333,25 Z" fill="#c6cfca"/><g opacity="0.5"><path d="M399.3,20.5 C394.8,14.8 386.3,15 381.8,21.8" stroke="#c6cfca" stroke-width="2.2" fill="none"/><path d="M403.5,14.3 L403.5,25 L392.8,25 Z" fill="#c6cfca"/></g><circle cx="2851.3" cy="18.8" r="15" fill="#b0bdb5"/><g stroke="#c6cfca" stroke-width="1.4" fill="none"><path d="M2780.2,52.5 H2792 V55.7 H2803 V70.8 H2780.2 Z"/><path d="M2785.5,62.9 H2795.2 M2792,59.7 L2795.5,62.9 L2792,66.1"/></g><g stroke="#c6cfca" stroke-width="1.5" fill="none"><circle cx="2849" cy="58.4" r="7.9"/><path d="M2854.8,64.2 L2861.3,70.7"/></g><g stroke="#2b2b2b" stroke-width="1.5" fill="none"><path d="M33.8,105.2 V102 H20.5 V113.8 H23.8"/><rect x="26.6" y="108.1" width="13" height="11.8"/></g><g stroke="#2b2b2b" stroke-width="1.2"><path d="M29,111.1 H37.1 M29,114.1 H37.1 M29,117.1 H37.1 M23,105.1 H31.4"/></g><rect x="22.4" y="107.5" width="1.3" height="1.3" fill="#2b2b2b"/><rect x="22.4" y="110.5" width="1.3" height="1.3" fill="#2b2b2b"/><g stroke="#2b2b2b" stroke-width="1.5" fill="none"><path d="M36.8,147.4 V144.2 H20.5 V155.8 H23.8"/><rect x="26.6" y="150.1" width="13" height="11.8"/></g><rect x="24.2" y="142" width="8.4" height="3.6" rx="1" fill="#2b2b2b"/><g stroke="#2b2b2b" stroke-width="1.2"><path d="M29,153.1 H37.1 M29,156.1 H37.1 M29,159.1 H37.1"/></g><g stroke="#2b2b2b" stroke-width="1.4" fill="none"><circle cx="68.3" cy="105.1" r="3.4"/><circle cx="68.3" cy="115.6" r="3.4"/><path d="M71.2,107 L86.9,117.1 M71.2,113.7 L86.9,103.3"/></g><path d="M65.6,142.8 H85 V146 M65.6,142.8 V160.4 H70" stroke="#2b2b2b" stroke-width="1.6" fill="none" stroke-dasharray="2.2,2.2"/><path d="M75.8,148.3 L75.8,162.4 L78.8,159.4 L81.5,164.8 L83.5,163.8 L80.9,158.4 L85.4,157.6 Z" fill="none" stroke="#2b2b2b" stroke-width="1.3"/><g stroke="#2b2b2b" stroke-width="1.5" fill="none"><path d="M167,108.3 V102.2 H149.8 V123.9 H156.8"/><rect x="160.1" y="111.8" width="17.3" height="14"/><path d="M160.1,116.8 H177.4 M160.1,121.5 H177.4 M168.9,112 V125.8"/><path d="M170.4,102.2 H174.8 V107.5"/></g><rect x="160" y="111.3" width="17.6" height="2" fill="#2b2b2b"/><path d="M172.5,106 L174.8,108.6 L177.1,106" stroke="#2b2b2b" stroke-width="1.3" fill="none"/><g stroke="#2b2b2b" stroke-width="1.6"><path d="M153.4,106.6 H163 M153.4,110.9 H156.8 M153.4,115.3 H156.8 M153.4,120 H156.8"/></g><g stroke="#2b2b2b" stroke-width="1.6" fill="none"><path d="M269.5,128.9 H259.4 V98.1 H272.3 L281.1,106.9 V115.6"/><path d="M272.3,98.1 V106.3 H281.1"/><path d="M270,123.8 H268.85 A3.85,3.85 0 0 1 268.85,116.1 H275.75 A3.85,3.85 0 0 1 278.9,122.2"/><path d="M276.5,120.4 H282.8 A3.9,3.9 0 0 1 282.8,128.2 H277 A3.9,3.9 0 0 1 274.3,121.5"/></g><path d="M336.5,103 H353.6 L348,110.2 V117.4 L345.5,119.2 L343.4,117.4 V110.2 Z" fill="#2b2b2b"/><path d="M335.3,145.2 H352 L347.1,151.5 V160 L345,161.5 L343.3,160 V151.5 Z" fill="#7a7a7a"/><path d="M348.6,155.8 L355.2,162 M355.2,155.8 L348.6,162" stroke="#8a8a8a" stroke-width="1"/><text x="386.4" y="108.6" font-family="Liberation Sans" font-weight="700" font-size="12" fill="#2b2b2b" text-anchor="middle">A</text><text x="386.4" y="120.8" font-family="Liberation Sans" font-weight="700" font-size="12" fill="#2b2b2b" text-anchor="middle">Z</text><text x="386.4" y="150.9" font-family="Liberation Sans" font-weight="700" font-size="12" fill="#2b2b2b" text-anchor="middle">Z</text><text x="386.4" y="162.7" font-family="Liberation Sans" font-weight="700" font-size="12" fill="#2b2b2b" text-anchor="middle">A</text><g stroke="#2b2b2b" stroke-width="1.3" fill="none"><path d="M398.3,99.9 V120.2 M395,116.8 L398.3,120.4 L401.6,116.8"/><path d="M398.3,142 V162 M395,158.6 L398.3,162.2 L401.6,158.6"/></g><g stroke="#2b2b2b" stroke-width="1.6" fill="none"><rect x="458.7" y="100.9" width="25.2" height="25.2"/><path d="M458.7,104.2 H483.9"/><path d="M465.7,108 V122 M462.4,111.3 L465.7,107.9 L469,111.3 M476.3,108 V122 M473,118.6 L476.3,122 L479.6,118.6"/></g><path d="M578,104 Q584,95 591,101.5" stroke="#2b2b2b" stroke-width="1.6" fill="none"/><path d="M591.7,98.3 V104.2 H586.8 Z" fill="#2b2b2b"/><g stroke="#2b2b2b" stroke-width="1.6"><path d="M573.4,114 H582.1 M573.4,117 H582.1 M573.4,120 H582.1 M573.4,122.9 H582.1"/></g><g stroke="#2b2b2b" stroke-width="1.6" fill="none"><rect x="587.7" y="109.6" width="11.5" height="17.6"/><path d="M587.7,115.4 H599.2 M587.7,121.3 H599.2"/></g><g stroke="#2b2b2b" stroke-width="1.3"><path d="M590.2,112.5 H597 M590.2,118.5 H597 M590.2,124.4 H597"/></g><g stroke="#2b2b2b" stroke-width="1.6" fill="none"><rect x="688.1" y="102.2" width="11.6" height="23.7"/><path d="M688.1,108 H699.7 M688.1,113.9 H699.7 M688.1,120.1 H699.7"/><rect x="710.7" y="102.2" width="11.6" height="23.7"/><path d="M710.7,108 H722.3 M710.7,113.9 H722.3 M710.7,120.1 H722.3"/></g><g stroke="#2b2b2b" stroke-width="1.3"><path d="M689.8,105 H697.9 M689.8,111.1 H697.9 M689.8,117.1 H697.9 M689.8,123.1 H697.9 M712.4,105 H720.5 M712.4,111.1 H720.5"/></g><path d="M702.3,114.2 H707 M704.8,111.8 L707.6,114.2 L704.8,116.6" stroke="#2b2b2b" stroke-width="1.4" fill="none"/><g stroke="#2b2b2b" stroke-width="1.7" fill="none"><path d="M845.9,105 H826.2 V110.9 H845.9 M845.9,116.9 H826.2 V122.8 H845.9"/><circle cx="853.2" cy="120" r="4.4"/><path d="M850.2,117 L856.2,123"/></g><path d="M848.5,106.8 L851.4,110.6 L859.1,101.6" stroke="#2b2b2b" stroke-width="2" fill="none"/><g stroke="#2b2b2b" stroke-width="1.5" fill="none"><circle cx="973.4" cy="106.2" r="7.8"/><path d="M979,111.8 L985.3,118.5"/></g><path d="M955,115.6 C957.6,114.5 958.9,115.6 960,118.5 L962.8,125.8 C963.6,127.7 965,128.2 966.8,126.8" stroke="#2b2b2b" stroke-width="2" fill="none"/><path d="M967.4,115.8 C966.2,114.8 964.8,115 963.2,116.9 L956.6,125.6 C955.6,127 954.6,127.8 953.6,127.3" stroke="#2b2b2b" stroke-width="1.3" fill="none"/><circle cx="954.2" cy="127.2" r="1.1" fill="#2b2b2b"/><rect x="965" y="114.3" width="3" height="1.6" fill="#2b2b2b"/><g stroke="#2b2b2b" stroke-width="1.5" fill="none"><path d="M1072.5,100.4 H1066 V103.6 M1066,119.7 V124.4 H1072.5"/><rect x="1076.2" y="100.4" width="12.6" height="24"/><path d="M1076.2,106.4 H1088.8 M1076.2,112.4 H1088.8 M1076.2,118.5 H1088.8"/></g><path d="M1065.4,107.5 V115.9 M1061.2,111.7 H1069.6" stroke="#2b2b2b" stroke-width="2.8"/><g stroke="#2b2b2b" stroke-width="1.5" fill="none"><path d="M1153.4,100.4 H1147.4 V107.9 M1147.4,117.2 V124.4 H1153.4"/><rect x="1143.1" y="108.3" width="8.4" height="8.6"/><path d="M1144,116 L1150.8,109.2"/><rect x="1156.8" y="100.4" width="12.6" height="24"/><path d="M1156.8,106.4 H1169.4 M1156.8,112.4 H1169.4 M1156.8,118.5 H1169.4"/></g><path d="M1074.3999999999999,160.0 L1077.6,163.20000000000002 L1080.8,160.0" stroke="#3a3a3a" stroke-width="1.3" fill="none"/><path d="M1155.2,160.0 L1158.4,163.20000000000002 L1161.6000000000001,160.0" stroke="#3a3a3a" stroke-width="1.3" fill="none"/><path d="M193.3,161.39999999999998 L196.5,164.6 L199.7,161.39999999999998" stroke="#3a3a3a" stroke-width="1.3" fill="none"/><path d="M189.8,195 L193,198.2 L196.2,195" stroke="#3a3a3a" stroke-width="1.3" fill="none"/><path d="M2805.6,194.5 L2808.8,197.7 L2812,194.5" stroke="#3a3a3a" stroke-width="1.4" fill="none"/><text x="214" y="203" font-family="Liberation Serif" font-style="italic" font-size="24" fill="#3a3a3a" textLength="21" lengthAdjust="spacingAndGlyphs">fx</text><g stroke="#2b2b2b" stroke-width="1.5" fill="none"><circle cx="27.6" cy="224.9" r="7.6"/><path d="M33.2,230.5 L40.1,237.4"/></g><path d="M30,290 H20.7 V276.3 H39.6 V286" stroke="#2b2b2b" stroke-width="1.5" fill="none"/><path d="M21.4,290 L23.4,292.8 L27.2,290" stroke="#2b2b2b" stroke-width="1.5" fill="none"/><path d="M24.4,280.4 H35.8 M24.4,285 H32.6" stroke="#2b2b2b" stroke-width="1.4"/><rect x="30.1" y="285.9" width="14.9" height="10.2" rx="2" fill="#d1b04a"/><path d="M33.3,289.6 H41.9 M33.3,292.4 H41.9" stroke="#2b2b2b" stroke-width="1.3"/><g stroke="#2b2b2b" stroke-width="1.5" fill="none"><path d="M38.6,336.5 V333.2 H19 V347.5 L22.3,345.2"/><path d="M24.6,339.5 H41.2 V352.5 L38,349.9 H24.6 Z"/></g><g fill="#2b2b2b"><rect x="27.2" y="343.1" width="1.8" height="1.8"/><rect x="31.8" y="343.1" width="1.8" height="1.8"/><rect x="36.5" y="343.1" width="1.8" height="1.8"/></g><g stroke="#2b2b2b" stroke-width="1.5" fill="none"><path d="M20.4,399.6 V393.2 Q20.4,392 21.6,392 H24 Q25.2,392 25.2,393.2 V399.6 M20.4,396 H25.2"/><path d="M27.6,399 V392 H31.4 Q32.9,392 32.9,393.7 Q32.9,395.4 31.4,395.4 H27.6 M31.4,395.4 Q33.1,395.4 33.1,397.2 Q33.1,399 31.4,399 H27.6"/><path d="M40.6,392 H36.4 Q35.3,392 35.3,393.1 V398.2"/></g><path d="M29.2,403 L32.7,407.6 L41,397.4" stroke="#2b2b2b" stroke-width="1.6" fill="none"/><g stroke="#2b2b2b" stroke-width="1.4" fill="none"><circle cx="30.3" cy="456" r="11.1"/><path d="M30.3,454.8 V460.8"/></g><rect x="29.5" y="451.3" width="1.6" height="1.6" fill="#2b2b2b"/><g stroke="#2b2b2b" stroke-width="1.6" fill="none"><rect x="2843.4" y="219.5" width="20.6" height="16"/><path d="M2843.4,222.6 H2864 M2843.4,232.4 H2864 M2846.6,219.5 V235.5 M2860.8,219.5 V235.5"/></g><rect x="2847.4" y="223.4" width="12.6" height="8.2" fill="#5c5c5c"/><g stroke="#7c7c7c" stroke-width="1.4" fill="none"><rect x="2841.7" y="278.3" width="22.2" height="13.6"/><path d="M2841.7,282.9 H2863.9 M2841.7,287.4 H2863.9 M2849,278.3 V291.9 M2856.5,278.3 V291.9"/></g><rect x="2841" y="277.6" width="23.6" height="2.4" fill="#7c7c7c"/><g stroke="#7c7c7c" stroke-width="1.4" fill="none"><path d="M2855.6,336.5 V332.2 H2843.5 V343.5 H2848.5"/><circle cx="2856" cy="344.3" r="6.6"/></g><g stroke="#7c7c7c" stroke-width="1.4" fill="none"><rect x="2843.5" y="389" width="19" height="18.7"/><circle cx="2847.7" cy="393.5" r="1.6"/><path d="M2843.5,403 L2848.5,398 L2852.5,402 L2857.5,397 L2862.5,401"/></g><g stroke="#7c7c7c" stroke-width="1.4" fill="none"><rect x="2843.9" y="454" width="3.6" height="10.6"/><rect x="2851.4" y="448.2" width="3.6" height="16.4"/><rect x="2858.9" y="446.7" width="3.6" height="17.9"/></g><text x="2852.4" y="521.5" font-family="Liberation Sans" font-weight="700" font-size="21" fill="#7c7c7c" text-anchor="middle">¶</text><text x="2852.5" y="572" font-family="Liberation Sans" font-size="17" fill="#7c7c7c" text-anchor="middle">Ta</text><path d="M2845.8,580.5 Q2853.2,572.5 2860.7,580.5" stroke="#7c7c7c" stroke-width="1.3" fill="none"/><g stroke="#7c7c7c" stroke-width="1.4" fill="none"><rect x="2843.2" y="617.3" width="4.5" height="4.5"/><rect x="2852.3" y="617.3" width="10.3" height="4.5"/><rect x="2843.2" y="626" width="4.5" height="10.5"/><path d="M2852.5,634.3 Q2858.5,634.5 2863,628"/></g><path d="M2850.6,632.3 L2852.5,634.3 L2850.8,636.5 M2861,628.8 L2863.2,626.6 L2864.6,629.4" stroke="#7c7c7c" stroke-width="1.2" fill="none"/><g stroke="#7c7c7c" stroke-width="1.4" fill="none"><path d="M2852,691.5 H2843.7 V672.6 H2861 V683"/><rect x="2846.4" y="675.8" width="11.6" height="3.6"/><path d="M2846.4,683.5 H2852"/></g><path d="M2852.4,683.5 H2865.7 L2861,689 V696.8 L2857.2,694 V689 Z" fill="#7c7c7c"/><g stroke="#6f6f6f" stroke-width="1.3" fill="none"><path d="M37,1386.2 L30.8,1394.5 L37,1402.8"/><path d="M63.3,1386.2 L69.5,1394.5 L63.3,1402.8"/></g><rect x="102.3" y="1376" width="1" height="39" fill="#a9a9a9"/><g stroke="#2e2e2e" stroke-width="1.5" fill="none"><path d="M131.4,1386.7 V1403 M123.2,1394.8 H139.8"/><path d="M157,1387.5 H172.7 M157,1392.3 H172.7 M157,1397.1 H172.7 M157,1401.9 H172.7"/></g><path d="M2640,1394.6 H2654.7 M2807.2,1386.7 V1403 M2799,1394.8 H2815.4" stroke="#2e2e2e" stroke-width="1.5"/></svg>
<div class="t" style="left:2851.5px;top:18.40px;font-size:14px;font-weight:700;color:#2e5a44;transform:translateX(-50%);">AG</div>
<div class="r" style="left:1014px;top:401px;width:852px;height:717px;background:#fff;border-radius:5px;box-shadow:0 0 4px rgba(0,0,0,0.25);overflow:hidden"><div class="r" style="left:0;top:0;width:100%;height:98px;background:#f1f1f1;border-bottom:2px solid #cbcbcb"></div></div>
<div class="t" style="left:1439px;top:450.20px;font-size:38px;font-weight:700;color:#444;transform:translateX(-50%);">Recherche d'objectifs</div>
<svg style="left:0;top:0" width="1" height="1"><path d="M1792,433 L1825,465 M1825,433 L1792,465" stroke="#8a8a8a" stroke-width="2.5" fill="none"/></svg>
<div class="t" style="left:1077px;top:546.10px;font-size:34px;font-weight:400;color:#444;">Définir la cellule</div>
<div class="r" style="left:1076px;top:576px;width:719px;height:66px;box-sizing:border-box;border:2px solid #cfcfcf;border-radius:4px;background:#fff"></div>
<div class="t" style="left:1088px;top:610.10px;font-size:34px;font-weight:400;color:#444;">$F$12</div>
<svg style="left:0;top:0" width="1" height="1"><g stroke="#333" stroke-width="3.5" fill="none"><rect x="1741.5" y="590.5" width="44" height="37"/><line x1="1763.5" y1="590.5" x2="1763.5" y2="627.5"/><line x1="1741.5" y1="609.0" x2="1785.5" y2="609.0"/></g></svg>
<div class="t" style="left:1077px;top:691.90px;font-size:34px;font-weight:400;color:#444;">Valeur</div>
<div class="r" style="left:1076px;top:720px;width:719px;height:66px;box-sizing:border-box;border:2px solid #cfcfcf;border-radius:4px;background:#fff"></div>
<div class="t" style="left:1088px;top:754.10px;font-size:34px;font-weight:400;color:#444;">300</div>
<div class="t" style="left:1077px;top:835.60px;font-size:34px;font-weight:400;color:#444;">En changeant de cellule</div>
<div class="r" style="left:1076px;top:864px;width:719px;height:66px;box-sizing:border-box;border:2px solid #cfcfcf;border-radius:4px;background:#fff"></div>
<div class="t" style="left:1088px;top:898.10px;font-size:34px;font-weight:400;color:#444;">$B$15</div>
<svg style="left:0;top:0" width="1" height="1"><g stroke="#333" stroke-width="3.5" fill="none"><rect x="1741.5" y="878.5" width="44" height="37"/><line x1="1763.5" y1="878.5" x2="1763.5" y2="915.5"/><line x1="1741.5" y1="897.0" x2="1785.5" y2="897.0"/></g></svg>
<div class="r" style="left:1154px;top:1005px;width:269px;height:67px;background:#7d858c;"></div>
<div class="t" style="left:1288.5px;top:1036.10px;font-size:34px;font-weight:700;color:#fff;transform:translateX(-50%);">OK</div>
<div class="r" style="left:1456px;top:1005px;width:267px;height:67px;box-sizing:border-box;border:2px solid #cfcfcf;background:#fff"></div>
<div class="t" style="left:1589.5px;top:1035.75px;font-size:35px;font-weight:700;color:#444;transform:translateX(-50%);">Annuler</div>
</body></html>
